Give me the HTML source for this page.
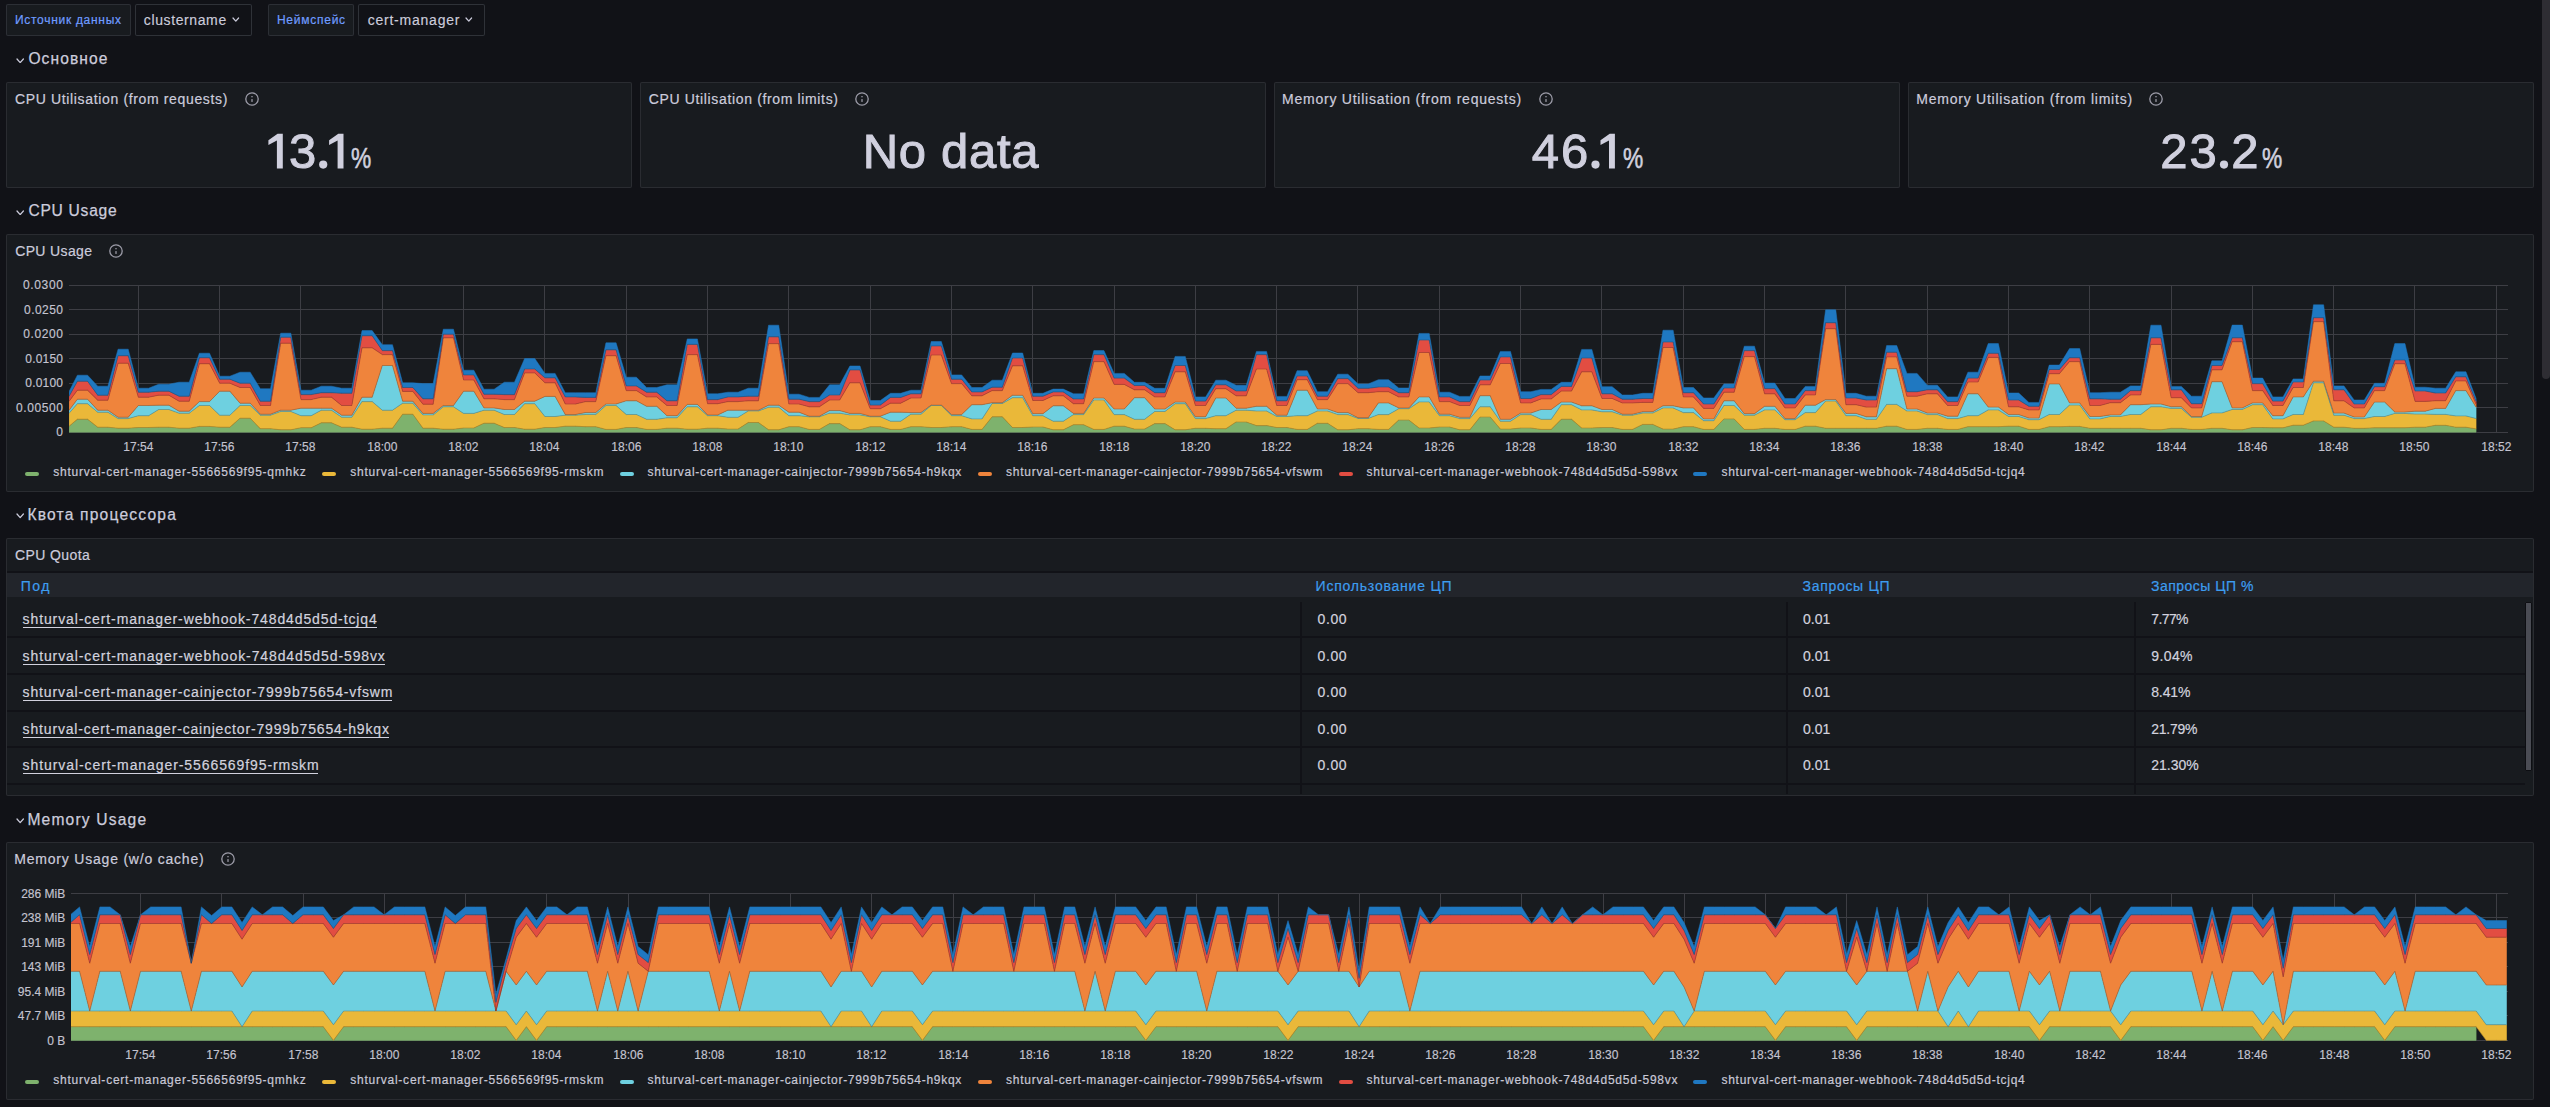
<!DOCTYPE html>
<html><head><meta charset="utf-8"><title>Grafana dashboard</title>
<style>
html,body{margin:0;padding:0;}
body{width:2550px;height:1107px;overflow:hidden;background:#111217;position:relative;font-family:"Liberation Sans",sans-serif;}
.a{position:absolute;}
.t{line-height:1;white-space:nowrap;}
</style></head><body>
<div class="a" style="left:6px;top:4px;width:125px;height:32px;background:#181b1f;box-shadow:inset 0 0 0 1px #2c2f35;border-radius:2px;"></div><div class="a" style="left:135px;top:4px;width:117px;height:32px;background:#111217;box-shadow:inset 0 0 0 1px #2f3238;border-radius:2px;"></div><div class="a" style="left:268px;top:4px;width:86px;height:32px;background:#181b1f;box-shadow:inset 0 0 0 1px #2c2f35;border-radius:2px;"></div><div class="a" style="left:358px;top:4px;width:127px;height:32px;background:#111217;box-shadow:inset 0 0 0 1px #2f3238;border-radius:2px;"></div><svg class="a" style="left:232.2px;top:17.4px" width="7.6" height="5.2"><path d="M1 1 L3.8 4.2 L6.6 1" fill="none" stroke="#ccccdc" stroke-width="1.2" stroke-linecap="round" stroke-linejoin="round"/></svg><svg class="a" style="left:465.0px;top:17.4px" width="7.6" height="5.2"><path d="M1 1 L3.8 4.2 L6.6 1" fill="none" stroke="#ccccdc" stroke-width="1.2" stroke-linecap="round" stroke-linejoin="round"/></svg><svg class="a" style="left:15.8px;top:57.900000000000006px" width="8.4" height="5.6"><path d="M1 1 L4.2 4.6 L7.4 1" fill="none" stroke="#ccccdc" stroke-width="1.25" stroke-linecap="round" stroke-linejoin="round"/></svg><svg class="a" style="left:15.8px;top:209.7px" width="8.4" height="5.6"><path d="M1 1 L4.2 4.6 L7.4 1" fill="none" stroke="#ccccdc" stroke-width="1.25" stroke-linecap="round" stroke-linejoin="round"/></svg><svg class="a" style="left:15.8px;top:513.4000000000001px" width="8.4" height="5.6"><path d="M1 1 L4.2 4.6 L7.4 1" fill="none" stroke="#ccccdc" stroke-width="1.25" stroke-linecap="round" stroke-linejoin="round"/></svg><svg class="a" style="left:15.8px;top:818.4000000000001px" width="8.4" height="5.6"><path d="M1 1 L4.2 4.6 L7.4 1" fill="none" stroke="#ccccdc" stroke-width="1.25" stroke-linecap="round" stroke-linejoin="round"/></svg><div class="a" style="left:6px;top:82px;width:626px;height:106px;background:#181b1f;box-shadow:inset 0 0 0 1px #2a2c31;border-radius:2px;"></div><svg class="a" style="left:243.8px;top:91px" width="16" height="16"><circle cx="8" cy="8" r="6.2" fill="none" stroke="#9c9ca8" stroke-width="1.3"/><rect x="7.35" y="8.1" width="1.3" height="2.8" fill="#9c9ca8"/><rect x="7.35" y="5.0" width="1.3" height="1.3" fill="#9c9ca8"/></svg><svg class="a" style="left:0;top:0;overflow:visible" width="1" height="1"><polygon points="268.40,140.20 277.60,133.70 282.80,133.70 282.80,168.40 276.90,168.40 276.90,140.60 268.40,144.90" fill="#d0d0de"/></svg><svg class="a" style="left:0;top:0;overflow:visible" width="1" height="1"><circle cx="323.20" cy="164.6" r="4.1" fill="#d0d0de"/></svg><svg class="a" style="left:0;top:0;overflow:visible" width="1" height="1"><polygon points="329.10,140.20 338.30,133.70 343.50,133.70 343.50,168.40 337.60,168.40 337.60,140.60 329.10,144.90" fill="#d0d0de"/></svg><div class="a" style="left:640px;top:82px;width:626px;height:106px;background:#181b1f;box-shadow:inset 0 0 0 1px #2a2c31;border-radius:2px;"></div><svg class="a" style="left:853.9px;top:91px" width="16" height="16"><circle cx="8" cy="8" r="6.2" fill="none" stroke="#9c9ca8" stroke-width="1.3"/><rect x="7.35" y="8.1" width="1.3" height="2.8" fill="#9c9ca8"/><rect x="7.35" y="5.0" width="1.3" height="1.3" fill="#9c9ca8"/></svg><div class="a" style="left:1274px;top:82px;width:626px;height:106px;background:#181b1f;box-shadow:inset 0 0 0 1px #2a2c31;border-radius:2px;"></div><svg class="a" style="left:1537.9px;top:91px" width="16" height="16"><circle cx="8" cy="8" r="6.2" fill="none" stroke="#9c9ca8" stroke-width="1.3"/><rect x="7.35" y="8.1" width="1.3" height="2.8" fill="#9c9ca8"/><rect x="7.35" y="5.0" width="1.3" height="1.3" fill="#9c9ca8"/></svg><svg class="a" style="left:0;top:0;overflow:visible" width="1" height="1"><circle cx="1595.50" cy="164.6" r="4.1" fill="#d0d0de"/></svg><svg class="a" style="left:0;top:0;overflow:visible" width="1" height="1"><polygon points="1600.50,140.20 1609.70,133.70 1614.90,133.70 1614.90,168.40 1609.00,168.40 1609.00,140.60 1600.50,144.90" fill="#d0d0de"/></svg><div class="a" style="left:1908px;top:82px;width:626px;height:106px;background:#181b1f;box-shadow:inset 0 0 0 1px #2a2c31;border-radius:2px;"></div><svg class="a" style="left:2147.9px;top:91px" width="16" height="16"><circle cx="8" cy="8" r="6.2" fill="none" stroke="#9c9ca8" stroke-width="1.3"/><rect x="7.35" y="8.1" width="1.3" height="2.8" fill="#9c9ca8"/><rect x="7.35" y="5.0" width="1.3" height="1.3" fill="#9c9ca8"/></svg><svg class="a" style="left:0;top:0;overflow:visible" width="1" height="1"><circle cx="2224.00" cy="164.6" r="4.1" fill="#d0d0de"/></svg><div class="a" style="left:6px;top:234px;width:2528px;height:258px;background:#181b1f;box-shadow:inset 0 0 0 1px #2a2c31;border-radius:2px;"></div><svg class="a" style="left:108px;top:243px" width="16" height="16"><circle cx="8" cy="8" r="6.2" fill="none" stroke="#9c9ca8" stroke-width="1.3"/><rect x="7.35" y="8.1" width="1.3" height="2.8" fill="#9c9ca8"/><rect x="7.35" y="5.0" width="1.3" height="1.3" fill="#9c9ca8"/></svg><svg class="a" style="left:0;top:0" width="2550" height="1107"><defs><clipPath id="cp285"><rect x="69" y="283.2" width="2438" height="150.0"/></clipPath></defs><line x1="69" y1="285.50" x2="2508" y2="285.50" stroke="#3d3e44" stroke-width="1"/><line x1="69" y1="309.50" x2="2508" y2="309.50" stroke="#3d3e44" stroke-width="1"/><line x1="69" y1="334.50" x2="2508" y2="334.50" stroke="#3d3e44" stroke-width="1"/><line x1="69" y1="358.50" x2="2508" y2="358.50" stroke="#3d3e44" stroke-width="1"/><line x1="69" y1="383.50" x2="2508" y2="383.50" stroke="#3d3e44" stroke-width="1"/><line x1="69" y1="407.50" x2="2508" y2="407.50" stroke="#3d3e44" stroke-width="1"/><line x1="69" y1="432.50" x2="2508" y2="432.50" stroke="#3d3e44" stroke-width="1"/><line x1="138.50" y1="285" x2="138.50" y2="433" stroke="#3d3e44" stroke-width="1"/><line x1="219.50" y1="285" x2="219.50" y2="433" stroke="#3d3e44" stroke-width="1"/><line x1="300.50" y1="285" x2="300.50" y2="433" stroke="#3d3e44" stroke-width="1"/><line x1="382.50" y1="285" x2="382.50" y2="433" stroke="#3d3e44" stroke-width="1"/><line x1="463.50" y1="285" x2="463.50" y2="433" stroke="#3d3e44" stroke-width="1"/><line x1="544.50" y1="285" x2="544.50" y2="433" stroke="#3d3e44" stroke-width="1"/><line x1="626.50" y1="285" x2="626.50" y2="433" stroke="#3d3e44" stroke-width="1"/><line x1="707.50" y1="285" x2="707.50" y2="433" stroke="#3d3e44" stroke-width="1"/><line x1="788.50" y1="285" x2="788.50" y2="433" stroke="#3d3e44" stroke-width="1"/><line x1="870.50" y1="285" x2="870.50" y2="433" stroke="#3d3e44" stroke-width="1"/><line x1="951.50" y1="285" x2="951.50" y2="433" stroke="#3d3e44" stroke-width="1"/><line x1="1032.50" y1="285" x2="1032.50" y2="433" stroke="#3d3e44" stroke-width="1"/><line x1="1114.50" y1="285" x2="1114.50" y2="433" stroke="#3d3e44" stroke-width="1"/><line x1="1195.50" y1="285" x2="1195.50" y2="433" stroke="#3d3e44" stroke-width="1"/><line x1="1276.50" y1="285" x2="1276.50" y2="433" stroke="#3d3e44" stroke-width="1"/><line x1="1357.50" y1="285" x2="1357.50" y2="433" stroke="#3d3e44" stroke-width="1"/><line x1="1439.50" y1="285" x2="1439.50" y2="433" stroke="#3d3e44" stroke-width="1"/><line x1="1520.50" y1="285" x2="1520.50" y2="433" stroke="#3d3e44" stroke-width="1"/><line x1="1601.50" y1="285" x2="1601.50" y2="433" stroke="#3d3e44" stroke-width="1"/><line x1="1683.50" y1="285" x2="1683.50" y2="433" stroke="#3d3e44" stroke-width="1"/><line x1="1764.50" y1="285" x2="1764.50" y2="433" stroke="#3d3e44" stroke-width="1"/><line x1="1845.50" y1="285" x2="1845.50" y2="433" stroke="#3d3e44" stroke-width="1"/><line x1="1927.50" y1="285" x2="1927.50" y2="433" stroke="#3d3e44" stroke-width="1"/><line x1="2008.50" y1="285" x2="2008.50" y2="433" stroke="#3d3e44" stroke-width="1"/><line x1="2089.50" y1="285" x2="2089.50" y2="433" stroke="#3d3e44" stroke-width="1"/><line x1="2171.50" y1="285" x2="2171.50" y2="433" stroke="#3d3e44" stroke-width="1"/><line x1="2252.50" y1="285" x2="2252.50" y2="433" stroke="#3d3e44" stroke-width="1"/><line x1="2333.50" y1="285" x2="2333.50" y2="433" stroke="#3d3e44" stroke-width="1"/><line x1="2414.50" y1="285" x2="2414.50" y2="433" stroke="#3d3e44" stroke-width="1"/><line x1="2496.50" y1="285" x2="2496.50" y2="433" stroke="#3d3e44" stroke-width="1"/><g clip-path="url(#cp285)"><polygon points="69.10,426.20 77.40,419.20 87.56,419.20 97.73,427.20 107.89,427.20 118.06,428.20 128.22,428.20 138.38,427.50 148.55,427.50 158.71,427.20 168.88,427.20 179.04,428.20 189.20,428.20 199.37,426.40 209.53,426.40 219.70,427.20 229.86,427.20 240.02,418.20 250.19,418.20 260.35,428.70 270.52,428.70 280.68,429.80 290.84,429.80 301.01,427.70 311.17,427.70 321.34,422.80 331.50,422.80 341.66,427.20 351.83,427.20 361.99,429.20 372.16,429.20 382.32,428.20 392.48,428.20 402.65,414.20 412.81,414.20 422.98,428.20 433.14,428.20 443.30,429.20 453.47,429.20 463.63,428.00 473.80,428.00 483.96,423.20 494.12,423.20 504.29,427.50 514.45,427.50 524.62,429.20 534.78,429.20 544.94,427.50 555.11,427.50 565.27,426.20 575.44,426.20 585.60,426.70 595.76,426.70 605.93,429.40 616.09,429.40 626.26,427.50 636.42,427.50 646.58,429.40 656.75,429.40 666.91,428.20 677.08,428.20 687.24,429.20 697.40,429.20 707.57,428.20 717.73,428.20 727.90,429.10 738.06,429.10 748.22,422.50 758.39,422.50 768.55,429.80 778.72,429.80 788.88,426.70 799.04,426.70 809.21,429.40 819.37,429.40 829.54,423.60 839.70,423.60 849.86,429.80 860.03,429.80 870.19,426.70 880.36,426.70 890.52,429.40 900.68,429.40 910.85,426.70 921.01,426.70 931.18,427.50 941.34,427.50 951.50,426.70 961.67,426.70 971.83,429.40 982.00,429.40 992.16,416.80 1002.32,416.80 1012.49,427.50 1022.65,427.50 1032.82,427.00 1042.98,427.00 1053.14,429.80 1063.31,429.80 1073.47,424.70 1083.64,424.70 1093.80,429.40 1103.96,429.40 1114.13,426.20 1124.29,426.20 1134.46,429.10 1144.62,429.10 1154.78,423.60 1164.95,423.60 1175.11,429.80 1185.28,429.80 1195.44,428.30 1205.60,428.30 1215.77,428.70 1225.93,428.70 1236.10,422.00 1246.26,422.00 1256.42,425.60 1266.59,425.60 1276.75,427.50 1286.92,427.50 1297.08,429.40 1307.24,429.40 1317.41,423.30 1327.57,423.30 1337.74,429.80 1347.90,429.80 1358.06,428.70 1368.23,428.70 1378.39,429.40 1388.56,429.40 1398.72,420.10 1408.88,420.10 1419.05,428.00 1429.21,428.00 1439.38,427.00 1449.54,427.00 1459.70,429.80 1469.87,429.80 1480.03,417.00 1490.20,417.00 1500.36,429.10 1510.52,429.10 1520.69,428.00 1530.85,428.00 1541.02,429.40 1551.18,429.40 1561.34,419.20 1571.51,419.20 1581.67,428.00 1591.84,428.00 1602.00,427.50 1612.16,427.50 1622.33,429.40 1632.49,429.40 1642.66,424.40 1652.82,424.40 1662.98,429.10 1673.15,429.10 1683.31,426.70 1693.48,426.70 1703.64,429.40 1713.80,429.40 1723.97,418.90 1734.13,418.90 1744.30,429.40 1754.46,429.40 1764.62,428.30 1774.79,428.30 1784.95,429.40 1795.12,429.40 1805.28,426.20 1815.44,426.20 1825.61,428.30 1835.77,428.30 1845.94,428.30 1856.10,428.30 1866.26,428.30 1876.43,428.30 1886.59,426.20 1896.76,426.20 1906.92,429.40 1917.08,429.40 1927.25,428.30 1937.41,428.30 1947.58,429.40 1957.74,429.40 1967.90,426.70 1978.07,426.70 1988.23,426.70 1998.40,426.70 2008.56,426.20 2018.72,426.20 2028.89,429.40 2039.05,429.40 2049.22,426.70 2059.38,426.70 2069.54,426.40 2079.71,426.40 2089.87,428.30 2100.04,428.30 2110.20,428.30 2120.36,428.30 2130.53,428.30 2140.69,428.30 2150.86,429.80 2161.02,429.80 2171.18,428.30 2181.35,428.30 2191.51,429.40 2201.68,429.40 2211.84,428.30 2222.00,428.30 2232.17,429.80 2242.33,429.80 2252.50,427.50 2262.66,427.50 2272.82,427.80 2282.99,427.80 2293.15,425.20 2303.32,425.20 2313.48,420.90 2323.64,420.90 2333.81,427.20 2343.97,427.20 2354.14,428.30 2364.30,428.30 2374.46,427.80 2384.63,427.80 2394.79,427.80 2404.96,427.80 2415.12,427.20 2425.28,427.20 2435.45,425.30 2445.61,425.30 2455.78,427.20 2465.94,427.20 2476.10,428.90 2476.10,432.2 69.10,432.2" fill="#7eb26d" stroke="#7eb26d" stroke-width="0.5" stroke-linejoin="round"/><polygon points="69.10,413.20 77.40,403.70 87.56,403.70 97.73,412.20 107.89,412.20 118.06,418.60 128.22,418.60 138.38,415.70 148.55,415.70 158.71,409.50 168.88,409.50 179.04,413.20 189.20,413.20 199.37,405.50 209.53,405.50 219.70,415.20 229.86,415.20 240.02,405.50 250.19,405.50 260.35,415.20 270.52,415.20 280.68,411.50 290.84,411.50 301.01,415.70 311.17,415.70 321.34,410.20 331.50,410.20 341.66,417.20 351.83,417.20 361.99,401.60 372.16,401.60 382.32,410.20 392.48,410.20 402.65,403.20 412.81,403.20 422.98,414.90 433.14,414.90 443.30,406.80 453.47,406.80 463.63,413.40 473.80,413.40 483.96,410.20 494.12,410.20 504.29,414.50 514.45,414.50 524.62,403.70 534.78,403.70 544.94,416.50 555.11,416.50 565.27,415.20 575.44,415.20 585.60,414.50 595.76,414.50 605.93,405.50 616.09,405.50 626.26,414.50 636.42,414.50 646.58,419.30 656.75,419.30 666.91,417.80 677.08,417.80 687.24,406.80 697.40,406.80 707.57,415.70 717.73,415.70 727.90,417.30 738.06,417.30 748.22,411.00 758.39,411.00 768.55,407.20 778.72,407.20 788.88,415.70 799.04,415.70 809.21,416.80 819.37,416.80 829.54,413.20 839.70,413.20 849.86,414.90 860.03,414.90 870.19,416.80 880.36,416.80 890.52,421.20 900.68,421.20 910.85,414.20 921.01,414.20 931.18,405.50 941.34,405.50 951.50,415.70 961.67,415.70 971.83,418.90 982.00,418.90 992.16,403.50 1002.32,403.50 1012.49,397.70 1022.65,397.70 1032.82,415.70 1042.98,415.70 1053.14,421.20 1063.31,421.20 1073.47,414.60 1083.64,414.60 1093.80,400.00 1103.96,400.00 1114.13,414.60 1124.29,414.60 1134.46,419.30 1144.62,419.30 1154.78,411.50 1164.95,411.50 1175.11,403.70 1185.28,403.70 1195.44,418.60 1205.60,418.60 1215.77,415.70 1225.93,415.70 1236.10,410.20 1246.26,410.20 1256.42,411.00 1266.59,411.00 1276.75,416.50 1286.92,416.50 1297.08,415.70 1307.24,415.70 1317.41,411.00 1327.57,411.00 1337.74,414.60 1347.90,414.60 1358.06,418.40 1368.23,418.40 1378.39,414.60 1388.56,414.60 1398.72,408.70 1408.88,408.70 1419.05,401.90 1429.21,401.90 1439.38,415.70 1449.54,415.70 1459.70,418.60 1469.87,418.60 1480.03,406.80 1490.20,406.80 1500.36,421.20 1510.52,421.20 1520.69,414.60 1530.85,414.60 1541.02,419.30 1551.18,419.30 1561.34,404.70 1571.51,404.70 1581.67,409.90 1591.84,409.90 1602.00,411.80 1612.16,411.80 1622.33,415.20 1632.49,415.20 1642.66,413.10 1652.82,413.10 1662.98,407.90 1673.15,407.90 1683.31,412.60 1693.48,412.60 1703.64,420.70 1713.80,420.70 1723.97,405.50 1734.13,405.50 1744.30,415.20 1754.46,415.20 1764.62,409.90 1774.79,409.90 1784.95,419.70 1795.12,419.70 1805.28,412.60 1815.44,412.60 1825.61,401.10 1835.77,401.10 1845.94,415.70 1856.10,415.70 1866.26,419.30 1876.43,419.30 1886.59,404.40 1896.76,404.40 1906.92,411.00 1917.08,411.00 1927.25,414.60 1937.41,414.60 1947.58,418.60 1957.74,418.60 1967.90,415.70 1978.07,415.70 1988.23,409.90 1998.40,409.90 2008.56,416.50 2018.72,416.50 2028.89,419.70 2039.05,419.70 2049.22,414.50 2059.38,414.50 2069.54,405.10 2079.71,405.10 2089.87,418.90 2100.04,418.90 2110.20,416.50 2120.36,416.50 2130.53,414.50 2140.69,414.50 2150.86,406.80 2161.02,406.80 2171.18,408.40 2181.35,408.40 2191.51,417.30 2201.68,417.30 2211.84,412.90 2222.00,412.90 2232.17,409.50 2242.33,409.50 2252.50,404.70 2262.66,404.70 2272.82,418.90 2282.99,418.90 2293.15,414.50 2303.32,414.50 2313.48,382.80 2323.64,382.80 2333.81,415.20 2343.97,415.20 2354.14,418.60 2364.30,418.60 2374.46,416.50 2384.63,416.50 2394.79,413.40 2404.96,413.40 2415.12,414.10 2425.28,414.10 2435.45,414.40 2445.61,414.40 2455.78,415.90 2465.94,415.90 2476.10,418.50 2476.10,428.90 2465.94,427.20 2455.78,427.20 2445.61,425.30 2435.45,425.30 2425.28,427.20 2415.12,427.20 2404.96,427.80 2394.79,427.80 2384.63,427.80 2374.46,427.80 2364.30,428.30 2354.14,428.30 2343.97,427.20 2333.81,427.20 2323.64,420.90 2313.48,420.90 2303.32,425.20 2293.15,425.20 2282.99,427.80 2272.82,427.80 2262.66,427.50 2252.50,427.50 2242.33,429.80 2232.17,429.80 2222.00,428.30 2211.84,428.30 2201.68,429.40 2191.51,429.40 2181.35,428.30 2171.18,428.30 2161.02,429.80 2150.86,429.80 2140.69,428.30 2130.53,428.30 2120.36,428.30 2110.20,428.30 2100.04,428.30 2089.87,428.30 2079.71,426.40 2069.54,426.40 2059.38,426.70 2049.22,426.70 2039.05,429.40 2028.89,429.40 2018.72,426.20 2008.56,426.20 1998.40,426.70 1988.23,426.70 1978.07,426.70 1967.90,426.70 1957.74,429.40 1947.58,429.40 1937.41,428.30 1927.25,428.30 1917.08,429.40 1906.92,429.40 1896.76,426.20 1886.59,426.20 1876.43,428.30 1866.26,428.30 1856.10,428.30 1845.94,428.30 1835.77,428.30 1825.61,428.30 1815.44,426.20 1805.28,426.20 1795.12,429.40 1784.95,429.40 1774.79,428.30 1764.62,428.30 1754.46,429.40 1744.30,429.40 1734.13,418.90 1723.97,418.90 1713.80,429.40 1703.64,429.40 1693.48,426.70 1683.31,426.70 1673.15,429.10 1662.98,429.10 1652.82,424.40 1642.66,424.40 1632.49,429.40 1622.33,429.40 1612.16,427.50 1602.00,427.50 1591.84,428.00 1581.67,428.00 1571.51,419.20 1561.34,419.20 1551.18,429.40 1541.02,429.40 1530.85,428.00 1520.69,428.00 1510.52,429.10 1500.36,429.10 1490.20,417.00 1480.03,417.00 1469.87,429.80 1459.70,429.80 1449.54,427.00 1439.38,427.00 1429.21,428.00 1419.05,428.00 1408.88,420.10 1398.72,420.10 1388.56,429.40 1378.39,429.40 1368.23,428.70 1358.06,428.70 1347.90,429.80 1337.74,429.80 1327.57,423.30 1317.41,423.30 1307.24,429.40 1297.08,429.40 1286.92,427.50 1276.75,427.50 1266.59,425.60 1256.42,425.60 1246.26,422.00 1236.10,422.00 1225.93,428.70 1215.77,428.70 1205.60,428.30 1195.44,428.30 1185.28,429.80 1175.11,429.80 1164.95,423.60 1154.78,423.60 1144.62,429.10 1134.46,429.10 1124.29,426.20 1114.13,426.20 1103.96,429.40 1093.80,429.40 1083.64,424.70 1073.47,424.70 1063.31,429.80 1053.14,429.80 1042.98,427.00 1032.82,427.00 1022.65,427.50 1012.49,427.50 1002.32,416.80 992.16,416.80 982.00,429.40 971.83,429.40 961.67,426.70 951.50,426.70 941.34,427.50 931.18,427.50 921.01,426.70 910.85,426.70 900.68,429.40 890.52,429.40 880.36,426.70 870.19,426.70 860.03,429.80 849.86,429.80 839.70,423.60 829.54,423.60 819.37,429.40 809.21,429.40 799.04,426.70 788.88,426.70 778.72,429.80 768.55,429.80 758.39,422.50 748.22,422.50 738.06,429.10 727.90,429.10 717.73,428.20 707.57,428.20 697.40,429.20 687.24,429.20 677.08,428.20 666.91,428.20 656.75,429.40 646.58,429.40 636.42,427.50 626.26,427.50 616.09,429.40 605.93,429.40 595.76,426.70 585.60,426.70 575.44,426.20 565.27,426.20 555.11,427.50 544.94,427.50 534.78,429.20 524.62,429.20 514.45,427.50 504.29,427.50 494.12,423.20 483.96,423.20 473.80,428.00 463.63,428.00 453.47,429.20 443.30,429.20 433.14,428.20 422.98,428.20 412.81,414.20 402.65,414.20 392.48,428.20 382.32,428.20 372.16,429.20 361.99,429.20 351.83,427.20 341.66,427.20 331.50,422.80 321.34,422.80 311.17,427.70 301.01,427.70 290.84,429.80 280.68,429.80 270.52,428.70 260.35,428.70 250.19,418.20 240.02,418.20 229.86,427.20 219.70,427.20 209.53,426.40 199.37,426.40 189.20,428.20 179.04,428.20 168.88,427.20 158.71,427.20 148.55,427.50 138.38,427.50 128.22,428.20 118.06,428.20 107.89,427.20 97.73,427.20 87.56,419.20 77.40,419.20 69.10,426.20" fill="#eab839" stroke="#eab839" stroke-width="0.5" stroke-linejoin="round"/><polygon points="69.10,410.20 77.40,399.20 87.56,399.20 97.73,410.20 107.89,410.20 118.06,417.20 128.22,417.20 138.38,405.50 148.55,405.50 158.71,405.20 168.88,405.20 179.04,411.20 189.20,411.20 199.37,401.60 209.53,401.60 219.70,391.20 229.86,391.20 240.02,403.20 250.19,403.20 260.35,414.20 270.52,414.20 280.68,410.20 290.84,410.20 301.01,408.20 311.17,408.20 321.34,408.20 331.50,408.20 341.66,415.20 351.83,415.20 361.99,397.20 372.16,397.20 382.32,365.50 392.48,365.50 402.65,401.20 412.81,401.20 422.98,413.40 433.14,413.40 443.30,405.50 453.47,405.50 463.63,391.20 473.80,391.20 483.96,407.90 494.12,407.90 504.29,409.50 514.45,409.50 524.62,401.20 534.78,401.20 544.94,396.40 555.11,396.40 565.27,414.50 575.44,414.50 585.60,412.60 595.76,412.60 605.93,404.00 616.09,404.00 626.26,400.80 636.42,400.80 646.58,406.30 656.75,406.30 666.91,415.70 677.08,415.70 687.24,404.40 697.40,404.40 707.57,414.90 717.73,414.90 727.90,410.20 738.06,410.20 748.22,410.20 758.39,410.20 768.55,405.20 778.72,405.20 788.88,412.20 799.04,412.20 809.21,416.20 819.37,416.20 829.54,410.60 839.70,410.60 849.86,413.40 860.03,413.40 870.19,416.20 880.36,416.20 890.52,412.20 900.68,412.20 910.85,412.60 921.01,412.60 931.18,405.10 941.34,405.10 951.50,414.60 961.67,414.60 971.83,404.70 982.00,404.70 992.16,402.70 1002.32,402.70 1012.49,395.30 1022.65,395.30 1032.82,413.70 1042.98,413.70 1053.14,405.80 1063.31,405.80 1073.47,413.40 1083.64,413.40 1093.80,398.00 1103.96,398.00 1114.13,409.00 1124.29,409.00 1134.46,397.70 1144.62,397.70 1154.78,409.00 1164.95,409.00 1175.11,402.10 1185.28,402.10 1195.44,416.80 1205.60,416.80 1215.77,398.00 1225.93,398.00 1236.10,408.20 1246.26,408.20 1256.42,406.30 1266.59,406.30 1276.75,415.20 1286.92,415.20 1297.08,390.20 1307.24,390.20 1317.41,409.00 1327.57,409.00 1337.74,412.60 1347.90,412.60 1358.06,417.80 1368.23,417.80 1378.39,402.90 1388.56,402.90 1398.72,407.90 1408.88,407.90 1419.05,396.90 1429.21,396.90 1439.38,414.20 1449.54,414.20 1459.70,417.30 1469.87,417.30 1480.03,395.70 1490.20,395.70 1500.36,419.30 1510.52,419.30 1520.69,413.10 1530.85,413.10 1541.02,409.50 1551.18,409.50 1561.34,402.10 1571.51,402.10 1581.67,405.80 1591.84,405.80 1602.00,409.50 1612.16,409.50 1622.33,414.20 1632.49,414.20 1642.66,411.80 1652.82,411.80 1662.98,405.80 1673.15,405.80 1683.31,407.90 1693.48,407.90 1703.64,418.90 1713.80,418.90 1723.97,400.80 1734.13,400.80 1744.30,413.70 1754.46,413.70 1764.62,406.30 1774.79,406.30 1784.95,418.60 1795.12,418.60 1805.28,405.20 1815.44,405.20 1825.61,399.60 1835.77,399.60 1845.94,413.40 1856.10,413.40 1866.26,416.80 1876.43,416.80 1886.59,368.70 1896.76,368.70 1906.92,409.00 1917.08,409.00 1927.25,413.10 1937.41,413.10 1947.58,416.20 1957.74,416.20 1967.90,393.80 1978.07,393.80 1988.23,407.10 1998.40,407.10 2008.56,414.60 2018.72,414.60 2028.89,418.10 2039.05,418.10 2049.22,383.90 2059.38,383.90 2069.54,402.90 2079.71,402.90 2089.87,416.50 2100.04,416.50 2110.20,414.90 2120.36,414.90 2130.53,404.70 2140.69,404.70 2150.86,404.00 2161.02,404.00 2171.18,406.80 2181.35,406.80 2191.51,416.50 2201.68,416.50 2211.84,381.70 2222.00,381.70 2232.17,407.90 2242.33,407.90 2252.50,402.90 2262.66,402.90 2272.82,415.70 2282.99,415.70 2293.15,396.90 2303.32,396.90 2313.48,381.20 2323.64,381.20 2333.81,413.10 2343.97,413.10 2354.14,417.00 2364.30,417.00 2374.46,402.10 2384.63,402.10 2394.79,412.10 2404.96,412.10 2415.12,411.20 2425.28,411.20 2435.45,408.40 2445.61,408.40 2455.78,390.60 2465.94,390.60 2476.10,407.20 2476.10,418.50 2465.94,415.90 2455.78,415.90 2445.61,414.40 2435.45,414.40 2425.28,414.10 2415.12,414.10 2404.96,413.40 2394.79,413.40 2384.63,416.50 2374.46,416.50 2364.30,418.60 2354.14,418.60 2343.97,415.20 2333.81,415.20 2323.64,382.80 2313.48,382.80 2303.32,414.50 2293.15,414.50 2282.99,418.90 2272.82,418.90 2262.66,404.70 2252.50,404.70 2242.33,409.50 2232.17,409.50 2222.00,412.90 2211.84,412.90 2201.68,417.30 2191.51,417.30 2181.35,408.40 2171.18,408.40 2161.02,406.80 2150.86,406.80 2140.69,414.50 2130.53,414.50 2120.36,416.50 2110.20,416.50 2100.04,418.90 2089.87,418.90 2079.71,405.10 2069.54,405.10 2059.38,414.50 2049.22,414.50 2039.05,419.70 2028.89,419.70 2018.72,416.50 2008.56,416.50 1998.40,409.90 1988.23,409.90 1978.07,415.70 1967.90,415.70 1957.74,418.60 1947.58,418.60 1937.41,414.60 1927.25,414.60 1917.08,411.00 1906.92,411.00 1896.76,404.40 1886.59,404.40 1876.43,419.30 1866.26,419.30 1856.10,415.70 1845.94,415.70 1835.77,401.10 1825.61,401.10 1815.44,412.60 1805.28,412.60 1795.12,419.70 1784.95,419.70 1774.79,409.90 1764.62,409.90 1754.46,415.20 1744.30,415.20 1734.13,405.50 1723.97,405.50 1713.80,420.70 1703.64,420.70 1693.48,412.60 1683.31,412.60 1673.15,407.90 1662.98,407.90 1652.82,413.10 1642.66,413.10 1632.49,415.20 1622.33,415.20 1612.16,411.80 1602.00,411.80 1591.84,409.90 1581.67,409.90 1571.51,404.70 1561.34,404.70 1551.18,419.30 1541.02,419.30 1530.85,414.60 1520.69,414.60 1510.52,421.20 1500.36,421.20 1490.20,406.80 1480.03,406.80 1469.87,418.60 1459.70,418.60 1449.54,415.70 1439.38,415.70 1429.21,401.90 1419.05,401.90 1408.88,408.70 1398.72,408.70 1388.56,414.60 1378.39,414.60 1368.23,418.40 1358.06,418.40 1347.90,414.60 1337.74,414.60 1327.57,411.00 1317.41,411.00 1307.24,415.70 1297.08,415.70 1286.92,416.50 1276.75,416.50 1266.59,411.00 1256.42,411.00 1246.26,410.20 1236.10,410.20 1225.93,415.70 1215.77,415.70 1205.60,418.60 1195.44,418.60 1185.28,403.70 1175.11,403.70 1164.95,411.50 1154.78,411.50 1144.62,419.30 1134.46,419.30 1124.29,414.60 1114.13,414.60 1103.96,400.00 1093.80,400.00 1083.64,414.60 1073.47,414.60 1063.31,421.20 1053.14,421.20 1042.98,415.70 1032.82,415.70 1022.65,397.70 1012.49,397.70 1002.32,403.50 992.16,403.50 982.00,418.90 971.83,418.90 961.67,415.70 951.50,415.70 941.34,405.50 931.18,405.50 921.01,414.20 910.85,414.20 900.68,421.20 890.52,421.20 880.36,416.80 870.19,416.80 860.03,414.90 849.86,414.90 839.70,413.20 829.54,413.20 819.37,416.80 809.21,416.80 799.04,415.70 788.88,415.70 778.72,407.20 768.55,407.20 758.39,411.00 748.22,411.00 738.06,417.30 727.90,417.30 717.73,415.70 707.57,415.70 697.40,406.80 687.24,406.80 677.08,417.80 666.91,417.80 656.75,419.30 646.58,419.30 636.42,414.50 626.26,414.50 616.09,405.50 605.93,405.50 595.76,414.50 585.60,414.50 575.44,415.20 565.27,415.20 555.11,416.50 544.94,416.50 534.78,403.70 524.62,403.70 514.45,414.50 504.29,414.50 494.12,410.20 483.96,410.20 473.80,413.40 463.63,413.40 453.47,406.80 443.30,406.80 433.14,414.90 422.98,414.90 412.81,403.20 402.65,403.20 392.48,410.20 382.32,410.20 372.16,401.60 361.99,401.60 351.83,417.20 341.66,417.20 331.50,410.20 321.34,410.20 311.17,415.70 301.01,415.70 290.84,411.50 280.68,411.50 270.52,415.20 260.35,415.20 250.19,405.50 240.02,405.50 229.86,415.20 219.70,415.20 209.53,405.50 199.37,405.50 189.20,413.20 179.04,413.20 168.88,409.50 158.71,409.50 148.55,415.70 138.38,415.70 128.22,418.60 118.06,418.60 107.89,412.20 97.73,412.20 87.56,403.70 77.40,403.70 69.10,413.20" fill="#6ed0e0" stroke="#6ed0e0" stroke-width="0.5" stroke-linejoin="round"/><polygon points="69.10,401.20 77.40,390.20 87.56,390.20 97.73,400.20 107.89,400.20 118.06,363.20 128.22,363.20 138.38,397.20 148.55,397.20 158.71,395.20 168.88,395.20 179.04,401.20 189.20,401.20 199.37,363.70 209.53,363.70 219.70,383.20 229.86,383.20 240.02,387.50 250.19,387.50 260.35,405.50 270.52,405.50 280.68,343.20 290.84,343.20 301.01,399.60 311.17,399.60 321.34,397.20 331.50,397.20 341.66,405.50 351.83,405.50 361.99,347.80 372.16,347.80 382.32,354.60 392.48,354.60 402.65,391.40 412.81,391.40 422.98,404.20 433.14,404.20 443.30,337.80 453.47,337.80 463.63,380.00 473.80,380.00 483.96,398.80 494.12,398.80 504.29,399.60 514.45,399.60 524.62,372.90 534.78,372.90 544.94,382.80 555.11,382.80 565.27,404.00 575.44,404.00 585.60,401.60 595.76,401.60 605.93,355.70 616.09,355.70 626.26,390.60 636.42,390.60 646.58,396.90 656.75,396.90 666.91,405.50 677.08,405.50 687.24,354.60 697.40,354.60 707.57,403.70 717.73,403.70 727.90,401.60 738.06,401.60 748.22,400.80 758.39,400.80 768.55,343.60 778.72,343.60 788.88,404.00 799.04,404.00 809.21,406.80 819.37,406.80 829.54,400.00 839.70,400.00 849.86,382.80 860.03,382.80 870.19,408.70 880.36,408.70 890.52,403.20 900.68,403.20 910.85,398.00 921.01,398.00 931.18,355.00 941.34,355.00 951.50,383.60 961.67,383.60 971.83,395.80 982.00,395.80 992.16,390.60 1002.32,390.60 1012.49,365.80 1022.65,365.80 1032.82,400.50 1042.98,400.50 1053.14,395.80 1063.31,395.80 1073.47,403.70 1083.64,403.70 1093.80,361.60 1103.96,361.60 1114.13,384.40 1124.29,384.40 1134.46,389.80 1144.62,389.80 1154.78,396.90 1164.95,396.90 1175.11,371.80 1185.28,371.80 1195.44,405.50 1205.60,405.50 1215.77,388.70 1225.93,388.70 1236.10,395.80 1246.26,395.80 1256.42,369.00 1266.59,369.00 1276.75,405.50 1286.92,405.50 1297.08,379.70 1307.24,379.70 1317.41,399.60 1327.57,399.60 1337.74,383.60 1347.90,383.60 1358.06,392.70 1368.23,392.70 1378.39,391.70 1388.56,391.70 1398.72,396.90 1408.88,396.90 1419.05,352.50 1429.21,352.50 1439.38,401.60 1449.54,401.60 1459.70,405.50 1469.87,405.50 1480.03,384.80 1490.20,384.80 1500.36,363.50 1510.52,363.50 1520.69,402.90 1530.85,402.90 1541.02,398.90 1551.18,398.90 1561.34,391.10 1571.51,391.10 1581.67,371.80 1591.84,371.80 1602.00,398.50 1612.16,398.50 1622.33,402.90 1632.49,402.90 1642.66,402.40 1652.82,402.40 1662.98,347.50 1673.15,347.50 1683.31,396.90 1693.48,396.90 1703.64,408.40 1713.80,408.40 1723.97,392.20 1734.13,392.20 1744.30,356.60 1754.46,356.60 1764.62,393.80 1774.79,393.80 1784.95,407.90 1795.12,407.90 1805.28,394.90 1815.44,394.90 1825.61,328.70 1835.77,328.70 1845.94,404.70 1856.10,404.70 1866.26,407.10 1876.43,407.10 1886.59,356.90 1896.76,356.90 1906.92,396.20 1917.08,396.20 1927.25,393.80 1937.41,393.80 1947.58,405.50 1957.74,405.50 1967.90,382.00 1978.07,382.00 1988.23,357.40 1998.40,357.40 2008.56,406.80 2018.72,406.80 2028.89,409.90 2039.05,409.90 2049.22,373.70 2059.38,373.70 2069.54,361.60 2079.71,361.60 2089.87,405.50 2100.04,405.50 2110.20,402.70 2120.36,402.70 2130.53,394.90 2140.69,394.90 2150.86,344.40 2161.02,344.40 2171.18,397.70 2181.35,397.70 2191.51,407.90 2201.68,407.90 2211.84,369.80 2222.00,369.80 2232.17,341.70 2242.33,341.70 2252.50,390.60 2262.66,390.60 2272.82,405.50 2282.99,405.50 2293.15,387.50 2303.32,387.50 2313.48,321.60 2323.64,321.60 2333.81,400.80 2343.97,400.80 2354.14,407.90 2364.30,407.90 2374.46,390.60 2384.63,390.60 2394.79,363.70 2404.96,363.70 2415.12,401.40 2425.28,401.40 2435.45,400.70 2445.61,400.70 2455.78,380.90 2465.94,380.90 2476.10,404.30 2476.10,407.20 2465.94,390.60 2455.78,390.60 2445.61,408.40 2435.45,408.40 2425.28,411.20 2415.12,411.20 2404.96,412.10 2394.79,412.10 2384.63,402.10 2374.46,402.10 2364.30,417.00 2354.14,417.00 2343.97,413.10 2333.81,413.10 2323.64,381.20 2313.48,381.20 2303.32,396.90 2293.15,396.90 2282.99,415.70 2272.82,415.70 2262.66,402.90 2252.50,402.90 2242.33,407.90 2232.17,407.90 2222.00,381.70 2211.84,381.70 2201.68,416.50 2191.51,416.50 2181.35,406.80 2171.18,406.80 2161.02,404.00 2150.86,404.00 2140.69,404.70 2130.53,404.70 2120.36,414.90 2110.20,414.90 2100.04,416.50 2089.87,416.50 2079.71,402.90 2069.54,402.90 2059.38,383.90 2049.22,383.90 2039.05,418.10 2028.89,418.10 2018.72,414.60 2008.56,414.60 1998.40,407.10 1988.23,407.10 1978.07,393.80 1967.90,393.80 1957.74,416.20 1947.58,416.20 1937.41,413.10 1927.25,413.10 1917.08,409.00 1906.92,409.00 1896.76,368.70 1886.59,368.70 1876.43,416.80 1866.26,416.80 1856.10,413.40 1845.94,413.40 1835.77,399.60 1825.61,399.60 1815.44,405.20 1805.28,405.20 1795.12,418.60 1784.95,418.60 1774.79,406.30 1764.62,406.30 1754.46,413.70 1744.30,413.70 1734.13,400.80 1723.97,400.80 1713.80,418.90 1703.64,418.90 1693.48,407.90 1683.31,407.90 1673.15,405.80 1662.98,405.80 1652.82,411.80 1642.66,411.80 1632.49,414.20 1622.33,414.20 1612.16,409.50 1602.00,409.50 1591.84,405.80 1581.67,405.80 1571.51,402.10 1561.34,402.10 1551.18,409.50 1541.02,409.50 1530.85,413.10 1520.69,413.10 1510.52,419.30 1500.36,419.30 1490.20,395.70 1480.03,395.70 1469.87,417.30 1459.70,417.30 1449.54,414.20 1439.38,414.20 1429.21,396.90 1419.05,396.90 1408.88,407.90 1398.72,407.90 1388.56,402.90 1378.39,402.90 1368.23,417.80 1358.06,417.80 1347.90,412.60 1337.74,412.60 1327.57,409.00 1317.41,409.00 1307.24,390.20 1297.08,390.20 1286.92,415.20 1276.75,415.20 1266.59,406.30 1256.42,406.30 1246.26,408.20 1236.10,408.20 1225.93,398.00 1215.77,398.00 1205.60,416.80 1195.44,416.80 1185.28,402.10 1175.11,402.10 1164.95,409.00 1154.78,409.00 1144.62,397.70 1134.46,397.70 1124.29,409.00 1114.13,409.00 1103.96,398.00 1093.80,398.00 1083.64,413.40 1073.47,413.40 1063.31,405.80 1053.14,405.80 1042.98,413.70 1032.82,413.70 1022.65,395.30 1012.49,395.30 1002.32,402.70 992.16,402.70 982.00,404.70 971.83,404.70 961.67,414.60 951.50,414.60 941.34,405.10 931.18,405.10 921.01,412.60 910.85,412.60 900.68,412.20 890.52,412.20 880.36,416.20 870.19,416.20 860.03,413.40 849.86,413.40 839.70,410.60 829.54,410.60 819.37,416.20 809.21,416.20 799.04,412.20 788.88,412.20 778.72,405.20 768.55,405.20 758.39,410.20 748.22,410.20 738.06,410.20 727.90,410.20 717.73,414.90 707.57,414.90 697.40,404.40 687.24,404.40 677.08,415.70 666.91,415.70 656.75,406.30 646.58,406.30 636.42,400.80 626.26,400.80 616.09,404.00 605.93,404.00 595.76,412.60 585.60,412.60 575.44,414.50 565.27,414.50 555.11,396.40 544.94,396.40 534.78,401.20 524.62,401.20 514.45,409.50 504.29,409.50 494.12,407.90 483.96,407.90 473.80,391.20 463.63,391.20 453.47,405.50 443.30,405.50 433.14,413.40 422.98,413.40 412.81,401.20 402.65,401.20 392.48,365.50 382.32,365.50 372.16,397.20 361.99,397.20 351.83,415.20 341.66,415.20 331.50,408.20 321.34,408.20 311.17,408.20 301.01,408.20 290.84,410.20 280.68,410.20 270.52,414.20 260.35,414.20 250.19,403.20 240.02,403.20 229.86,391.20 219.70,391.20 209.53,401.60 199.37,401.60 189.20,411.20 179.04,411.20 168.88,405.20 158.71,405.20 148.55,405.50 138.38,405.50 128.22,417.20 118.06,417.20 107.89,410.20 97.73,410.20 87.56,399.20 77.40,399.20 69.10,410.20" fill="#ef843c" stroke="#ef843c" stroke-width="0.5" stroke-linejoin="round"/><polygon points="69.10,396.20 77.40,381.20 87.56,381.20 97.73,395.20 107.89,395.20 118.06,355.70 128.22,355.70 138.38,392.20 148.55,392.20 158.71,391.20 168.88,391.20 179.04,396.20 189.20,396.20 199.37,357.70 209.53,357.70 219.70,379.20 229.86,379.20 240.02,383.20 250.19,383.20 260.35,401.20 270.52,401.20 280.68,337.20 290.84,337.20 301.01,394.60 311.17,394.60 321.34,392.70 331.50,392.70 341.66,393.20 351.83,393.20 361.99,335.70 372.16,335.70 382.32,350.60 392.48,350.60 402.65,387.50 412.81,387.50 422.98,398.80 433.14,398.80 443.30,334.20 453.47,334.20 463.63,374.90 473.80,374.90 483.96,394.20 494.12,394.20 504.29,394.60 514.45,394.60 524.62,369.00 534.78,369.00 544.94,377.80 555.11,377.80 565.27,396.90 575.44,396.90 585.60,397.40 595.76,397.40 605.93,349.80 616.09,349.80 626.26,385.90 636.42,385.90 646.58,392.20 656.75,392.20 666.91,400.80 677.08,400.80 687.24,344.40 697.40,344.40 707.57,399.60 717.73,399.60 727.90,396.90 738.06,396.90 748.22,396.20 758.39,396.20 768.55,336.80 778.72,336.80 788.88,399.20 799.04,399.20 809.21,401.60 819.37,401.60 829.54,395.00 839.70,395.00 849.86,369.90 860.03,369.90 870.19,405.10 880.36,405.10 890.52,397.40 900.68,397.40 910.85,393.80 921.01,393.80 931.18,345.90 941.34,345.90 951.50,379.20 961.67,379.20 971.83,391.90 982.00,391.90 992.16,387.20 1002.32,387.20 1012.49,358.00 1022.65,358.00 1032.82,396.20 1042.98,396.20 1053.14,391.90 1063.31,391.90 1073.47,398.90 1083.64,398.90 1093.80,354.60 1103.96,354.60 1114.13,378.10 1124.29,378.10 1134.46,385.50 1144.62,385.50 1154.78,392.70 1164.95,392.70 1175.11,365.50 1185.28,365.50 1195.44,401.10 1205.60,401.10 1215.77,384.80 1225.93,384.80 1236.10,390.90 1246.26,390.90 1256.42,354.60 1266.59,354.60 1276.75,400.80 1286.92,400.80 1297.08,376.00 1307.24,376.00 1317.41,396.20 1327.57,396.20 1337.74,378.60 1347.90,378.60 1358.06,388.30 1368.23,388.30 1378.39,387.00 1388.56,387.00 1398.72,392.70 1408.88,392.70 1419.05,340.00 1429.21,340.00 1439.38,396.90 1449.54,396.90 1459.70,401.60 1469.87,401.60 1480.03,380.00 1490.20,380.00 1500.36,356.90 1510.52,356.90 1520.69,398.50 1530.85,398.50 1541.02,394.60 1551.18,394.60 1561.34,386.40 1571.51,386.40 1581.67,358.00 1591.84,358.00 1602.00,393.80 1612.16,393.80 1622.33,399.20 1632.49,399.20 1642.66,398.50 1652.82,398.50 1662.98,342.00 1673.15,342.00 1683.31,392.70 1693.48,392.70 1703.64,404.00 1713.80,404.00 1723.97,388.00 1734.13,388.00 1744.30,350.60 1754.46,350.60 1764.62,388.60 1774.79,388.60 1784.95,404.00 1795.12,404.00 1805.28,390.60 1815.44,390.60 1825.61,322.70 1835.77,322.70 1845.94,398.00 1856.10,398.00 1866.26,400.00 1876.43,400.00 1886.59,352.20 1896.76,352.20 1906.92,391.70 1917.08,391.70 1927.25,389.80 1937.41,389.80 1947.58,401.60 1957.74,401.60 1967.90,378.10 1978.07,378.10 1988.23,353.30 1998.40,353.30 2008.56,400.00 2018.72,400.00 2028.89,406.30 2039.05,406.30 2049.22,369.50 2059.38,369.50 2069.54,357.70 2079.71,357.70 2089.87,398.80 2100.04,398.80 2110.20,399.20 2120.36,399.20 2130.53,390.60 2140.69,390.60 2150.86,337.80 2161.02,337.80 2171.18,389.80 2181.35,389.80 2191.51,403.70 2201.68,403.70 2211.84,365.50 2222.00,365.50 2232.17,337.80 2242.33,337.80 2252.50,383.60 2262.66,383.60 2272.82,401.10 2282.99,401.10 2293.15,382.00 2303.32,382.00 2313.48,317.70 2323.64,317.70 2333.81,389.80 2343.97,389.80 2354.14,404.00 2364.30,404.00 2374.46,386.70 2384.63,386.70 2394.79,360.00 2404.96,360.00 2415.12,391.00 2425.28,391.00 2435.45,393.00 2445.61,393.00 2455.78,376.80 2465.94,376.80 2476.10,401.40 2476.10,404.30 2465.94,380.90 2455.78,380.90 2445.61,400.70 2435.45,400.70 2425.28,401.40 2415.12,401.40 2404.96,363.70 2394.79,363.70 2384.63,390.60 2374.46,390.60 2364.30,407.90 2354.14,407.90 2343.97,400.80 2333.81,400.80 2323.64,321.60 2313.48,321.60 2303.32,387.50 2293.15,387.50 2282.99,405.50 2272.82,405.50 2262.66,390.60 2252.50,390.60 2242.33,341.70 2232.17,341.70 2222.00,369.80 2211.84,369.80 2201.68,407.90 2191.51,407.90 2181.35,397.70 2171.18,397.70 2161.02,344.40 2150.86,344.40 2140.69,394.90 2130.53,394.90 2120.36,402.70 2110.20,402.70 2100.04,405.50 2089.87,405.50 2079.71,361.60 2069.54,361.60 2059.38,373.70 2049.22,373.70 2039.05,409.90 2028.89,409.90 2018.72,406.80 2008.56,406.80 1998.40,357.40 1988.23,357.40 1978.07,382.00 1967.90,382.00 1957.74,405.50 1947.58,405.50 1937.41,393.80 1927.25,393.80 1917.08,396.20 1906.92,396.20 1896.76,356.90 1886.59,356.90 1876.43,407.10 1866.26,407.10 1856.10,404.70 1845.94,404.70 1835.77,328.70 1825.61,328.70 1815.44,394.90 1805.28,394.90 1795.12,407.90 1784.95,407.90 1774.79,393.80 1764.62,393.80 1754.46,356.60 1744.30,356.60 1734.13,392.20 1723.97,392.20 1713.80,408.40 1703.64,408.40 1693.48,396.90 1683.31,396.90 1673.15,347.50 1662.98,347.50 1652.82,402.40 1642.66,402.40 1632.49,402.90 1622.33,402.90 1612.16,398.50 1602.00,398.50 1591.84,371.80 1581.67,371.80 1571.51,391.10 1561.34,391.10 1551.18,398.90 1541.02,398.90 1530.85,402.90 1520.69,402.90 1510.52,363.50 1500.36,363.50 1490.20,384.80 1480.03,384.80 1469.87,405.50 1459.70,405.50 1449.54,401.60 1439.38,401.60 1429.21,352.50 1419.05,352.50 1408.88,396.90 1398.72,396.90 1388.56,391.70 1378.39,391.70 1368.23,392.70 1358.06,392.70 1347.90,383.60 1337.74,383.60 1327.57,399.60 1317.41,399.60 1307.24,379.70 1297.08,379.70 1286.92,405.50 1276.75,405.50 1266.59,369.00 1256.42,369.00 1246.26,395.80 1236.10,395.80 1225.93,388.70 1215.77,388.70 1205.60,405.50 1195.44,405.50 1185.28,371.80 1175.11,371.80 1164.95,396.90 1154.78,396.90 1144.62,389.80 1134.46,389.80 1124.29,384.40 1114.13,384.40 1103.96,361.60 1093.80,361.60 1083.64,403.70 1073.47,403.70 1063.31,395.80 1053.14,395.80 1042.98,400.50 1032.82,400.50 1022.65,365.80 1012.49,365.80 1002.32,390.60 992.16,390.60 982.00,395.80 971.83,395.80 961.67,383.60 951.50,383.60 941.34,355.00 931.18,355.00 921.01,398.00 910.85,398.00 900.68,403.20 890.52,403.20 880.36,408.70 870.19,408.70 860.03,382.80 849.86,382.80 839.70,400.00 829.54,400.00 819.37,406.80 809.21,406.80 799.04,404.00 788.88,404.00 778.72,343.60 768.55,343.60 758.39,400.80 748.22,400.80 738.06,401.60 727.90,401.60 717.73,403.70 707.57,403.70 697.40,354.60 687.24,354.60 677.08,405.50 666.91,405.50 656.75,396.90 646.58,396.90 636.42,390.60 626.26,390.60 616.09,355.70 605.93,355.70 595.76,401.60 585.60,401.60 575.44,404.00 565.27,404.00 555.11,382.80 544.94,382.80 534.78,372.90 524.62,372.90 514.45,399.60 504.29,399.60 494.12,398.80 483.96,398.80 473.80,380.00 463.63,380.00 453.47,337.80 443.30,337.80 433.14,404.20 422.98,404.20 412.81,391.40 402.65,391.40 392.48,354.60 382.32,354.60 372.16,347.80 361.99,347.80 351.83,405.50 341.66,405.50 331.50,397.20 321.34,397.20 311.17,399.60 301.01,399.60 290.84,343.20 280.68,343.20 270.52,405.50 260.35,405.50 250.19,387.50 240.02,387.50 229.86,383.20 219.70,383.20 209.53,363.70 199.37,363.70 189.20,401.20 179.04,401.20 168.88,395.20 158.71,395.20 148.55,397.20 138.38,397.20 128.22,363.20 118.06,363.20 107.89,400.20 97.73,400.20 87.56,390.20 77.40,390.20 69.10,401.20" fill="#e24d42" stroke="#e24d42" stroke-width="0.5" stroke-linejoin="round"/><polygon points="69.10,391.40 77.40,375.20 87.56,375.20 97.73,386.20 107.89,386.20 118.06,349.20 128.22,349.20 138.38,388.20 148.55,388.20 158.71,384.20 168.88,384.20 179.04,382.20 189.20,382.20 199.37,353.20 209.53,353.20 219.70,376.20 229.86,376.20 240.02,372.20 250.19,372.20 260.35,388.70 270.52,388.70 280.68,333.20 290.84,333.20 301.01,390.20 311.17,390.20 321.34,386.20 331.50,386.20 341.66,388.20 351.83,388.20 361.99,330.60 372.16,330.60 382.32,344.70 392.48,344.70 402.65,382.80 412.81,382.80 422.98,383.60 433.14,383.60 443.30,329.20 453.47,329.20 463.63,370.20 473.80,370.20 483.96,389.20 494.12,389.20 504.29,382.20 514.45,382.20 524.62,358.50 534.78,358.50 544.94,373.40 555.11,373.40 565.27,392.70 575.44,392.70 585.60,392.70 595.76,392.70 605.93,342.80 616.09,342.80 626.26,377.20 636.42,377.20 646.58,387.50 656.75,387.50 666.91,384.80 677.08,384.80 687.24,338.90 697.40,338.90 707.57,393.80 717.73,393.80 727.90,392.20 738.06,392.20 748.22,388.20 758.39,388.20 768.55,325.20 778.72,325.20 788.88,394.20 799.04,394.20 809.21,397.40 819.37,397.40 829.54,384.80 839.70,384.80 849.86,366.00 860.03,366.00 870.19,400.50 880.36,400.50 890.52,393.30 900.68,393.30 910.85,390.20 921.01,390.20 931.18,341.50 941.34,341.50 951.50,374.90 961.67,374.90 971.83,387.50 982.00,387.50 992.16,380.20 1002.32,380.20 1012.49,353.00 1022.65,353.00 1032.82,393.30 1042.98,393.30 1053.14,389.10 1063.31,389.10 1073.47,393.80 1083.64,393.80 1093.80,350.60 1103.96,350.60 1114.13,373.40 1124.29,373.40 1134.46,382.30 1144.62,382.30 1154.78,388.30 1164.95,388.30 1175.11,356.40 1185.28,356.40 1195.44,396.90 1205.60,396.90 1215.77,380.20 1225.93,380.20 1236.10,385.20 1246.26,385.20 1256.42,351.40 1266.59,351.40 1276.75,396.40 1286.92,396.40 1297.08,370.70 1307.24,370.70 1317.41,391.70 1327.57,391.70 1337.74,374.20 1347.90,374.20 1358.06,383.90 1368.23,383.90 1378.39,379.70 1388.56,379.70 1398.72,388.00 1408.88,388.00 1419.05,333.40 1429.21,333.40 1439.38,392.20 1449.54,392.20 1459.70,396.40 1469.87,396.40 1480.03,376.00 1490.20,376.00 1500.36,351.40 1510.52,351.40 1520.69,391.70 1530.85,391.70 1541.02,389.40 1551.18,389.40 1561.34,382.30 1571.51,382.30 1581.67,349.40 1591.84,349.40 1602.00,386.70 1612.16,386.70 1622.33,395.00 1632.49,395.00 1642.66,393.30 1652.82,393.30 1662.98,330.20 1673.15,330.20 1683.31,387.50 1693.48,387.50 1703.64,398.00 1713.80,398.00 1723.97,383.90 1734.13,383.90 1744.30,346.20 1754.46,346.20 1764.62,383.10 1774.79,383.10 1784.95,398.50 1795.12,398.50 1805.28,386.40 1815.44,386.40 1825.61,309.80 1835.77,309.80 1845.94,393.30 1856.10,393.30 1866.26,396.20 1876.43,396.20 1886.59,345.60 1896.76,345.60 1906.92,373.40 1917.08,373.40 1927.25,385.20 1937.41,385.20 1947.58,396.90 1957.74,396.90 1967.90,372.20 1978.07,372.20 1988.23,343.60 1998.40,343.60 2008.56,393.00 2018.72,393.00 2028.89,402.40 2039.05,402.40 2049.22,365.10 2059.38,365.10 2069.54,348.60 2079.71,348.60 2089.87,392.70 2100.04,392.70 2110.20,392.20 2120.36,392.20 2130.53,385.90 2140.69,385.90 2150.86,325.20 2161.02,325.20 2171.18,386.40 2181.35,386.40 2191.51,396.20 2201.68,396.20 2211.84,360.80 2222.00,360.80 2232.17,325.10 2242.33,325.10 2252.50,378.10 2262.66,378.10 2272.82,396.90 2282.99,396.90 2293.15,378.90 2303.32,378.90 2313.48,304.80 2323.64,304.80 2333.81,385.90 2343.97,385.90 2354.14,400.00 2364.30,400.00 2374.46,383.30 2384.63,383.30 2394.79,343.60 2404.96,343.60 2415.12,387.20 2425.28,387.20 2435.45,388.20 2445.61,388.20 2455.78,371.80 2465.94,371.80 2476.10,398.50 2476.10,401.40 2465.94,376.80 2455.78,376.80 2445.61,393.00 2435.45,393.00 2425.28,391.00 2415.12,391.00 2404.96,360.00 2394.79,360.00 2384.63,386.70 2374.46,386.70 2364.30,404.00 2354.14,404.00 2343.97,389.80 2333.81,389.80 2323.64,317.70 2313.48,317.70 2303.32,382.00 2293.15,382.00 2282.99,401.10 2272.82,401.10 2262.66,383.60 2252.50,383.60 2242.33,337.80 2232.17,337.80 2222.00,365.50 2211.84,365.50 2201.68,403.70 2191.51,403.70 2181.35,389.80 2171.18,389.80 2161.02,337.80 2150.86,337.80 2140.69,390.60 2130.53,390.60 2120.36,399.20 2110.20,399.20 2100.04,398.80 2089.87,398.80 2079.71,357.70 2069.54,357.70 2059.38,369.50 2049.22,369.50 2039.05,406.30 2028.89,406.30 2018.72,400.00 2008.56,400.00 1998.40,353.30 1988.23,353.30 1978.07,378.10 1967.90,378.10 1957.74,401.60 1947.58,401.60 1937.41,389.80 1927.25,389.80 1917.08,391.70 1906.92,391.70 1896.76,352.20 1886.59,352.20 1876.43,400.00 1866.26,400.00 1856.10,398.00 1845.94,398.00 1835.77,322.70 1825.61,322.70 1815.44,390.60 1805.28,390.60 1795.12,404.00 1784.95,404.00 1774.79,388.60 1764.62,388.60 1754.46,350.60 1744.30,350.60 1734.13,388.00 1723.97,388.00 1713.80,404.00 1703.64,404.00 1693.48,392.70 1683.31,392.70 1673.15,342.00 1662.98,342.00 1652.82,398.50 1642.66,398.50 1632.49,399.20 1622.33,399.20 1612.16,393.80 1602.00,393.80 1591.84,358.00 1581.67,358.00 1571.51,386.40 1561.34,386.40 1551.18,394.60 1541.02,394.60 1530.85,398.50 1520.69,398.50 1510.52,356.90 1500.36,356.90 1490.20,380.00 1480.03,380.00 1469.87,401.60 1459.70,401.60 1449.54,396.90 1439.38,396.90 1429.21,340.00 1419.05,340.00 1408.88,392.70 1398.72,392.70 1388.56,387.00 1378.39,387.00 1368.23,388.30 1358.06,388.30 1347.90,378.60 1337.74,378.60 1327.57,396.20 1317.41,396.20 1307.24,376.00 1297.08,376.00 1286.92,400.80 1276.75,400.80 1266.59,354.60 1256.42,354.60 1246.26,390.90 1236.10,390.90 1225.93,384.80 1215.77,384.80 1205.60,401.10 1195.44,401.10 1185.28,365.50 1175.11,365.50 1164.95,392.70 1154.78,392.70 1144.62,385.50 1134.46,385.50 1124.29,378.10 1114.13,378.10 1103.96,354.60 1093.80,354.60 1083.64,398.90 1073.47,398.90 1063.31,391.90 1053.14,391.90 1042.98,396.20 1032.82,396.20 1022.65,358.00 1012.49,358.00 1002.32,387.20 992.16,387.20 982.00,391.90 971.83,391.90 961.67,379.20 951.50,379.20 941.34,345.90 931.18,345.90 921.01,393.80 910.85,393.80 900.68,397.40 890.52,397.40 880.36,405.10 870.19,405.10 860.03,369.90 849.86,369.90 839.70,395.00 829.54,395.00 819.37,401.60 809.21,401.60 799.04,399.20 788.88,399.20 778.72,336.80 768.55,336.80 758.39,396.20 748.22,396.20 738.06,396.90 727.90,396.90 717.73,399.60 707.57,399.60 697.40,344.40 687.24,344.40 677.08,400.80 666.91,400.80 656.75,392.20 646.58,392.20 636.42,385.90 626.26,385.90 616.09,349.80 605.93,349.80 595.76,397.40 585.60,397.40 575.44,396.90 565.27,396.90 555.11,377.80 544.94,377.80 534.78,369.00 524.62,369.00 514.45,394.60 504.29,394.60 494.12,394.20 483.96,394.20 473.80,374.90 463.63,374.90 453.47,334.20 443.30,334.20 433.14,398.80 422.98,398.80 412.81,387.50 402.65,387.50 392.48,350.60 382.32,350.60 372.16,335.70 361.99,335.70 351.83,393.20 341.66,393.20 331.50,392.70 321.34,392.70 311.17,394.60 301.01,394.60 290.84,337.20 280.68,337.20 270.52,401.20 260.35,401.20 250.19,383.20 240.02,383.20 229.86,379.20 219.70,379.20 209.53,357.70 199.37,357.70 189.20,396.20 179.04,396.20 168.88,391.20 158.71,391.20 148.55,392.20 138.38,392.20 128.22,355.70 118.06,355.70 107.89,395.20 97.73,395.20 87.56,381.20 77.40,381.20 69.10,396.20" fill="#1f78c1" stroke="#1f78c1" stroke-width="0.5" stroke-linejoin="round"/><polyline points="69.10,426.20 77.40,419.20 87.56,419.20 97.73,427.20 107.89,427.20 118.06,428.20 128.22,428.20 138.38,427.50 148.55,427.50 158.71,427.20 168.88,427.20 179.04,428.20 189.20,428.20 199.37,426.40 209.53,426.40 219.70,427.20 229.86,427.20 240.02,418.20 250.19,418.20 260.35,428.70 270.52,428.70 280.68,429.80 290.84,429.80 301.01,427.70 311.17,427.70 321.34,422.80 331.50,422.80 341.66,427.20 351.83,427.20 361.99,429.20 372.16,429.20 382.32,428.20 392.48,428.20 402.65,414.20 412.81,414.20 422.98,428.20 433.14,428.20 443.30,429.20 453.47,429.20 463.63,428.00 473.80,428.00 483.96,423.20 494.12,423.20 504.29,427.50 514.45,427.50 524.62,429.20 534.78,429.20 544.94,427.50 555.11,427.50 565.27,426.20 575.44,426.20 585.60,426.70 595.76,426.70 605.93,429.40 616.09,429.40 626.26,427.50 636.42,427.50 646.58,429.40 656.75,429.40 666.91,428.20 677.08,428.20 687.24,429.20 697.40,429.20 707.57,428.20 717.73,428.20 727.90,429.10 738.06,429.10 748.22,422.50 758.39,422.50 768.55,429.80 778.72,429.80 788.88,426.70 799.04,426.70 809.21,429.40 819.37,429.40 829.54,423.60 839.70,423.60 849.86,429.80 860.03,429.80 870.19,426.70 880.36,426.70 890.52,429.40 900.68,429.40 910.85,426.70 921.01,426.70 931.18,427.50 941.34,427.50 951.50,426.70 961.67,426.70 971.83,429.40 982.00,429.40 992.16,416.80 1002.32,416.80 1012.49,427.50 1022.65,427.50 1032.82,427.00 1042.98,427.00 1053.14,429.80 1063.31,429.80 1073.47,424.70 1083.64,424.70 1093.80,429.40 1103.96,429.40 1114.13,426.20 1124.29,426.20 1134.46,429.10 1144.62,429.10 1154.78,423.60 1164.95,423.60 1175.11,429.80 1185.28,429.80 1195.44,428.30 1205.60,428.30 1215.77,428.70 1225.93,428.70 1236.10,422.00 1246.26,422.00 1256.42,425.60 1266.59,425.60 1276.75,427.50 1286.92,427.50 1297.08,429.40 1307.24,429.40 1317.41,423.30 1327.57,423.30 1337.74,429.80 1347.90,429.80 1358.06,428.70 1368.23,428.70 1378.39,429.40 1388.56,429.40 1398.72,420.10 1408.88,420.10 1419.05,428.00 1429.21,428.00 1439.38,427.00 1449.54,427.00 1459.70,429.80 1469.87,429.80 1480.03,417.00 1490.20,417.00 1500.36,429.10 1510.52,429.10 1520.69,428.00 1530.85,428.00 1541.02,429.40 1551.18,429.40 1561.34,419.20 1571.51,419.20 1581.67,428.00 1591.84,428.00 1602.00,427.50 1612.16,427.50 1622.33,429.40 1632.49,429.40 1642.66,424.40 1652.82,424.40 1662.98,429.10 1673.15,429.10 1683.31,426.70 1693.48,426.70 1703.64,429.40 1713.80,429.40 1723.97,418.90 1734.13,418.90 1744.30,429.40 1754.46,429.40 1764.62,428.30 1774.79,428.30 1784.95,429.40 1795.12,429.40 1805.28,426.20 1815.44,426.20 1825.61,428.30 1835.77,428.30 1845.94,428.30 1856.10,428.30 1866.26,428.30 1876.43,428.30 1886.59,426.20 1896.76,426.20 1906.92,429.40 1917.08,429.40 1927.25,428.30 1937.41,428.30 1947.58,429.40 1957.74,429.40 1967.90,426.70 1978.07,426.70 1988.23,426.70 1998.40,426.70 2008.56,426.20 2018.72,426.20 2028.89,429.40 2039.05,429.40 2049.22,426.70 2059.38,426.70 2069.54,426.40 2079.71,426.40 2089.87,428.30 2100.04,428.30 2110.20,428.30 2120.36,428.30 2130.53,428.30 2140.69,428.30 2150.86,429.80 2161.02,429.80 2171.18,428.30 2181.35,428.30 2191.51,429.40 2201.68,429.40 2211.84,428.30 2222.00,428.30 2232.17,429.80 2242.33,429.80 2252.50,427.50 2262.66,427.50 2272.82,427.80 2282.99,427.80 2293.15,425.20 2303.32,425.20 2313.48,420.90 2323.64,420.90 2333.81,427.20 2343.97,427.20 2354.14,428.30 2364.30,428.30 2374.46,427.80 2384.63,427.80 2394.79,427.80 2404.96,427.80 2415.12,427.20 2425.28,427.20 2435.45,425.30 2445.61,425.30 2455.78,427.20 2465.94,427.20 2476.10,428.90" fill="none" stroke="rgba(40,30,20,0.3)" stroke-width="0.7" stroke-linejoin="round"/><polyline points="69.10,413.20 77.40,403.70 87.56,403.70 97.73,412.20 107.89,412.20 118.06,418.60 128.22,418.60 138.38,415.70 148.55,415.70 158.71,409.50 168.88,409.50 179.04,413.20 189.20,413.20 199.37,405.50 209.53,405.50 219.70,415.20 229.86,415.20 240.02,405.50 250.19,405.50 260.35,415.20 270.52,415.20 280.68,411.50 290.84,411.50 301.01,415.70 311.17,415.70 321.34,410.20 331.50,410.20 341.66,417.20 351.83,417.20 361.99,401.60 372.16,401.60 382.32,410.20 392.48,410.20 402.65,403.20 412.81,403.20 422.98,414.90 433.14,414.90 443.30,406.80 453.47,406.80 463.63,413.40 473.80,413.40 483.96,410.20 494.12,410.20 504.29,414.50 514.45,414.50 524.62,403.70 534.78,403.70 544.94,416.50 555.11,416.50 565.27,415.20 575.44,415.20 585.60,414.50 595.76,414.50 605.93,405.50 616.09,405.50 626.26,414.50 636.42,414.50 646.58,419.30 656.75,419.30 666.91,417.80 677.08,417.80 687.24,406.80 697.40,406.80 707.57,415.70 717.73,415.70 727.90,417.30 738.06,417.30 748.22,411.00 758.39,411.00 768.55,407.20 778.72,407.20 788.88,415.70 799.04,415.70 809.21,416.80 819.37,416.80 829.54,413.20 839.70,413.20 849.86,414.90 860.03,414.90 870.19,416.80 880.36,416.80 890.52,421.20 900.68,421.20 910.85,414.20 921.01,414.20 931.18,405.50 941.34,405.50 951.50,415.70 961.67,415.70 971.83,418.90 982.00,418.90 992.16,403.50 1002.32,403.50 1012.49,397.70 1022.65,397.70 1032.82,415.70 1042.98,415.70 1053.14,421.20 1063.31,421.20 1073.47,414.60 1083.64,414.60 1093.80,400.00 1103.96,400.00 1114.13,414.60 1124.29,414.60 1134.46,419.30 1144.62,419.30 1154.78,411.50 1164.95,411.50 1175.11,403.70 1185.28,403.70 1195.44,418.60 1205.60,418.60 1215.77,415.70 1225.93,415.70 1236.10,410.20 1246.26,410.20 1256.42,411.00 1266.59,411.00 1276.75,416.50 1286.92,416.50 1297.08,415.70 1307.24,415.70 1317.41,411.00 1327.57,411.00 1337.74,414.60 1347.90,414.60 1358.06,418.40 1368.23,418.40 1378.39,414.60 1388.56,414.60 1398.72,408.70 1408.88,408.70 1419.05,401.90 1429.21,401.90 1439.38,415.70 1449.54,415.70 1459.70,418.60 1469.87,418.60 1480.03,406.80 1490.20,406.80 1500.36,421.20 1510.52,421.20 1520.69,414.60 1530.85,414.60 1541.02,419.30 1551.18,419.30 1561.34,404.70 1571.51,404.70 1581.67,409.90 1591.84,409.90 1602.00,411.80 1612.16,411.80 1622.33,415.20 1632.49,415.20 1642.66,413.10 1652.82,413.10 1662.98,407.90 1673.15,407.90 1683.31,412.60 1693.48,412.60 1703.64,420.70 1713.80,420.70 1723.97,405.50 1734.13,405.50 1744.30,415.20 1754.46,415.20 1764.62,409.90 1774.79,409.90 1784.95,419.70 1795.12,419.70 1805.28,412.60 1815.44,412.60 1825.61,401.10 1835.77,401.10 1845.94,415.70 1856.10,415.70 1866.26,419.30 1876.43,419.30 1886.59,404.40 1896.76,404.40 1906.92,411.00 1917.08,411.00 1927.25,414.60 1937.41,414.60 1947.58,418.60 1957.74,418.60 1967.90,415.70 1978.07,415.70 1988.23,409.90 1998.40,409.90 2008.56,416.50 2018.72,416.50 2028.89,419.70 2039.05,419.70 2049.22,414.50 2059.38,414.50 2069.54,405.10 2079.71,405.10 2089.87,418.90 2100.04,418.90 2110.20,416.50 2120.36,416.50 2130.53,414.50 2140.69,414.50 2150.86,406.80 2161.02,406.80 2171.18,408.40 2181.35,408.40 2191.51,417.30 2201.68,417.30 2211.84,412.90 2222.00,412.90 2232.17,409.50 2242.33,409.50 2252.50,404.70 2262.66,404.70 2272.82,418.90 2282.99,418.90 2293.15,414.50 2303.32,414.50 2313.48,382.80 2323.64,382.80 2333.81,415.20 2343.97,415.20 2354.14,418.60 2364.30,418.60 2374.46,416.50 2384.63,416.50 2394.79,413.40 2404.96,413.40 2415.12,414.10 2425.28,414.10 2435.45,414.40 2445.61,414.40 2455.78,415.90 2465.94,415.90 2476.10,418.50" fill="none" stroke="rgba(40,30,20,0.3)" stroke-width="0.7" stroke-linejoin="round"/><polyline points="69.10,410.20 77.40,399.20 87.56,399.20 97.73,410.20 107.89,410.20 118.06,417.20 128.22,417.20 138.38,405.50 148.55,405.50 158.71,405.20 168.88,405.20 179.04,411.20 189.20,411.20 199.37,401.60 209.53,401.60 219.70,391.20 229.86,391.20 240.02,403.20 250.19,403.20 260.35,414.20 270.52,414.20 280.68,410.20 290.84,410.20 301.01,408.20 311.17,408.20 321.34,408.20 331.50,408.20 341.66,415.20 351.83,415.20 361.99,397.20 372.16,397.20 382.32,365.50 392.48,365.50 402.65,401.20 412.81,401.20 422.98,413.40 433.14,413.40 443.30,405.50 453.47,405.50 463.63,391.20 473.80,391.20 483.96,407.90 494.12,407.90 504.29,409.50 514.45,409.50 524.62,401.20 534.78,401.20 544.94,396.40 555.11,396.40 565.27,414.50 575.44,414.50 585.60,412.60 595.76,412.60 605.93,404.00 616.09,404.00 626.26,400.80 636.42,400.80 646.58,406.30 656.75,406.30 666.91,415.70 677.08,415.70 687.24,404.40 697.40,404.40 707.57,414.90 717.73,414.90 727.90,410.20 738.06,410.20 748.22,410.20 758.39,410.20 768.55,405.20 778.72,405.20 788.88,412.20 799.04,412.20 809.21,416.20 819.37,416.20 829.54,410.60 839.70,410.60 849.86,413.40 860.03,413.40 870.19,416.20 880.36,416.20 890.52,412.20 900.68,412.20 910.85,412.60 921.01,412.60 931.18,405.10 941.34,405.10 951.50,414.60 961.67,414.60 971.83,404.70 982.00,404.70 992.16,402.70 1002.32,402.70 1012.49,395.30 1022.65,395.30 1032.82,413.70 1042.98,413.70 1053.14,405.80 1063.31,405.80 1073.47,413.40 1083.64,413.40 1093.80,398.00 1103.96,398.00 1114.13,409.00 1124.29,409.00 1134.46,397.70 1144.62,397.70 1154.78,409.00 1164.95,409.00 1175.11,402.10 1185.28,402.10 1195.44,416.80 1205.60,416.80 1215.77,398.00 1225.93,398.00 1236.10,408.20 1246.26,408.20 1256.42,406.30 1266.59,406.30 1276.75,415.20 1286.92,415.20 1297.08,390.20 1307.24,390.20 1317.41,409.00 1327.57,409.00 1337.74,412.60 1347.90,412.60 1358.06,417.80 1368.23,417.80 1378.39,402.90 1388.56,402.90 1398.72,407.90 1408.88,407.90 1419.05,396.90 1429.21,396.90 1439.38,414.20 1449.54,414.20 1459.70,417.30 1469.87,417.30 1480.03,395.70 1490.20,395.70 1500.36,419.30 1510.52,419.30 1520.69,413.10 1530.85,413.10 1541.02,409.50 1551.18,409.50 1561.34,402.10 1571.51,402.10 1581.67,405.80 1591.84,405.80 1602.00,409.50 1612.16,409.50 1622.33,414.20 1632.49,414.20 1642.66,411.80 1652.82,411.80 1662.98,405.80 1673.15,405.80 1683.31,407.90 1693.48,407.90 1703.64,418.90 1713.80,418.90 1723.97,400.80 1734.13,400.80 1744.30,413.70 1754.46,413.70 1764.62,406.30 1774.79,406.30 1784.95,418.60 1795.12,418.60 1805.28,405.20 1815.44,405.20 1825.61,399.60 1835.77,399.60 1845.94,413.40 1856.10,413.40 1866.26,416.80 1876.43,416.80 1886.59,368.70 1896.76,368.70 1906.92,409.00 1917.08,409.00 1927.25,413.10 1937.41,413.10 1947.58,416.20 1957.74,416.20 1967.90,393.80 1978.07,393.80 1988.23,407.10 1998.40,407.10 2008.56,414.60 2018.72,414.60 2028.89,418.10 2039.05,418.10 2049.22,383.90 2059.38,383.90 2069.54,402.90 2079.71,402.90 2089.87,416.50 2100.04,416.50 2110.20,414.90 2120.36,414.90 2130.53,404.70 2140.69,404.70 2150.86,404.00 2161.02,404.00 2171.18,406.80 2181.35,406.80 2191.51,416.50 2201.68,416.50 2211.84,381.70 2222.00,381.70 2232.17,407.90 2242.33,407.90 2252.50,402.90 2262.66,402.90 2272.82,415.70 2282.99,415.70 2293.15,396.90 2303.32,396.90 2313.48,381.20 2323.64,381.20 2333.81,413.10 2343.97,413.10 2354.14,417.00 2364.30,417.00 2374.46,402.10 2384.63,402.10 2394.79,412.10 2404.96,412.10 2415.12,411.20 2425.28,411.20 2435.45,408.40 2445.61,408.40 2455.78,390.60 2465.94,390.60 2476.10,407.20" fill="none" stroke="rgba(40,30,20,0.3)" stroke-width="0.7" stroke-linejoin="round"/><polyline points="69.10,401.20 77.40,390.20 87.56,390.20 97.73,400.20 107.89,400.20 118.06,363.20 128.22,363.20 138.38,397.20 148.55,397.20 158.71,395.20 168.88,395.20 179.04,401.20 189.20,401.20 199.37,363.70 209.53,363.70 219.70,383.20 229.86,383.20 240.02,387.50 250.19,387.50 260.35,405.50 270.52,405.50 280.68,343.20 290.84,343.20 301.01,399.60 311.17,399.60 321.34,397.20 331.50,397.20 341.66,405.50 351.83,405.50 361.99,347.80 372.16,347.80 382.32,354.60 392.48,354.60 402.65,391.40 412.81,391.40 422.98,404.20 433.14,404.20 443.30,337.80 453.47,337.80 463.63,380.00 473.80,380.00 483.96,398.80 494.12,398.80 504.29,399.60 514.45,399.60 524.62,372.90 534.78,372.90 544.94,382.80 555.11,382.80 565.27,404.00 575.44,404.00 585.60,401.60 595.76,401.60 605.93,355.70 616.09,355.70 626.26,390.60 636.42,390.60 646.58,396.90 656.75,396.90 666.91,405.50 677.08,405.50 687.24,354.60 697.40,354.60 707.57,403.70 717.73,403.70 727.90,401.60 738.06,401.60 748.22,400.80 758.39,400.80 768.55,343.60 778.72,343.60 788.88,404.00 799.04,404.00 809.21,406.80 819.37,406.80 829.54,400.00 839.70,400.00 849.86,382.80 860.03,382.80 870.19,408.70 880.36,408.70 890.52,403.20 900.68,403.20 910.85,398.00 921.01,398.00 931.18,355.00 941.34,355.00 951.50,383.60 961.67,383.60 971.83,395.80 982.00,395.80 992.16,390.60 1002.32,390.60 1012.49,365.80 1022.65,365.80 1032.82,400.50 1042.98,400.50 1053.14,395.80 1063.31,395.80 1073.47,403.70 1083.64,403.70 1093.80,361.60 1103.96,361.60 1114.13,384.40 1124.29,384.40 1134.46,389.80 1144.62,389.80 1154.78,396.90 1164.95,396.90 1175.11,371.80 1185.28,371.80 1195.44,405.50 1205.60,405.50 1215.77,388.70 1225.93,388.70 1236.10,395.80 1246.26,395.80 1256.42,369.00 1266.59,369.00 1276.75,405.50 1286.92,405.50 1297.08,379.70 1307.24,379.70 1317.41,399.60 1327.57,399.60 1337.74,383.60 1347.90,383.60 1358.06,392.70 1368.23,392.70 1378.39,391.70 1388.56,391.70 1398.72,396.90 1408.88,396.90 1419.05,352.50 1429.21,352.50 1439.38,401.60 1449.54,401.60 1459.70,405.50 1469.87,405.50 1480.03,384.80 1490.20,384.80 1500.36,363.50 1510.52,363.50 1520.69,402.90 1530.85,402.90 1541.02,398.90 1551.18,398.90 1561.34,391.10 1571.51,391.10 1581.67,371.80 1591.84,371.80 1602.00,398.50 1612.16,398.50 1622.33,402.90 1632.49,402.90 1642.66,402.40 1652.82,402.40 1662.98,347.50 1673.15,347.50 1683.31,396.90 1693.48,396.90 1703.64,408.40 1713.80,408.40 1723.97,392.20 1734.13,392.20 1744.30,356.60 1754.46,356.60 1764.62,393.80 1774.79,393.80 1784.95,407.90 1795.12,407.90 1805.28,394.90 1815.44,394.90 1825.61,328.70 1835.77,328.70 1845.94,404.70 1856.10,404.70 1866.26,407.10 1876.43,407.10 1886.59,356.90 1896.76,356.90 1906.92,396.20 1917.08,396.20 1927.25,393.80 1937.41,393.80 1947.58,405.50 1957.74,405.50 1967.90,382.00 1978.07,382.00 1988.23,357.40 1998.40,357.40 2008.56,406.80 2018.72,406.80 2028.89,409.90 2039.05,409.90 2049.22,373.70 2059.38,373.70 2069.54,361.60 2079.71,361.60 2089.87,405.50 2100.04,405.50 2110.20,402.70 2120.36,402.70 2130.53,394.90 2140.69,394.90 2150.86,344.40 2161.02,344.40 2171.18,397.70 2181.35,397.70 2191.51,407.90 2201.68,407.90 2211.84,369.80 2222.00,369.80 2232.17,341.70 2242.33,341.70 2252.50,390.60 2262.66,390.60 2272.82,405.50 2282.99,405.50 2293.15,387.50 2303.32,387.50 2313.48,321.60 2323.64,321.60 2333.81,400.80 2343.97,400.80 2354.14,407.90 2364.30,407.90 2374.46,390.60 2384.63,390.60 2394.79,363.70 2404.96,363.70 2415.12,401.40 2425.28,401.40 2435.45,400.70 2445.61,400.70 2455.78,380.90 2465.94,380.90 2476.10,404.30" fill="none" stroke="rgba(40,30,20,0.3)" stroke-width="0.7" stroke-linejoin="round"/><polyline points="69.10,396.20 77.40,381.20 87.56,381.20 97.73,395.20 107.89,395.20 118.06,355.70 128.22,355.70 138.38,392.20 148.55,392.20 158.71,391.20 168.88,391.20 179.04,396.20 189.20,396.20 199.37,357.70 209.53,357.70 219.70,379.20 229.86,379.20 240.02,383.20 250.19,383.20 260.35,401.20 270.52,401.20 280.68,337.20 290.84,337.20 301.01,394.60 311.17,394.60 321.34,392.70 331.50,392.70 341.66,393.20 351.83,393.20 361.99,335.70 372.16,335.70 382.32,350.60 392.48,350.60 402.65,387.50 412.81,387.50 422.98,398.80 433.14,398.80 443.30,334.20 453.47,334.20 463.63,374.90 473.80,374.90 483.96,394.20 494.12,394.20 504.29,394.60 514.45,394.60 524.62,369.00 534.78,369.00 544.94,377.80 555.11,377.80 565.27,396.90 575.44,396.90 585.60,397.40 595.76,397.40 605.93,349.80 616.09,349.80 626.26,385.90 636.42,385.90 646.58,392.20 656.75,392.20 666.91,400.80 677.08,400.80 687.24,344.40 697.40,344.40 707.57,399.60 717.73,399.60 727.90,396.90 738.06,396.90 748.22,396.20 758.39,396.20 768.55,336.80 778.72,336.80 788.88,399.20 799.04,399.20 809.21,401.60 819.37,401.60 829.54,395.00 839.70,395.00 849.86,369.90 860.03,369.90 870.19,405.10 880.36,405.10 890.52,397.40 900.68,397.40 910.85,393.80 921.01,393.80 931.18,345.90 941.34,345.90 951.50,379.20 961.67,379.20 971.83,391.90 982.00,391.90 992.16,387.20 1002.32,387.20 1012.49,358.00 1022.65,358.00 1032.82,396.20 1042.98,396.20 1053.14,391.90 1063.31,391.90 1073.47,398.90 1083.64,398.90 1093.80,354.60 1103.96,354.60 1114.13,378.10 1124.29,378.10 1134.46,385.50 1144.62,385.50 1154.78,392.70 1164.95,392.70 1175.11,365.50 1185.28,365.50 1195.44,401.10 1205.60,401.10 1215.77,384.80 1225.93,384.80 1236.10,390.90 1246.26,390.90 1256.42,354.60 1266.59,354.60 1276.75,400.80 1286.92,400.80 1297.08,376.00 1307.24,376.00 1317.41,396.20 1327.57,396.20 1337.74,378.60 1347.90,378.60 1358.06,388.30 1368.23,388.30 1378.39,387.00 1388.56,387.00 1398.72,392.70 1408.88,392.70 1419.05,340.00 1429.21,340.00 1439.38,396.90 1449.54,396.90 1459.70,401.60 1469.87,401.60 1480.03,380.00 1490.20,380.00 1500.36,356.90 1510.52,356.90 1520.69,398.50 1530.85,398.50 1541.02,394.60 1551.18,394.60 1561.34,386.40 1571.51,386.40 1581.67,358.00 1591.84,358.00 1602.00,393.80 1612.16,393.80 1622.33,399.20 1632.49,399.20 1642.66,398.50 1652.82,398.50 1662.98,342.00 1673.15,342.00 1683.31,392.70 1693.48,392.70 1703.64,404.00 1713.80,404.00 1723.97,388.00 1734.13,388.00 1744.30,350.60 1754.46,350.60 1764.62,388.60 1774.79,388.60 1784.95,404.00 1795.12,404.00 1805.28,390.60 1815.44,390.60 1825.61,322.70 1835.77,322.70 1845.94,398.00 1856.10,398.00 1866.26,400.00 1876.43,400.00 1886.59,352.20 1896.76,352.20 1906.92,391.70 1917.08,391.70 1927.25,389.80 1937.41,389.80 1947.58,401.60 1957.74,401.60 1967.90,378.10 1978.07,378.10 1988.23,353.30 1998.40,353.30 2008.56,400.00 2018.72,400.00 2028.89,406.30 2039.05,406.30 2049.22,369.50 2059.38,369.50 2069.54,357.70 2079.71,357.70 2089.87,398.80 2100.04,398.80 2110.20,399.20 2120.36,399.20 2130.53,390.60 2140.69,390.60 2150.86,337.80 2161.02,337.80 2171.18,389.80 2181.35,389.80 2191.51,403.70 2201.68,403.70 2211.84,365.50 2222.00,365.50 2232.17,337.80 2242.33,337.80 2252.50,383.60 2262.66,383.60 2272.82,401.10 2282.99,401.10 2293.15,382.00 2303.32,382.00 2313.48,317.70 2323.64,317.70 2333.81,389.80 2343.97,389.80 2354.14,404.00 2364.30,404.00 2374.46,386.70 2384.63,386.70 2394.79,360.00 2404.96,360.00 2415.12,391.00 2425.28,391.00 2435.45,393.00 2445.61,393.00 2455.78,376.80 2465.94,376.80 2476.10,401.40" fill="none" stroke="rgba(40,30,20,0.3)" stroke-width="0.7" stroke-linejoin="round"/></g></svg><div class="a" style="left:24.9px;top:471.8px;width:14px;height:4px;border-radius:2px;background:#7eb26d"></div><div class="a" style="left:322px;top:471.8px;width:14px;height:4px;border-radius:2px;background:#eab839"></div><div class="a" style="left:620px;top:471.8px;width:14px;height:4px;border-radius:2px;background:#6ed0e0"></div><div class="a" style="left:977.9px;top:471.8px;width:14px;height:4px;border-radius:2px;background:#ef843c"></div><div class="a" style="left:1339px;top:471.8px;width:14px;height:4px;border-radius:2px;background:#e24d42"></div><div class="a" style="left:1692.5px;top:471.8px;width:14px;height:4px;border-radius:2px;background:#1f78c1"></div><div class="a" style="left:6px;top:538px;width:2528px;height:258px;background:#181b1f;box-shadow:inset 0 0 0 1px #2a2c31;border-radius:2px;"></div><div class="a" style="left:7px;top:571px;width:2526px;height:2px;background:#111217"></div><div class="a" style="left:7px;top:573px;width:2526px;height:24px;background:#22252b"></div><div class="a" style="left:7px;top:636px;width:2518px;height:2px;background:#111217"></div><div class="a" style="left:7px;top:673px;width:2518px;height:2px;background:#111217"></div><div class="a" style="left:7px;top:710px;width:2518px;height:2px;background:#111217"></div><div class="a" style="left:7px;top:746px;width:2518px;height:2px;background:#111217"></div><div class="a" style="left:7px;top:783px;width:2518px;height:2px;background:#111217"></div><div class="a" style="left:1300px;top:602px;width:2px;height:192px;background:#111217"></div><div class="a" style="left:1786px;top:602px;width:2px;height:192px;background:#111217"></div><div class="a" style="left:2134px;top:602px;width:2px;height:192px;background:#111217"></div><div class="a" style="left:22.6px;top:627.1px;width:354.4px;height:1px;background:#d2d2de"></div><div class="a" style="left:22.6px;top:663.7px;width:362.3px;height:1px;background:#d2d2de"></div><div class="a" style="left:22.6px;top:700.2px;width:369.2px;height:1px;background:#d2d2de"></div><div class="a" style="left:22.6px;top:736.7px;width:366.3px;height:1px;background:#d2d2de"></div><div class="a" style="left:22.6px;top:772.9000000000001px;width:295.4px;height:1px;background:#d2d2de"></div><div class="a" style="left:2525px;top:602px;width:7px;height:169px;background:#4a4c54;box-shadow:inset 0 0 0 1px #0d0e12;border-radius:1px"></div><div class="a" style="left:6px;top:842px;width:2528px;height:258px;background:#181b1f;box-shadow:inset 0 0 0 1px #2a2c31;border-radius:2px;"></div><svg class="a" style="left:220px;top:851px" width="16" height="16"><circle cx="8" cy="8" r="6.2" fill="none" stroke="#9c9ca8" stroke-width="1.3"/><rect x="7.35" y="8.1" width="1.3" height="2.8" fill="#9c9ca8"/><rect x="7.35" y="5.0" width="1.3" height="1.3" fill="#9c9ca8"/></svg><svg class="a" style="left:0;top:0" width="2550" height="1107"><defs><clipPath id="cp893"><rect x="71" y="891.4" width="2436" height="150.0000000000001"/></clipPath></defs><line x1="71" y1="893.50" x2="2508" y2="893.50" stroke="#3d3e44" stroke-width="1"/><line x1="71" y1="917.50" x2="2508" y2="917.50" stroke="#3d3e44" stroke-width="1"/><line x1="71" y1="942.50" x2="2508" y2="942.50" stroke="#3d3e44" stroke-width="1"/><line x1="71" y1="966.50" x2="2508" y2="966.50" stroke="#3d3e44" stroke-width="1"/><line x1="71" y1="991.50" x2="2508" y2="991.50" stroke="#3d3e44" stroke-width="1"/><line x1="71" y1="1015.50" x2="2508" y2="1015.50" stroke="#3d3e44" stroke-width="1"/><line x1="71" y1="1040.50" x2="2508" y2="1040.50" stroke="#3d3e44" stroke-width="1"/><line x1="140.50" y1="893" x2="140.50" y2="1041" stroke="#3d3e44" stroke-width="1"/><line x1="221.50" y1="893" x2="221.50" y2="1041" stroke="#3d3e44" stroke-width="1"/><line x1="303.50" y1="893" x2="303.50" y2="1041" stroke="#3d3e44" stroke-width="1"/><line x1="384.50" y1="893" x2="384.50" y2="1041" stroke="#3d3e44" stroke-width="1"/><line x1="465.50" y1="893" x2="465.50" y2="1041" stroke="#3d3e44" stroke-width="1"/><line x1="546.50" y1="893" x2="546.50" y2="1041" stroke="#3d3e44" stroke-width="1"/><line x1="628.50" y1="893" x2="628.50" y2="1041" stroke="#3d3e44" stroke-width="1"/><line x1="709.50" y1="893" x2="709.50" y2="1041" stroke="#3d3e44" stroke-width="1"/><line x1="790.50" y1="893" x2="790.50" y2="1041" stroke="#3d3e44" stroke-width="1"/><line x1="871.50" y1="893" x2="871.50" y2="1041" stroke="#3d3e44" stroke-width="1"/><line x1="953.50" y1="893" x2="953.50" y2="1041" stroke="#3d3e44" stroke-width="1"/><line x1="1034.50" y1="893" x2="1034.50" y2="1041" stroke="#3d3e44" stroke-width="1"/><line x1="1115.50" y1="893" x2="1115.50" y2="1041" stroke="#3d3e44" stroke-width="1"/><line x1="1196.50" y1="893" x2="1196.50" y2="1041" stroke="#3d3e44" stroke-width="1"/><line x1="1278.50" y1="893" x2="1278.50" y2="1041" stroke="#3d3e44" stroke-width="1"/><line x1="1359.50" y1="893" x2="1359.50" y2="1041" stroke="#3d3e44" stroke-width="1"/><line x1="1440.50" y1="893" x2="1440.50" y2="1041" stroke="#3d3e44" stroke-width="1"/><line x1="1521.50" y1="893" x2="1521.50" y2="1041" stroke="#3d3e44" stroke-width="1"/><line x1="1603.50" y1="893" x2="1603.50" y2="1041" stroke="#3d3e44" stroke-width="1"/><line x1="1684.50" y1="893" x2="1684.50" y2="1041" stroke="#3d3e44" stroke-width="1"/><line x1="1765.50" y1="893" x2="1765.50" y2="1041" stroke="#3d3e44" stroke-width="1"/><line x1="1846.50" y1="893" x2="1846.50" y2="1041" stroke="#3d3e44" stroke-width="1"/><line x1="1927.50" y1="893" x2="1927.50" y2="1041" stroke="#3d3e44" stroke-width="1"/><line x1="2009.50" y1="893" x2="2009.50" y2="1041" stroke="#3d3e44" stroke-width="1"/><line x1="2090.50" y1="893" x2="2090.50" y2="1041" stroke="#3d3e44" stroke-width="1"/><line x1="2171.50" y1="893" x2="2171.50" y2="1041" stroke="#3d3e44" stroke-width="1"/><line x1="2252.50" y1="893" x2="2252.50" y2="1041" stroke="#3d3e44" stroke-width="1"/><line x1="2334.50" y1="893" x2="2334.50" y2="1041" stroke="#3d3e44" stroke-width="1"/><line x1="2415.50" y1="893" x2="2415.50" y2="1041" stroke="#3d3e44" stroke-width="1"/><line x1="2496.50" y1="893" x2="2496.50" y2="1041" stroke="#3d3e44" stroke-width="1"/><g clip-path="url(#cp893)"><polygon points="69.42,1026.70 79.57,1026.70 89.72,1026.70 99.88,1026.70 110.03,1026.70 120.19,1026.70 130.34,1026.70 140.50,1026.70 150.66,1026.70 160.81,1026.70 170.97,1026.70 181.12,1026.70 191.28,1026.70 201.43,1026.70 211.58,1026.70 221.74,1026.70 231.89,1026.70 242.05,1026.70 252.20,1026.70 262.36,1026.70 272.51,1026.70 282.67,1026.70 292.82,1026.70 302.98,1026.70 313.13,1026.70 323.29,1026.70 333.44,1040.40 343.60,1026.70 353.75,1026.70 363.91,1026.70 374.06,1026.70 384.22,1026.70 394.38,1026.70 404.53,1026.70 414.69,1026.70 424.84,1026.70 435.00,1026.70 445.15,1026.70 455.31,1026.70 465.46,1026.70 475.61,1026.70 485.77,1026.70 495.92,1026.70 506.08,1026.70 516.23,1040.40 526.39,1026.70 536.54,1040.40 546.70,1026.70 556.86,1026.70 567.01,1026.70 577.16,1026.70 587.32,1026.70 597.47,1026.70 607.63,1026.70 617.78,1026.70 627.94,1026.70 638.10,1026.70 648.25,1026.70 658.40,1026.70 668.56,1026.70 678.71,1026.70 688.87,1026.70 699.02,1026.70 709.18,1026.70 719.33,1026.70 729.49,1026.70 739.64,1026.70 749.80,1026.70 759.95,1026.70 770.11,1026.70 780.26,1026.70 790.42,1026.70 800.57,1026.70 810.73,1026.70 820.88,1026.70 831.04,1026.70 841.19,1026.70 851.35,1026.70 861.50,1026.70 871.66,1026.70 881.81,1026.70 891.97,1026.70 902.12,1026.70 912.28,1026.70 922.43,1040.40 932.59,1026.70 942.75,1026.70 952.90,1026.70 963.05,1026.70 973.21,1026.70 983.36,1026.70 993.52,1026.70 1003.67,1026.70 1013.83,1026.70 1023.98,1026.70 1034.14,1026.70 1044.30,1026.70 1054.45,1026.70 1064.61,1026.70 1074.76,1026.70 1084.91,1026.70 1095.07,1026.70 1105.22,1026.70 1115.38,1026.70 1125.53,1026.70 1135.69,1026.70 1145.84,1040.40 1156.00,1026.70 1166.15,1026.70 1176.31,1026.70 1186.46,1026.70 1196.62,1026.70 1206.77,1026.70 1216.93,1026.70 1227.09,1026.70 1237.24,1026.70 1247.39,1026.70 1257.55,1026.70 1267.70,1026.70 1277.86,1026.70 1288.01,1040.40 1298.17,1026.70 1308.32,1026.70 1318.48,1026.70 1328.63,1026.70 1338.79,1026.70 1348.94,1026.70 1359.10,1026.70 1369.25,1026.70 1379.41,1026.70 1389.56,1026.70 1399.72,1026.70 1409.88,1026.70 1420.03,1026.70 1430.18,1026.70 1440.34,1026.70 1450.49,1026.70 1460.65,1026.70 1470.80,1026.70 1480.96,1026.70 1491.12,1026.70 1501.27,1026.70 1511.42,1026.70 1521.58,1026.70 1531.73,1026.70 1541.89,1026.70 1552.04,1026.70 1562.20,1026.70 1572.36,1026.70 1582.51,1026.70 1592.66,1026.70 1602.82,1026.70 1612.97,1026.70 1623.13,1026.70 1633.28,1026.70 1643.44,1026.70 1653.59,1040.40 1663.75,1026.70 1673.90,1026.70 1684.06,1026.70 1694.21,1026.70 1704.37,1026.70 1714.52,1026.70 1724.68,1026.70 1734.83,1026.70 1744.99,1026.70 1755.14,1026.70 1765.30,1026.70 1775.45,1040.40 1785.61,1026.70 1795.76,1026.70 1805.92,1026.70 1816.07,1026.70 1826.23,1026.70 1836.38,1026.70 1846.54,1026.70 1856.69,1040.40 1866.85,1026.70 1877.00,1026.70 1887.16,1026.70 1897.31,1026.70 1907.47,1026.70 1917.62,1026.70 1927.78,1026.70 1937.93,1026.70 1948.09,1026.70 1958.24,1026.70 1968.40,1026.70 1978.55,1026.70 1988.71,1026.70 1998.86,1026.70 2009.02,1026.70 2019.17,1026.70 2029.33,1026.70 2039.48,1040.40 2049.64,1026.70 2059.80,1026.70 2069.95,1026.70 2080.10,1026.70 2090.26,1026.70 2100.41,1026.70 2110.57,1026.70 2120.72,1040.40 2130.88,1026.70 2141.03,1026.70 2151.19,1026.70 2161.34,1026.70 2171.50,1026.70 2181.65,1026.70 2191.81,1026.70 2201.96,1026.70 2212.12,1026.70 2222.28,1026.70 2232.43,1026.70 2242.59,1026.70 2252.74,1026.70 2262.89,1040.40 2273.05,1026.70 2283.20,1040.40 2293.36,1026.70 2303.51,1026.70 2313.67,1026.70 2323.82,1026.70 2333.98,1026.70 2344.13,1026.70 2354.29,1026.70 2364.44,1026.70 2374.60,1026.70 2384.75,1040.40 2394.91,1026.70 2405.07,1026.70 2415.22,1026.70 2425.38,1026.70 2435.53,1026.70 2445.68,1026.70 2455.84,1026.70 2465.99,1026.70 2476.15,1026.70 2476.15,1040.4 69.42,1040.4" fill="#7eb26d" stroke="#7eb26d" stroke-width="0.5" stroke-linejoin="round"/><polygon points="69.42,1011.00 79.57,1011.00 89.72,1011.00 99.88,1011.00 110.03,1011.00 120.19,1011.00 130.34,1011.00 140.50,1011.00 150.66,1011.00 160.81,1011.00 170.97,1011.00 181.12,1011.00 191.28,1011.00 201.43,1011.00 211.58,1011.00 221.74,1011.00 231.89,1011.00 242.05,1026.70 252.20,1011.00 262.36,1011.00 272.51,1011.00 282.67,1011.00 292.82,1011.00 302.98,1011.00 313.13,1011.00 323.29,1011.00 333.44,1024.70 343.60,1011.00 353.75,1011.00 363.91,1011.00 374.06,1011.00 384.22,1011.00 394.38,1011.00 404.53,1011.00 414.69,1011.00 424.84,1011.00 435.00,1011.00 445.15,1011.00 455.31,1011.00 465.46,1011.00 475.61,1011.00 485.77,1011.00 495.92,1011.00 506.08,1011.00 516.23,1024.70 526.39,1011.00 536.54,1024.70 546.70,1011.00 556.86,1011.00 567.01,1011.00 577.16,1011.00 587.32,1011.00 597.47,1011.00 607.63,1011.00 617.78,1011.00 627.94,1011.00 638.10,1011.00 648.25,1011.00 658.40,1011.00 668.56,1011.00 678.71,1011.00 688.87,1011.00 699.02,1011.00 709.18,1011.00 719.33,1011.00 729.49,1011.00 739.64,1011.00 749.80,1011.00 759.95,1011.00 770.11,1011.00 780.26,1011.00 790.42,1011.00 800.57,1011.00 810.73,1011.00 820.88,1011.00 831.04,1026.70 841.19,1011.00 851.35,1011.00 861.50,1011.00 871.66,1026.70 881.81,1011.00 891.97,1011.00 902.12,1011.00 912.28,1011.00 922.43,1024.70 932.59,1011.00 942.75,1011.00 952.90,1011.00 963.05,1011.00 973.21,1011.00 983.36,1011.00 993.52,1011.00 1003.67,1011.00 1013.83,1011.00 1023.98,1011.00 1034.14,1011.00 1044.30,1011.00 1054.45,1011.00 1064.61,1011.00 1074.76,1011.00 1084.91,1011.00 1095.07,1011.00 1105.22,1011.00 1115.38,1011.00 1125.53,1011.00 1135.69,1011.00 1145.84,1024.70 1156.00,1011.00 1166.15,1011.00 1176.31,1011.00 1186.46,1011.00 1196.62,1011.00 1206.77,1011.00 1216.93,1011.00 1227.09,1011.00 1237.24,1011.00 1247.39,1011.00 1257.55,1011.00 1267.70,1011.00 1277.86,1011.00 1288.01,1024.70 1298.17,1011.00 1308.32,1011.00 1318.48,1011.00 1328.63,1011.00 1338.79,1011.00 1348.94,1011.00 1359.10,1026.70 1369.25,1011.00 1379.41,1011.00 1389.56,1011.00 1399.72,1011.00 1409.88,1011.00 1420.03,1011.00 1430.18,1011.00 1440.34,1011.00 1450.49,1011.00 1460.65,1011.00 1470.80,1011.00 1480.96,1011.00 1491.12,1011.00 1501.27,1011.00 1511.42,1011.00 1521.58,1011.00 1531.73,1011.00 1541.89,1011.00 1552.04,1011.00 1562.20,1011.00 1572.36,1011.00 1582.51,1011.00 1592.66,1011.00 1602.82,1011.00 1612.97,1011.00 1623.13,1011.00 1633.28,1011.00 1643.44,1011.00 1653.59,1024.70 1663.75,1011.00 1673.90,1011.00 1684.06,1026.70 1694.21,1011.00 1704.37,1011.00 1714.52,1011.00 1724.68,1011.00 1734.83,1011.00 1744.99,1011.00 1755.14,1011.00 1765.30,1011.00 1775.45,1024.70 1785.61,1011.00 1795.76,1011.00 1805.92,1011.00 1816.07,1011.00 1826.23,1011.00 1836.38,1011.00 1846.54,1011.00 1856.69,1024.70 1866.85,1011.00 1877.00,1011.00 1887.16,1011.00 1897.31,1011.00 1907.47,1011.00 1917.62,1011.00 1927.78,1011.00 1937.93,1011.00 1948.09,1026.70 1958.24,1011.00 1968.40,1026.70 1978.55,1011.00 1988.71,1011.00 1998.86,1011.00 2009.02,1011.00 2019.17,1011.00 2029.33,1011.00 2039.48,1024.70 2049.64,1011.00 2059.80,1011.00 2069.95,1011.00 2080.10,1011.00 2090.26,1011.00 2100.41,1011.00 2110.57,1011.00 2120.72,1024.70 2130.88,1011.00 2141.03,1011.00 2151.19,1011.00 2161.34,1011.00 2171.50,1011.00 2181.65,1011.00 2191.81,1011.00 2201.96,1011.00 2212.12,1011.00 2222.28,1011.00 2232.43,1011.00 2242.59,1011.00 2252.74,1011.00 2262.89,1024.70 2273.05,1011.00 2283.20,1024.70 2293.36,1011.00 2303.51,1011.00 2313.67,1011.00 2323.82,1011.00 2333.98,1011.00 2344.13,1011.00 2354.29,1011.00 2364.44,1011.00 2374.60,1011.00 2384.75,1024.70 2394.91,1011.00 2405.07,1011.00 2415.22,1011.00 2425.38,1011.00 2435.53,1011.00 2445.68,1011.00 2455.84,1011.00 2465.99,1011.00 2476.15,1011.00 2486.30,1024.70 2496.46,1024.70 2506.61,1024.70 2506.61,1040.40 2496.46,1040.40 2486.30,1040.40 2476.15,1026.70 2465.99,1026.70 2455.84,1026.70 2445.68,1026.70 2435.53,1026.70 2425.38,1026.70 2415.22,1026.70 2405.07,1026.70 2394.91,1026.70 2384.75,1040.40 2374.60,1026.70 2364.44,1026.70 2354.29,1026.70 2344.13,1026.70 2333.98,1026.70 2323.82,1026.70 2313.67,1026.70 2303.51,1026.70 2293.36,1026.70 2283.20,1040.40 2273.05,1026.70 2262.89,1040.40 2252.74,1026.70 2242.59,1026.70 2232.43,1026.70 2222.28,1026.70 2212.12,1026.70 2201.96,1026.70 2191.81,1026.70 2181.65,1026.70 2171.50,1026.70 2161.34,1026.70 2151.19,1026.70 2141.03,1026.70 2130.88,1026.70 2120.72,1040.40 2110.57,1026.70 2100.41,1026.70 2090.26,1026.70 2080.10,1026.70 2069.95,1026.70 2059.80,1026.70 2049.64,1026.70 2039.48,1040.40 2029.33,1026.70 2019.17,1026.70 2009.02,1026.70 1998.86,1026.70 1988.71,1026.70 1978.55,1026.70 1968.40,1026.70 1958.24,1026.70 1948.09,1026.70 1937.93,1026.70 1927.78,1026.70 1917.62,1026.70 1907.47,1026.70 1897.31,1026.70 1887.16,1026.70 1877.00,1026.70 1866.85,1026.70 1856.69,1040.40 1846.54,1026.70 1836.38,1026.70 1826.23,1026.70 1816.07,1026.70 1805.92,1026.70 1795.76,1026.70 1785.61,1026.70 1775.45,1040.40 1765.30,1026.70 1755.14,1026.70 1744.99,1026.70 1734.83,1026.70 1724.68,1026.70 1714.52,1026.70 1704.37,1026.70 1694.21,1026.70 1684.06,1026.70 1673.90,1026.70 1663.75,1026.70 1653.59,1040.40 1643.44,1026.70 1633.28,1026.70 1623.13,1026.70 1612.97,1026.70 1602.82,1026.70 1592.66,1026.70 1582.51,1026.70 1572.36,1026.70 1562.20,1026.70 1552.04,1026.70 1541.89,1026.70 1531.73,1026.70 1521.58,1026.70 1511.42,1026.70 1501.27,1026.70 1491.12,1026.70 1480.96,1026.70 1470.80,1026.70 1460.65,1026.70 1450.49,1026.70 1440.34,1026.70 1430.18,1026.70 1420.03,1026.70 1409.88,1026.70 1399.72,1026.70 1389.56,1026.70 1379.41,1026.70 1369.25,1026.70 1359.10,1026.70 1348.94,1026.70 1338.79,1026.70 1328.63,1026.70 1318.48,1026.70 1308.32,1026.70 1298.17,1026.70 1288.01,1040.40 1277.86,1026.70 1267.70,1026.70 1257.55,1026.70 1247.39,1026.70 1237.24,1026.70 1227.09,1026.70 1216.93,1026.70 1206.77,1026.70 1196.62,1026.70 1186.46,1026.70 1176.31,1026.70 1166.15,1026.70 1156.00,1026.70 1145.84,1040.40 1135.69,1026.70 1125.53,1026.70 1115.38,1026.70 1105.22,1026.70 1095.07,1026.70 1084.91,1026.70 1074.76,1026.70 1064.61,1026.70 1054.45,1026.70 1044.30,1026.70 1034.14,1026.70 1023.98,1026.70 1013.83,1026.70 1003.67,1026.70 993.52,1026.70 983.36,1026.70 973.21,1026.70 963.05,1026.70 952.90,1026.70 942.75,1026.70 932.59,1026.70 922.43,1040.40 912.28,1026.70 902.12,1026.70 891.97,1026.70 881.81,1026.70 871.66,1026.70 861.50,1026.70 851.35,1026.70 841.19,1026.70 831.04,1026.70 820.88,1026.70 810.73,1026.70 800.57,1026.70 790.42,1026.70 780.26,1026.70 770.11,1026.70 759.95,1026.70 749.80,1026.70 739.64,1026.70 729.49,1026.70 719.33,1026.70 709.18,1026.70 699.02,1026.70 688.87,1026.70 678.71,1026.70 668.56,1026.70 658.40,1026.70 648.25,1026.70 638.10,1026.70 627.94,1026.70 617.78,1026.70 607.63,1026.70 597.47,1026.70 587.32,1026.70 577.16,1026.70 567.01,1026.70 556.86,1026.70 546.70,1026.70 536.54,1040.40 526.39,1026.70 516.23,1040.40 506.08,1026.70 495.92,1026.70 485.77,1026.70 475.61,1026.70 465.46,1026.70 455.31,1026.70 445.15,1026.70 435.00,1026.70 424.84,1026.70 414.69,1026.70 404.53,1026.70 394.38,1026.70 384.22,1026.70 374.06,1026.70 363.91,1026.70 353.75,1026.70 343.60,1026.70 333.44,1040.40 323.29,1026.70 313.13,1026.70 302.98,1026.70 292.82,1026.70 282.67,1026.70 272.51,1026.70 262.36,1026.70 252.20,1026.70 242.05,1026.70 231.89,1026.70 221.74,1026.70 211.58,1026.70 201.43,1026.70 191.28,1026.70 181.12,1026.70 170.97,1026.70 160.81,1026.70 150.66,1026.70 140.50,1026.70 130.34,1026.70 120.19,1026.70 110.03,1026.70 99.88,1026.70 89.72,1026.70 79.57,1026.70 69.42,1026.70" fill="#eab839" stroke="#eab839" stroke-width="0.5" stroke-linejoin="round"/><polygon points="69.42,971.30 79.57,971.30 89.72,1011.00 99.88,971.30 110.03,971.30 120.19,971.30 130.34,1011.00 140.50,971.30 150.66,971.30 160.81,971.30 170.97,971.30 181.12,971.30 191.28,1011.00 201.43,971.30 211.58,971.30 221.74,971.30 231.89,971.30 242.05,987.00 252.20,971.30 262.36,971.30 272.51,971.30 282.67,971.30 292.82,971.30 302.98,971.30 313.13,971.30 323.29,971.30 333.44,985.00 343.60,971.30 353.75,971.30 363.91,971.30 374.06,971.30 384.22,971.30 394.38,971.30 404.53,971.30 414.69,971.30 424.84,971.30 435.00,1011.00 445.15,971.30 455.31,971.30 465.46,971.30 475.61,971.30 485.77,971.30 495.92,1011.00 506.08,971.30 516.23,985.00 526.39,971.30 536.54,985.00 546.70,971.30 556.86,971.30 567.01,971.30 577.16,971.30 587.32,971.30 597.47,1011.00 607.63,971.30 617.78,1011.00 627.94,971.30 638.10,1011.00 648.25,971.30 658.40,971.30 668.56,971.30 678.71,971.30 688.87,971.30 699.02,971.30 709.18,971.30 719.33,1011.00 729.49,971.30 739.64,1011.00 749.80,971.30 759.95,971.30 770.11,971.30 780.26,971.30 790.42,971.30 800.57,971.30 810.73,971.30 820.88,971.30 831.04,987.00 841.19,971.30 851.35,971.30 861.50,971.30 871.66,987.00 881.81,971.30 891.97,971.30 902.12,971.30 912.28,971.30 922.43,985.00 932.59,971.30 942.75,971.30 952.90,971.30 963.05,971.30 973.21,971.30 983.36,971.30 993.52,971.30 1003.67,971.30 1013.83,971.30 1023.98,971.30 1034.14,971.30 1044.30,971.30 1054.45,971.30 1064.61,971.30 1074.76,971.30 1084.91,1011.00 1095.07,971.30 1105.22,1011.00 1115.38,971.30 1125.53,971.30 1135.69,971.30 1145.84,985.00 1156.00,971.30 1166.15,971.30 1176.31,971.30 1186.46,971.30 1196.62,971.30 1206.77,1011.00 1216.93,971.30 1227.09,971.30 1237.24,971.30 1247.39,971.30 1257.55,971.30 1267.70,971.30 1277.86,971.30 1288.01,985.00 1298.17,971.30 1308.32,971.30 1318.48,971.30 1328.63,971.30 1338.79,971.30 1348.94,971.30 1359.10,987.00 1369.25,971.30 1379.41,971.30 1389.56,971.30 1399.72,971.30 1409.88,1011.00 1420.03,971.30 1430.18,971.30 1440.34,971.30 1450.49,971.30 1460.65,971.30 1470.80,971.30 1480.96,971.30 1491.12,971.30 1501.27,971.30 1511.42,971.30 1521.58,971.30 1531.73,971.30 1541.89,971.30 1552.04,971.30 1562.20,971.30 1572.36,971.30 1582.51,971.30 1592.66,971.30 1602.82,971.30 1612.97,971.30 1623.13,971.30 1633.28,971.30 1643.44,971.30 1653.59,985.00 1663.75,971.30 1673.90,971.30 1684.06,987.00 1694.21,1011.00 1704.37,971.30 1714.52,971.30 1724.68,971.30 1734.83,971.30 1744.99,971.30 1755.14,971.30 1765.30,971.30 1775.45,985.00 1785.61,971.30 1795.76,971.30 1805.92,971.30 1816.07,971.30 1826.23,971.30 1836.38,971.30 1846.54,971.30 1856.69,985.00 1866.85,971.30 1877.00,971.30 1887.16,971.30 1897.31,971.30 1907.47,971.30 1917.62,1011.00 1927.78,971.30 1937.93,1011.00 1948.09,987.00 1958.24,971.30 1968.40,987.00 1978.55,971.30 1988.71,971.30 1998.86,971.30 2009.02,971.30 2019.17,1011.00 2029.33,971.30 2039.48,985.00 2049.64,971.30 2059.80,1011.00 2069.95,971.30 2080.10,971.30 2090.26,971.30 2100.41,971.30 2110.57,1011.00 2120.72,985.00 2130.88,971.30 2141.03,971.30 2151.19,971.30 2161.34,971.30 2171.50,971.30 2181.65,971.30 2191.81,971.30 2201.96,1011.00 2212.12,971.30 2222.28,1011.00 2232.43,971.30 2242.59,971.30 2252.74,971.30 2262.89,985.00 2273.05,971.30 2283.20,1024.70 2293.36,971.30 2303.51,971.30 2313.67,971.30 2323.82,971.30 2333.98,971.30 2344.13,971.30 2354.29,971.30 2364.44,971.30 2374.60,971.30 2384.75,985.00 2394.91,971.30 2405.07,1011.00 2415.22,971.30 2425.38,971.30 2435.53,971.30 2445.68,971.30 2455.84,971.30 2465.99,971.30 2476.15,971.30 2486.30,985.00 2496.46,985.00 2506.61,985.00 2506.61,1024.70 2496.46,1024.70 2486.30,1024.70 2476.15,1011.00 2465.99,1011.00 2455.84,1011.00 2445.68,1011.00 2435.53,1011.00 2425.38,1011.00 2415.22,1011.00 2405.07,1011.00 2394.91,1011.00 2384.75,1024.70 2374.60,1011.00 2364.44,1011.00 2354.29,1011.00 2344.13,1011.00 2333.98,1011.00 2323.82,1011.00 2313.67,1011.00 2303.51,1011.00 2293.36,1011.00 2283.20,1024.70 2273.05,1011.00 2262.89,1024.70 2252.74,1011.00 2242.59,1011.00 2232.43,1011.00 2222.28,1011.00 2212.12,1011.00 2201.96,1011.00 2191.81,1011.00 2181.65,1011.00 2171.50,1011.00 2161.34,1011.00 2151.19,1011.00 2141.03,1011.00 2130.88,1011.00 2120.72,1024.70 2110.57,1011.00 2100.41,1011.00 2090.26,1011.00 2080.10,1011.00 2069.95,1011.00 2059.80,1011.00 2049.64,1011.00 2039.48,1024.70 2029.33,1011.00 2019.17,1011.00 2009.02,1011.00 1998.86,1011.00 1988.71,1011.00 1978.55,1011.00 1968.40,1026.70 1958.24,1011.00 1948.09,1026.70 1937.93,1011.00 1927.78,1011.00 1917.62,1011.00 1907.47,1011.00 1897.31,1011.00 1887.16,1011.00 1877.00,1011.00 1866.85,1011.00 1856.69,1024.70 1846.54,1011.00 1836.38,1011.00 1826.23,1011.00 1816.07,1011.00 1805.92,1011.00 1795.76,1011.00 1785.61,1011.00 1775.45,1024.70 1765.30,1011.00 1755.14,1011.00 1744.99,1011.00 1734.83,1011.00 1724.68,1011.00 1714.52,1011.00 1704.37,1011.00 1694.21,1011.00 1684.06,1026.70 1673.90,1011.00 1663.75,1011.00 1653.59,1024.70 1643.44,1011.00 1633.28,1011.00 1623.13,1011.00 1612.97,1011.00 1602.82,1011.00 1592.66,1011.00 1582.51,1011.00 1572.36,1011.00 1562.20,1011.00 1552.04,1011.00 1541.89,1011.00 1531.73,1011.00 1521.58,1011.00 1511.42,1011.00 1501.27,1011.00 1491.12,1011.00 1480.96,1011.00 1470.80,1011.00 1460.65,1011.00 1450.49,1011.00 1440.34,1011.00 1430.18,1011.00 1420.03,1011.00 1409.88,1011.00 1399.72,1011.00 1389.56,1011.00 1379.41,1011.00 1369.25,1011.00 1359.10,1026.70 1348.94,1011.00 1338.79,1011.00 1328.63,1011.00 1318.48,1011.00 1308.32,1011.00 1298.17,1011.00 1288.01,1024.70 1277.86,1011.00 1267.70,1011.00 1257.55,1011.00 1247.39,1011.00 1237.24,1011.00 1227.09,1011.00 1216.93,1011.00 1206.77,1011.00 1196.62,1011.00 1186.46,1011.00 1176.31,1011.00 1166.15,1011.00 1156.00,1011.00 1145.84,1024.70 1135.69,1011.00 1125.53,1011.00 1115.38,1011.00 1105.22,1011.00 1095.07,1011.00 1084.91,1011.00 1074.76,1011.00 1064.61,1011.00 1054.45,1011.00 1044.30,1011.00 1034.14,1011.00 1023.98,1011.00 1013.83,1011.00 1003.67,1011.00 993.52,1011.00 983.36,1011.00 973.21,1011.00 963.05,1011.00 952.90,1011.00 942.75,1011.00 932.59,1011.00 922.43,1024.70 912.28,1011.00 902.12,1011.00 891.97,1011.00 881.81,1011.00 871.66,1026.70 861.50,1011.00 851.35,1011.00 841.19,1011.00 831.04,1026.70 820.88,1011.00 810.73,1011.00 800.57,1011.00 790.42,1011.00 780.26,1011.00 770.11,1011.00 759.95,1011.00 749.80,1011.00 739.64,1011.00 729.49,1011.00 719.33,1011.00 709.18,1011.00 699.02,1011.00 688.87,1011.00 678.71,1011.00 668.56,1011.00 658.40,1011.00 648.25,1011.00 638.10,1011.00 627.94,1011.00 617.78,1011.00 607.63,1011.00 597.47,1011.00 587.32,1011.00 577.16,1011.00 567.01,1011.00 556.86,1011.00 546.70,1011.00 536.54,1024.70 526.39,1011.00 516.23,1024.70 506.08,1011.00 495.92,1011.00 485.77,1011.00 475.61,1011.00 465.46,1011.00 455.31,1011.00 445.15,1011.00 435.00,1011.00 424.84,1011.00 414.69,1011.00 404.53,1011.00 394.38,1011.00 384.22,1011.00 374.06,1011.00 363.91,1011.00 353.75,1011.00 343.60,1011.00 333.44,1024.70 323.29,1011.00 313.13,1011.00 302.98,1011.00 292.82,1011.00 282.67,1011.00 272.51,1011.00 262.36,1011.00 252.20,1011.00 242.05,1026.70 231.89,1011.00 221.74,1011.00 211.58,1011.00 201.43,1011.00 191.28,1011.00 181.12,1011.00 170.97,1011.00 160.81,1011.00 150.66,1011.00 140.50,1011.00 130.34,1011.00 120.19,1011.00 110.03,1011.00 99.88,1011.00 89.72,1011.00 79.57,1011.00 69.42,1011.00" fill="#6ed0e0" stroke="#6ed0e0" stroke-width="0.5" stroke-linejoin="round"/><polygon points="69.42,923.50 79.57,923.50 89.72,963.20 99.88,923.50 110.03,923.50 120.19,923.50 130.34,963.20 140.50,923.50 150.66,923.50 160.81,923.50 170.97,923.50 181.12,923.50 191.28,963.20 201.43,923.50 211.58,923.50 221.74,923.50 231.89,923.50 242.05,939.20 252.20,923.50 262.36,923.50 272.51,923.50 282.67,923.50 292.82,923.50 302.98,923.50 313.13,923.50 323.29,923.50 333.44,937.20 343.60,923.50 353.75,923.50 363.91,923.50 374.06,923.50 384.22,923.50 394.38,923.50 404.53,923.50 414.69,923.50 424.84,923.50 435.00,963.20 445.15,923.50 455.31,923.50 465.46,923.50 475.61,923.50 485.77,923.50 495.92,1011.00 506.08,971.30 516.23,937.20 526.39,923.50 536.54,937.20 546.70,923.50 556.86,923.50 567.01,923.50 577.16,923.50 587.32,923.50 597.47,963.20 607.63,923.50 617.78,963.20 627.94,923.50 638.10,963.20 648.25,971.30 658.40,923.50 668.56,923.50 678.71,923.50 688.87,923.50 699.02,923.50 709.18,923.50 719.33,963.20 729.49,923.50 739.64,963.20 749.80,923.50 759.95,923.50 770.11,923.50 780.26,923.50 790.42,923.50 800.57,923.50 810.73,923.50 820.88,923.50 831.04,939.20 841.19,923.50 851.35,971.30 861.50,923.50 871.66,939.20 881.81,923.50 891.97,923.50 902.12,923.50 912.28,923.50 922.43,937.20 932.59,923.50 942.75,923.50 952.90,971.30 963.05,923.50 973.21,923.50 983.36,923.50 993.52,923.50 1003.67,923.50 1013.83,971.30 1023.98,923.50 1034.14,923.50 1044.30,923.50 1054.45,971.30 1064.61,923.50 1074.76,923.50 1084.91,963.20 1095.07,923.50 1105.22,963.20 1115.38,923.50 1125.53,923.50 1135.69,923.50 1145.84,937.20 1156.00,923.50 1166.15,923.50 1176.31,971.30 1186.46,923.50 1196.62,923.50 1206.77,963.20 1216.93,923.50 1227.09,923.50 1237.24,971.30 1247.39,923.50 1257.55,923.50 1267.70,923.50 1277.86,971.30 1288.01,937.20 1298.17,971.30 1308.32,923.50 1318.48,923.50 1328.63,923.50 1338.79,971.30 1348.94,923.50 1359.10,987.00 1369.25,923.50 1379.41,923.50 1389.56,923.50 1399.72,923.50 1409.88,963.20 1420.03,923.50 1430.18,923.50 1440.34,923.50 1450.49,923.50 1460.65,923.50 1470.80,923.50 1480.96,923.50 1491.12,923.50 1501.27,923.50 1511.42,923.50 1521.58,923.50 1531.73,923.50 1541.89,923.50 1552.04,923.50 1562.20,923.50 1572.36,923.50 1582.51,923.50 1592.66,923.50 1602.82,923.50 1612.97,923.50 1623.13,923.50 1633.28,923.50 1643.44,923.50 1653.59,937.20 1663.75,923.50 1673.90,923.50 1684.06,939.20 1694.21,963.20 1704.37,923.50 1714.52,923.50 1724.68,923.50 1734.83,923.50 1744.99,923.50 1755.14,923.50 1765.30,923.50 1775.45,937.20 1785.61,923.50 1795.76,923.50 1805.92,923.50 1816.07,923.50 1826.23,923.50 1836.38,923.50 1846.54,971.30 1856.69,937.20 1866.85,971.30 1877.00,923.50 1887.16,971.30 1897.31,923.50 1907.47,971.30 1917.62,963.20 1927.78,923.50 1937.93,963.20 1948.09,939.20 1958.24,923.50 1968.40,939.20 1978.55,923.50 1988.71,923.50 1998.86,923.50 2009.02,923.50 2019.17,963.20 2029.33,923.50 2039.48,937.20 2049.64,923.50 2059.80,963.20 2069.95,923.50 2080.10,923.50 2090.26,923.50 2100.41,923.50 2110.57,963.20 2120.72,937.20 2130.88,923.50 2141.03,923.50 2151.19,923.50 2161.34,923.50 2171.50,923.50 2181.65,923.50 2191.81,923.50 2201.96,963.20 2212.12,923.50 2222.28,963.20 2232.43,923.50 2242.59,923.50 2252.74,923.50 2262.89,937.20 2273.05,923.50 2283.20,976.90 2293.36,923.50 2303.51,923.50 2313.67,923.50 2323.82,923.50 2333.98,923.50 2344.13,923.50 2354.29,923.50 2364.44,923.50 2374.60,923.50 2384.75,937.20 2394.91,923.50 2405.07,963.20 2415.22,923.50 2425.38,923.50 2435.53,923.50 2445.68,923.50 2455.84,923.50 2465.99,923.50 2476.15,923.50 2486.30,937.20 2496.46,937.20 2506.61,937.20 2506.61,985.00 2496.46,985.00 2486.30,985.00 2476.15,971.30 2465.99,971.30 2455.84,971.30 2445.68,971.30 2435.53,971.30 2425.38,971.30 2415.22,971.30 2405.07,1011.00 2394.91,971.30 2384.75,985.00 2374.60,971.30 2364.44,971.30 2354.29,971.30 2344.13,971.30 2333.98,971.30 2323.82,971.30 2313.67,971.30 2303.51,971.30 2293.36,971.30 2283.20,1024.70 2273.05,971.30 2262.89,985.00 2252.74,971.30 2242.59,971.30 2232.43,971.30 2222.28,1011.00 2212.12,971.30 2201.96,1011.00 2191.81,971.30 2181.65,971.30 2171.50,971.30 2161.34,971.30 2151.19,971.30 2141.03,971.30 2130.88,971.30 2120.72,985.00 2110.57,1011.00 2100.41,971.30 2090.26,971.30 2080.10,971.30 2069.95,971.30 2059.80,1011.00 2049.64,971.30 2039.48,985.00 2029.33,971.30 2019.17,1011.00 2009.02,971.30 1998.86,971.30 1988.71,971.30 1978.55,971.30 1968.40,987.00 1958.24,971.30 1948.09,987.00 1937.93,1011.00 1927.78,971.30 1917.62,1011.00 1907.47,971.30 1897.31,971.30 1887.16,971.30 1877.00,971.30 1866.85,971.30 1856.69,985.00 1846.54,971.30 1836.38,971.30 1826.23,971.30 1816.07,971.30 1805.92,971.30 1795.76,971.30 1785.61,971.30 1775.45,985.00 1765.30,971.30 1755.14,971.30 1744.99,971.30 1734.83,971.30 1724.68,971.30 1714.52,971.30 1704.37,971.30 1694.21,1011.00 1684.06,987.00 1673.90,971.30 1663.75,971.30 1653.59,985.00 1643.44,971.30 1633.28,971.30 1623.13,971.30 1612.97,971.30 1602.82,971.30 1592.66,971.30 1582.51,971.30 1572.36,971.30 1562.20,971.30 1552.04,971.30 1541.89,971.30 1531.73,971.30 1521.58,971.30 1511.42,971.30 1501.27,971.30 1491.12,971.30 1480.96,971.30 1470.80,971.30 1460.65,971.30 1450.49,971.30 1440.34,971.30 1430.18,971.30 1420.03,971.30 1409.88,1011.00 1399.72,971.30 1389.56,971.30 1379.41,971.30 1369.25,971.30 1359.10,987.00 1348.94,971.30 1338.79,971.30 1328.63,971.30 1318.48,971.30 1308.32,971.30 1298.17,971.30 1288.01,985.00 1277.86,971.30 1267.70,971.30 1257.55,971.30 1247.39,971.30 1237.24,971.30 1227.09,971.30 1216.93,971.30 1206.77,1011.00 1196.62,971.30 1186.46,971.30 1176.31,971.30 1166.15,971.30 1156.00,971.30 1145.84,985.00 1135.69,971.30 1125.53,971.30 1115.38,971.30 1105.22,1011.00 1095.07,971.30 1084.91,1011.00 1074.76,971.30 1064.61,971.30 1054.45,971.30 1044.30,971.30 1034.14,971.30 1023.98,971.30 1013.83,971.30 1003.67,971.30 993.52,971.30 983.36,971.30 973.21,971.30 963.05,971.30 952.90,971.30 942.75,971.30 932.59,971.30 922.43,985.00 912.28,971.30 902.12,971.30 891.97,971.30 881.81,971.30 871.66,987.00 861.50,971.30 851.35,971.30 841.19,971.30 831.04,987.00 820.88,971.30 810.73,971.30 800.57,971.30 790.42,971.30 780.26,971.30 770.11,971.30 759.95,971.30 749.80,971.30 739.64,1011.00 729.49,971.30 719.33,1011.00 709.18,971.30 699.02,971.30 688.87,971.30 678.71,971.30 668.56,971.30 658.40,971.30 648.25,971.30 638.10,1011.00 627.94,971.30 617.78,1011.00 607.63,971.30 597.47,1011.00 587.32,971.30 577.16,971.30 567.01,971.30 556.86,971.30 546.70,971.30 536.54,985.00 526.39,971.30 516.23,985.00 506.08,971.30 495.92,1011.00 485.77,971.30 475.61,971.30 465.46,971.30 455.31,971.30 445.15,971.30 435.00,1011.00 424.84,971.30 414.69,971.30 404.53,971.30 394.38,971.30 384.22,971.30 374.06,971.30 363.91,971.30 353.75,971.30 343.60,971.30 333.44,985.00 323.29,971.30 313.13,971.30 302.98,971.30 292.82,971.30 282.67,971.30 272.51,971.30 262.36,971.30 252.20,971.30 242.05,987.00 231.89,971.30 221.74,971.30 211.58,971.30 201.43,971.30 191.28,1011.00 181.12,971.30 170.97,971.30 160.81,971.30 150.66,971.30 140.50,971.30 130.34,1011.00 120.19,971.30 110.03,971.30 99.88,971.30 89.72,1011.00 79.57,971.30 69.42,971.30" fill="#ef843c" stroke="#ef843c" stroke-width="0.5" stroke-linejoin="round"/><polygon points="69.42,923.50 79.57,914.80 89.72,954.50 99.88,914.80 110.03,914.80 120.19,914.80 130.34,954.50 140.50,914.80 150.66,914.80 160.81,914.80 170.97,914.80 181.12,914.80 191.28,963.20 201.43,914.80 211.58,923.50 221.74,914.80 231.89,914.80 242.05,930.50 252.20,914.80 262.36,914.80 272.51,914.80 282.67,914.80 292.82,923.50 302.98,914.80 313.13,914.80 323.29,914.80 333.44,928.50 343.60,914.80 353.75,914.80 363.91,914.80 374.06,914.80 384.22,914.80 394.38,914.80 404.53,914.80 414.69,914.80 424.84,914.80 435.00,954.50 445.15,914.80 455.31,923.50 465.46,914.80 475.61,914.80 485.77,914.80 495.92,1002.30 506.08,962.60 516.23,928.50 526.39,914.80 536.54,928.50 546.70,914.80 556.86,914.80 567.01,914.80 577.16,914.80 587.32,914.80 597.47,954.50 607.63,914.80 617.78,954.50 627.94,914.80 638.10,954.50 648.25,962.60 658.40,914.80 668.56,914.80 678.71,914.80 688.87,914.80 699.02,914.80 709.18,914.80 719.33,954.50 729.49,914.80 739.64,954.50 749.80,914.80 759.95,914.80 770.11,914.80 780.26,914.80 790.42,914.80 800.57,914.80 810.73,914.80 820.88,914.80 831.04,930.50 841.19,914.80 851.35,962.60 861.50,914.80 871.66,930.50 881.81,914.80 891.97,914.80 902.12,914.80 912.28,914.80 922.43,928.50 932.59,914.80 942.75,914.80 952.90,962.60 963.05,914.80 973.21,914.80 983.36,914.80 993.52,914.80 1003.67,914.80 1013.83,962.60 1023.98,914.80 1034.14,914.80 1044.30,914.80 1054.45,962.60 1064.61,914.80 1074.76,914.80 1084.91,954.50 1095.07,914.80 1105.22,954.50 1115.38,914.80 1125.53,914.80 1135.69,914.80 1145.84,928.50 1156.00,914.80 1166.15,914.80 1176.31,962.60 1186.46,914.80 1196.62,914.80 1206.77,954.50 1216.93,914.80 1227.09,914.80 1237.24,962.60 1247.39,914.80 1257.55,914.80 1267.70,914.80 1277.86,962.60 1288.01,928.50 1298.17,962.60 1308.32,914.80 1318.48,914.80 1328.63,914.80 1338.79,962.60 1348.94,914.80 1359.10,978.30 1369.25,914.80 1379.41,914.80 1389.56,914.80 1399.72,914.80 1409.88,954.50 1420.03,914.80 1430.18,923.50 1440.34,914.80 1450.49,914.80 1460.65,914.80 1470.80,914.80 1480.96,914.80 1491.12,914.80 1501.27,914.80 1511.42,914.80 1521.58,914.80 1531.73,923.50 1541.89,914.80 1552.04,923.50 1562.20,914.80 1572.36,923.50 1582.51,914.80 1592.66,914.80 1602.82,914.80 1612.97,914.80 1623.13,914.80 1633.28,914.80 1643.44,914.80 1653.59,928.50 1663.75,914.80 1673.90,914.80 1684.06,930.50 1694.21,954.50 1704.37,914.80 1714.52,914.80 1724.68,914.80 1734.83,914.80 1744.99,914.80 1755.14,914.80 1765.30,914.80 1775.45,928.50 1785.61,914.80 1795.76,914.80 1805.92,914.80 1816.07,914.80 1826.23,914.80 1836.38,914.80 1846.54,962.60 1856.69,928.50 1866.85,962.60 1877.00,914.80 1887.16,962.60 1897.31,914.80 1907.47,962.60 1917.62,954.50 1927.78,914.80 1937.93,954.50 1948.09,930.50 1958.24,914.80 1968.40,930.50 1978.55,914.80 1988.71,914.80 1998.86,914.80 2009.02,914.80 2019.17,954.50 2029.33,914.80 2039.48,928.50 2049.64,914.80 2059.80,954.50 2069.95,914.80 2080.10,914.80 2090.26,914.80 2100.41,914.80 2110.57,954.50 2120.72,928.50 2130.88,914.80 2141.03,914.80 2151.19,914.80 2161.34,914.80 2171.50,914.80 2181.65,914.80 2191.81,914.80 2201.96,954.50 2212.12,914.80 2222.28,954.50 2232.43,914.80 2242.59,914.80 2252.74,914.80 2262.89,928.50 2273.05,914.80 2283.20,968.20 2293.36,914.80 2303.51,914.80 2313.67,914.80 2323.82,914.80 2333.98,914.80 2344.13,914.80 2354.29,914.80 2364.44,914.80 2374.60,914.80 2384.75,928.50 2394.91,914.80 2405.07,954.50 2415.22,914.80 2425.38,914.80 2435.53,914.80 2445.68,914.80 2455.84,914.80 2465.99,914.80 2476.15,914.80 2486.30,928.50 2496.46,928.50 2506.61,928.50 2506.61,937.20 2496.46,937.20 2486.30,937.20 2476.15,923.50 2465.99,923.50 2455.84,923.50 2445.68,923.50 2435.53,923.50 2425.38,923.50 2415.22,923.50 2405.07,963.20 2394.91,923.50 2384.75,937.20 2374.60,923.50 2364.44,923.50 2354.29,923.50 2344.13,923.50 2333.98,923.50 2323.82,923.50 2313.67,923.50 2303.51,923.50 2293.36,923.50 2283.20,976.90 2273.05,923.50 2262.89,937.20 2252.74,923.50 2242.59,923.50 2232.43,923.50 2222.28,963.20 2212.12,923.50 2201.96,963.20 2191.81,923.50 2181.65,923.50 2171.50,923.50 2161.34,923.50 2151.19,923.50 2141.03,923.50 2130.88,923.50 2120.72,937.20 2110.57,963.20 2100.41,923.50 2090.26,923.50 2080.10,923.50 2069.95,923.50 2059.80,963.20 2049.64,923.50 2039.48,937.20 2029.33,923.50 2019.17,963.20 2009.02,923.50 1998.86,923.50 1988.71,923.50 1978.55,923.50 1968.40,939.20 1958.24,923.50 1948.09,939.20 1937.93,963.20 1927.78,923.50 1917.62,963.20 1907.47,971.30 1897.31,923.50 1887.16,971.30 1877.00,923.50 1866.85,971.30 1856.69,937.20 1846.54,971.30 1836.38,923.50 1826.23,923.50 1816.07,923.50 1805.92,923.50 1795.76,923.50 1785.61,923.50 1775.45,937.20 1765.30,923.50 1755.14,923.50 1744.99,923.50 1734.83,923.50 1724.68,923.50 1714.52,923.50 1704.37,923.50 1694.21,963.20 1684.06,939.20 1673.90,923.50 1663.75,923.50 1653.59,937.20 1643.44,923.50 1633.28,923.50 1623.13,923.50 1612.97,923.50 1602.82,923.50 1592.66,923.50 1582.51,923.50 1572.36,923.50 1562.20,923.50 1552.04,923.50 1541.89,923.50 1531.73,923.50 1521.58,923.50 1511.42,923.50 1501.27,923.50 1491.12,923.50 1480.96,923.50 1470.80,923.50 1460.65,923.50 1450.49,923.50 1440.34,923.50 1430.18,923.50 1420.03,923.50 1409.88,963.20 1399.72,923.50 1389.56,923.50 1379.41,923.50 1369.25,923.50 1359.10,987.00 1348.94,923.50 1338.79,971.30 1328.63,923.50 1318.48,923.50 1308.32,923.50 1298.17,971.30 1288.01,937.20 1277.86,971.30 1267.70,923.50 1257.55,923.50 1247.39,923.50 1237.24,971.30 1227.09,923.50 1216.93,923.50 1206.77,963.20 1196.62,923.50 1186.46,923.50 1176.31,971.30 1166.15,923.50 1156.00,923.50 1145.84,937.20 1135.69,923.50 1125.53,923.50 1115.38,923.50 1105.22,963.20 1095.07,923.50 1084.91,963.20 1074.76,923.50 1064.61,923.50 1054.45,971.30 1044.30,923.50 1034.14,923.50 1023.98,923.50 1013.83,971.30 1003.67,923.50 993.52,923.50 983.36,923.50 973.21,923.50 963.05,923.50 952.90,971.30 942.75,923.50 932.59,923.50 922.43,937.20 912.28,923.50 902.12,923.50 891.97,923.50 881.81,923.50 871.66,939.20 861.50,923.50 851.35,971.30 841.19,923.50 831.04,939.20 820.88,923.50 810.73,923.50 800.57,923.50 790.42,923.50 780.26,923.50 770.11,923.50 759.95,923.50 749.80,923.50 739.64,963.20 729.49,923.50 719.33,963.20 709.18,923.50 699.02,923.50 688.87,923.50 678.71,923.50 668.56,923.50 658.40,923.50 648.25,971.30 638.10,963.20 627.94,923.50 617.78,963.20 607.63,923.50 597.47,963.20 587.32,923.50 577.16,923.50 567.01,923.50 556.86,923.50 546.70,923.50 536.54,937.20 526.39,923.50 516.23,937.20 506.08,971.30 495.92,1011.00 485.77,923.50 475.61,923.50 465.46,923.50 455.31,923.50 445.15,923.50 435.00,963.20 424.84,923.50 414.69,923.50 404.53,923.50 394.38,923.50 384.22,923.50 374.06,923.50 363.91,923.50 353.75,923.50 343.60,923.50 333.44,937.20 323.29,923.50 313.13,923.50 302.98,923.50 292.82,923.50 282.67,923.50 272.51,923.50 262.36,923.50 252.20,923.50 242.05,939.20 231.89,923.50 221.74,923.50 211.58,923.50 201.43,923.50 191.28,963.20 181.12,923.50 170.97,923.50 160.81,923.50 150.66,923.50 140.50,923.50 130.34,963.20 120.19,923.50 110.03,923.50 99.88,923.50 89.72,963.20 79.57,923.50 69.42,923.50" fill="#e24d42" stroke="#e24d42" stroke-width="0.5" stroke-linejoin="round"/><polygon points="69.42,915.60 79.57,906.90 89.72,946.60 99.88,906.90 110.03,906.90 120.19,914.80 130.34,946.60 140.50,914.80 150.66,906.90 160.81,906.90 170.97,906.90 181.12,906.90 191.28,963.20 201.43,906.90 211.58,915.60 221.74,906.90 231.89,906.90 242.05,922.60 252.20,906.90 262.36,914.80 272.51,906.90 282.67,906.90 292.82,915.60 302.98,906.90 313.13,906.90 323.29,906.90 333.44,920.60 343.60,914.80 353.75,906.90 363.91,906.90 374.06,906.90 384.22,914.80 394.38,906.90 404.53,906.90 414.69,906.90 424.84,906.90 435.00,946.60 445.15,906.90 455.31,915.60 465.46,906.90 475.61,906.90 485.77,906.90 495.92,994.40 506.08,958.60 516.23,920.60 526.39,906.90 536.54,920.60 546.70,906.90 556.86,906.90 567.01,914.80 577.16,906.90 587.32,906.90 597.47,946.60 607.63,906.90 617.78,946.60 627.94,906.90 638.10,946.60 648.25,954.70 658.40,906.90 668.56,906.90 678.71,906.90 688.87,906.90 699.02,906.90 709.18,906.90 719.33,946.60 729.49,906.90 739.64,946.60 749.80,906.90 759.95,906.90 770.11,906.90 780.26,906.90 790.42,906.90 800.57,906.90 810.73,906.90 820.88,906.90 831.04,922.60 841.19,906.90 851.35,954.70 861.50,906.90 871.66,922.60 881.81,906.90 891.97,914.80 902.12,906.90 912.28,906.90 922.43,920.60 932.59,906.90 942.75,906.90 952.90,954.70 963.05,906.90 973.21,914.80 983.36,906.90 993.52,906.90 1003.67,906.90 1013.83,954.70 1023.98,906.90 1034.14,906.90 1044.30,906.90 1054.45,954.70 1064.61,906.90 1074.76,906.90 1084.91,946.60 1095.07,906.90 1105.22,946.60 1115.38,906.90 1125.53,906.90 1135.69,906.90 1145.84,920.60 1156.00,906.90 1166.15,906.90 1176.31,954.70 1186.46,906.90 1196.62,906.90 1206.77,946.60 1216.93,906.90 1227.09,906.90 1237.24,954.70 1247.39,906.90 1257.55,906.90 1267.70,906.90 1277.86,954.70 1288.01,920.60 1298.17,954.70 1308.32,906.90 1318.48,914.80 1328.63,914.80 1338.79,954.70 1348.94,906.90 1359.10,970.40 1369.25,906.90 1379.41,906.90 1389.56,906.90 1399.72,906.90 1409.88,946.60 1420.03,906.90 1430.18,923.50 1440.34,906.90 1450.49,906.90 1460.65,906.90 1470.80,906.90 1480.96,906.90 1491.12,906.90 1501.27,906.90 1511.42,906.90 1521.58,906.90 1531.73,923.50 1541.89,906.90 1552.04,923.50 1562.20,906.90 1572.36,923.50 1582.51,914.80 1592.66,906.90 1602.82,914.80 1612.97,906.90 1623.13,906.90 1633.28,906.90 1643.44,906.90 1653.59,920.60 1663.75,906.90 1673.90,906.90 1684.06,922.60 1694.21,946.60 1704.37,906.90 1714.52,906.90 1724.68,906.90 1734.83,906.90 1744.99,906.90 1755.14,906.90 1765.30,914.80 1775.45,928.50 1785.61,906.90 1795.76,906.90 1805.92,906.90 1816.07,906.90 1826.23,914.80 1836.38,906.90 1846.54,954.70 1856.69,920.60 1866.85,954.70 1877.00,906.90 1887.16,954.70 1897.31,906.90 1907.47,954.70 1917.62,946.60 1927.78,906.90 1937.93,946.60 1948.09,922.60 1958.24,906.90 1968.40,922.60 1978.55,906.90 1988.71,906.90 1998.86,914.80 2009.02,906.90 2019.17,946.60 2029.33,906.90 2039.48,920.60 2049.64,914.80 2059.80,946.60 2069.95,914.80 2080.10,906.90 2090.26,914.80 2100.41,906.90 2110.57,946.60 2120.72,920.60 2130.88,906.90 2141.03,906.90 2151.19,906.90 2161.34,906.90 2171.50,906.90 2181.65,906.90 2191.81,906.90 2201.96,946.60 2212.12,906.90 2222.28,946.60 2232.43,906.90 2242.59,906.90 2252.74,906.90 2262.89,920.60 2273.05,906.90 2283.20,960.30 2293.36,906.90 2303.51,906.90 2313.67,906.90 2323.82,906.90 2333.98,906.90 2344.13,906.90 2354.29,914.80 2364.44,906.90 2374.60,906.90 2384.75,920.60 2394.91,906.90 2405.07,946.60 2415.22,906.90 2425.38,906.90 2435.53,906.90 2445.68,906.90 2455.84,914.80 2465.99,906.90 2476.15,914.80 2486.30,920.60 2496.46,920.60 2506.61,920.60 2506.61,928.50 2496.46,928.50 2486.30,928.50 2476.15,914.80 2465.99,914.80 2455.84,914.80 2445.68,914.80 2435.53,914.80 2425.38,914.80 2415.22,914.80 2405.07,954.50 2394.91,914.80 2384.75,928.50 2374.60,914.80 2364.44,914.80 2354.29,914.80 2344.13,914.80 2333.98,914.80 2323.82,914.80 2313.67,914.80 2303.51,914.80 2293.36,914.80 2283.20,968.20 2273.05,914.80 2262.89,928.50 2252.74,914.80 2242.59,914.80 2232.43,914.80 2222.28,954.50 2212.12,914.80 2201.96,954.50 2191.81,914.80 2181.65,914.80 2171.50,914.80 2161.34,914.80 2151.19,914.80 2141.03,914.80 2130.88,914.80 2120.72,928.50 2110.57,954.50 2100.41,914.80 2090.26,914.80 2080.10,914.80 2069.95,914.80 2059.80,954.50 2049.64,914.80 2039.48,928.50 2029.33,914.80 2019.17,954.50 2009.02,914.80 1998.86,914.80 1988.71,914.80 1978.55,914.80 1968.40,930.50 1958.24,914.80 1948.09,930.50 1937.93,954.50 1927.78,914.80 1917.62,954.50 1907.47,962.60 1897.31,914.80 1887.16,962.60 1877.00,914.80 1866.85,962.60 1856.69,928.50 1846.54,962.60 1836.38,914.80 1826.23,914.80 1816.07,914.80 1805.92,914.80 1795.76,914.80 1785.61,914.80 1775.45,928.50 1765.30,914.80 1755.14,914.80 1744.99,914.80 1734.83,914.80 1724.68,914.80 1714.52,914.80 1704.37,914.80 1694.21,954.50 1684.06,930.50 1673.90,914.80 1663.75,914.80 1653.59,928.50 1643.44,914.80 1633.28,914.80 1623.13,914.80 1612.97,914.80 1602.82,914.80 1592.66,914.80 1582.51,914.80 1572.36,923.50 1562.20,914.80 1552.04,923.50 1541.89,914.80 1531.73,923.50 1521.58,914.80 1511.42,914.80 1501.27,914.80 1491.12,914.80 1480.96,914.80 1470.80,914.80 1460.65,914.80 1450.49,914.80 1440.34,914.80 1430.18,923.50 1420.03,914.80 1409.88,954.50 1399.72,914.80 1389.56,914.80 1379.41,914.80 1369.25,914.80 1359.10,978.30 1348.94,914.80 1338.79,962.60 1328.63,914.80 1318.48,914.80 1308.32,914.80 1298.17,962.60 1288.01,928.50 1277.86,962.60 1267.70,914.80 1257.55,914.80 1247.39,914.80 1237.24,962.60 1227.09,914.80 1216.93,914.80 1206.77,954.50 1196.62,914.80 1186.46,914.80 1176.31,962.60 1166.15,914.80 1156.00,914.80 1145.84,928.50 1135.69,914.80 1125.53,914.80 1115.38,914.80 1105.22,954.50 1095.07,914.80 1084.91,954.50 1074.76,914.80 1064.61,914.80 1054.45,962.60 1044.30,914.80 1034.14,914.80 1023.98,914.80 1013.83,962.60 1003.67,914.80 993.52,914.80 983.36,914.80 973.21,914.80 963.05,914.80 952.90,962.60 942.75,914.80 932.59,914.80 922.43,928.50 912.28,914.80 902.12,914.80 891.97,914.80 881.81,914.80 871.66,930.50 861.50,914.80 851.35,962.60 841.19,914.80 831.04,930.50 820.88,914.80 810.73,914.80 800.57,914.80 790.42,914.80 780.26,914.80 770.11,914.80 759.95,914.80 749.80,914.80 739.64,954.50 729.49,914.80 719.33,954.50 709.18,914.80 699.02,914.80 688.87,914.80 678.71,914.80 668.56,914.80 658.40,914.80 648.25,962.60 638.10,954.50 627.94,914.80 617.78,954.50 607.63,914.80 597.47,954.50 587.32,914.80 577.16,914.80 567.01,914.80 556.86,914.80 546.70,914.80 536.54,928.50 526.39,914.80 516.23,928.50 506.08,962.60 495.92,1002.30 485.77,914.80 475.61,914.80 465.46,914.80 455.31,923.50 445.15,914.80 435.00,954.50 424.84,914.80 414.69,914.80 404.53,914.80 394.38,914.80 384.22,914.80 374.06,914.80 363.91,914.80 353.75,914.80 343.60,914.80 333.44,928.50 323.29,914.80 313.13,914.80 302.98,914.80 292.82,923.50 282.67,914.80 272.51,914.80 262.36,914.80 252.20,914.80 242.05,930.50 231.89,914.80 221.74,914.80 211.58,923.50 201.43,914.80 191.28,963.20 181.12,914.80 170.97,914.80 160.81,914.80 150.66,914.80 140.50,914.80 130.34,954.50 120.19,914.80 110.03,914.80 99.88,914.80 89.72,954.50 79.57,914.80 69.42,923.50" fill="#1f78c1" stroke="#1f78c1" stroke-width="0.5" stroke-linejoin="round"/><polyline points="69.42,1026.70 79.57,1026.70 89.72,1026.70 99.88,1026.70 110.03,1026.70 120.19,1026.70 130.34,1026.70 140.50,1026.70 150.66,1026.70 160.81,1026.70 170.97,1026.70 181.12,1026.70 191.28,1026.70 201.43,1026.70 211.58,1026.70 221.74,1026.70 231.89,1026.70 242.05,1026.70 252.20,1026.70 262.36,1026.70 272.51,1026.70 282.67,1026.70 292.82,1026.70 302.98,1026.70 313.13,1026.70 323.29,1026.70 333.44,1040.40 343.60,1026.70 353.75,1026.70 363.91,1026.70 374.06,1026.70 384.22,1026.70 394.38,1026.70 404.53,1026.70 414.69,1026.70 424.84,1026.70 435.00,1026.70 445.15,1026.70 455.31,1026.70 465.46,1026.70 475.61,1026.70 485.77,1026.70 495.92,1026.70 506.08,1026.70 516.23,1040.40 526.39,1026.70 536.54,1040.40 546.70,1026.70 556.86,1026.70 567.01,1026.70 577.16,1026.70 587.32,1026.70 597.47,1026.70 607.63,1026.70 617.78,1026.70 627.94,1026.70 638.10,1026.70 648.25,1026.70 658.40,1026.70 668.56,1026.70 678.71,1026.70 688.87,1026.70 699.02,1026.70 709.18,1026.70 719.33,1026.70 729.49,1026.70 739.64,1026.70 749.80,1026.70 759.95,1026.70 770.11,1026.70 780.26,1026.70 790.42,1026.70 800.57,1026.70 810.73,1026.70 820.88,1026.70 831.04,1026.70 841.19,1026.70 851.35,1026.70 861.50,1026.70 871.66,1026.70 881.81,1026.70 891.97,1026.70 902.12,1026.70 912.28,1026.70 922.43,1040.40 932.59,1026.70 942.75,1026.70 952.90,1026.70 963.05,1026.70 973.21,1026.70 983.36,1026.70 993.52,1026.70 1003.67,1026.70 1013.83,1026.70 1023.98,1026.70 1034.14,1026.70 1044.30,1026.70 1054.45,1026.70 1064.61,1026.70 1074.76,1026.70 1084.91,1026.70 1095.07,1026.70 1105.22,1026.70 1115.38,1026.70 1125.53,1026.70 1135.69,1026.70 1145.84,1040.40 1156.00,1026.70 1166.15,1026.70 1176.31,1026.70 1186.46,1026.70 1196.62,1026.70 1206.77,1026.70 1216.93,1026.70 1227.09,1026.70 1237.24,1026.70 1247.39,1026.70 1257.55,1026.70 1267.70,1026.70 1277.86,1026.70 1288.01,1040.40 1298.17,1026.70 1308.32,1026.70 1318.48,1026.70 1328.63,1026.70 1338.79,1026.70 1348.94,1026.70 1359.10,1026.70 1369.25,1026.70 1379.41,1026.70 1389.56,1026.70 1399.72,1026.70 1409.88,1026.70 1420.03,1026.70 1430.18,1026.70 1440.34,1026.70 1450.49,1026.70 1460.65,1026.70 1470.80,1026.70 1480.96,1026.70 1491.12,1026.70 1501.27,1026.70 1511.42,1026.70 1521.58,1026.70 1531.73,1026.70 1541.89,1026.70 1552.04,1026.70 1562.20,1026.70 1572.36,1026.70 1582.51,1026.70 1592.66,1026.70 1602.82,1026.70 1612.97,1026.70 1623.13,1026.70 1633.28,1026.70 1643.44,1026.70 1653.59,1040.40 1663.75,1026.70 1673.90,1026.70 1684.06,1026.70 1694.21,1026.70 1704.37,1026.70 1714.52,1026.70 1724.68,1026.70 1734.83,1026.70 1744.99,1026.70 1755.14,1026.70 1765.30,1026.70 1775.45,1040.40 1785.61,1026.70 1795.76,1026.70 1805.92,1026.70 1816.07,1026.70 1826.23,1026.70 1836.38,1026.70 1846.54,1026.70 1856.69,1040.40 1866.85,1026.70 1877.00,1026.70 1887.16,1026.70 1897.31,1026.70 1907.47,1026.70 1917.62,1026.70 1927.78,1026.70 1937.93,1026.70 1948.09,1026.70 1958.24,1026.70 1968.40,1026.70 1978.55,1026.70 1988.71,1026.70 1998.86,1026.70 2009.02,1026.70 2019.17,1026.70 2029.33,1026.70 2039.48,1040.40 2049.64,1026.70 2059.80,1026.70 2069.95,1026.70 2080.10,1026.70 2090.26,1026.70 2100.41,1026.70 2110.57,1026.70 2120.72,1040.40 2130.88,1026.70 2141.03,1026.70 2151.19,1026.70 2161.34,1026.70 2171.50,1026.70 2181.65,1026.70 2191.81,1026.70 2201.96,1026.70 2212.12,1026.70 2222.28,1026.70 2232.43,1026.70 2242.59,1026.70 2252.74,1026.70 2262.89,1040.40 2273.05,1026.70 2283.20,1040.40 2293.36,1026.70 2303.51,1026.70 2313.67,1026.70 2323.82,1026.70 2333.98,1026.70 2344.13,1026.70 2354.29,1026.70 2364.44,1026.70 2374.60,1026.70 2384.75,1040.40 2394.91,1026.70 2405.07,1026.70 2415.22,1026.70 2425.38,1026.70 2435.53,1026.70 2445.68,1026.70 2455.84,1026.70 2465.99,1026.70 2476.15,1026.70 2486.30,1040.40 2496.46,1040.40 2506.61,1040.40" fill="none" stroke="rgba(40,30,20,0.3)" stroke-width="0.7" stroke-linejoin="round"/><polyline points="69.42,1011.00 79.57,1011.00 89.72,1011.00 99.88,1011.00 110.03,1011.00 120.19,1011.00 130.34,1011.00 140.50,1011.00 150.66,1011.00 160.81,1011.00 170.97,1011.00 181.12,1011.00 191.28,1011.00 201.43,1011.00 211.58,1011.00 221.74,1011.00 231.89,1011.00 242.05,1026.70 252.20,1011.00 262.36,1011.00 272.51,1011.00 282.67,1011.00 292.82,1011.00 302.98,1011.00 313.13,1011.00 323.29,1011.00 333.44,1024.70 343.60,1011.00 353.75,1011.00 363.91,1011.00 374.06,1011.00 384.22,1011.00 394.38,1011.00 404.53,1011.00 414.69,1011.00 424.84,1011.00 435.00,1011.00 445.15,1011.00 455.31,1011.00 465.46,1011.00 475.61,1011.00 485.77,1011.00 495.92,1011.00 506.08,1011.00 516.23,1024.70 526.39,1011.00 536.54,1024.70 546.70,1011.00 556.86,1011.00 567.01,1011.00 577.16,1011.00 587.32,1011.00 597.47,1011.00 607.63,1011.00 617.78,1011.00 627.94,1011.00 638.10,1011.00 648.25,1011.00 658.40,1011.00 668.56,1011.00 678.71,1011.00 688.87,1011.00 699.02,1011.00 709.18,1011.00 719.33,1011.00 729.49,1011.00 739.64,1011.00 749.80,1011.00 759.95,1011.00 770.11,1011.00 780.26,1011.00 790.42,1011.00 800.57,1011.00 810.73,1011.00 820.88,1011.00 831.04,1026.70 841.19,1011.00 851.35,1011.00 861.50,1011.00 871.66,1026.70 881.81,1011.00 891.97,1011.00 902.12,1011.00 912.28,1011.00 922.43,1024.70 932.59,1011.00 942.75,1011.00 952.90,1011.00 963.05,1011.00 973.21,1011.00 983.36,1011.00 993.52,1011.00 1003.67,1011.00 1013.83,1011.00 1023.98,1011.00 1034.14,1011.00 1044.30,1011.00 1054.45,1011.00 1064.61,1011.00 1074.76,1011.00 1084.91,1011.00 1095.07,1011.00 1105.22,1011.00 1115.38,1011.00 1125.53,1011.00 1135.69,1011.00 1145.84,1024.70 1156.00,1011.00 1166.15,1011.00 1176.31,1011.00 1186.46,1011.00 1196.62,1011.00 1206.77,1011.00 1216.93,1011.00 1227.09,1011.00 1237.24,1011.00 1247.39,1011.00 1257.55,1011.00 1267.70,1011.00 1277.86,1011.00 1288.01,1024.70 1298.17,1011.00 1308.32,1011.00 1318.48,1011.00 1328.63,1011.00 1338.79,1011.00 1348.94,1011.00 1359.10,1026.70 1369.25,1011.00 1379.41,1011.00 1389.56,1011.00 1399.72,1011.00 1409.88,1011.00 1420.03,1011.00 1430.18,1011.00 1440.34,1011.00 1450.49,1011.00 1460.65,1011.00 1470.80,1011.00 1480.96,1011.00 1491.12,1011.00 1501.27,1011.00 1511.42,1011.00 1521.58,1011.00 1531.73,1011.00 1541.89,1011.00 1552.04,1011.00 1562.20,1011.00 1572.36,1011.00 1582.51,1011.00 1592.66,1011.00 1602.82,1011.00 1612.97,1011.00 1623.13,1011.00 1633.28,1011.00 1643.44,1011.00 1653.59,1024.70 1663.75,1011.00 1673.90,1011.00 1684.06,1026.70 1694.21,1011.00 1704.37,1011.00 1714.52,1011.00 1724.68,1011.00 1734.83,1011.00 1744.99,1011.00 1755.14,1011.00 1765.30,1011.00 1775.45,1024.70 1785.61,1011.00 1795.76,1011.00 1805.92,1011.00 1816.07,1011.00 1826.23,1011.00 1836.38,1011.00 1846.54,1011.00 1856.69,1024.70 1866.85,1011.00 1877.00,1011.00 1887.16,1011.00 1897.31,1011.00 1907.47,1011.00 1917.62,1011.00 1927.78,1011.00 1937.93,1011.00 1948.09,1026.70 1958.24,1011.00 1968.40,1026.70 1978.55,1011.00 1988.71,1011.00 1998.86,1011.00 2009.02,1011.00 2019.17,1011.00 2029.33,1011.00 2039.48,1024.70 2049.64,1011.00 2059.80,1011.00 2069.95,1011.00 2080.10,1011.00 2090.26,1011.00 2100.41,1011.00 2110.57,1011.00 2120.72,1024.70 2130.88,1011.00 2141.03,1011.00 2151.19,1011.00 2161.34,1011.00 2171.50,1011.00 2181.65,1011.00 2191.81,1011.00 2201.96,1011.00 2212.12,1011.00 2222.28,1011.00 2232.43,1011.00 2242.59,1011.00 2252.74,1011.00 2262.89,1024.70 2273.05,1011.00 2283.20,1024.70 2293.36,1011.00 2303.51,1011.00 2313.67,1011.00 2323.82,1011.00 2333.98,1011.00 2344.13,1011.00 2354.29,1011.00 2364.44,1011.00 2374.60,1011.00 2384.75,1024.70 2394.91,1011.00 2405.07,1011.00 2415.22,1011.00 2425.38,1011.00 2435.53,1011.00 2445.68,1011.00 2455.84,1011.00 2465.99,1011.00 2476.15,1011.00 2486.30,1024.70 2496.46,1024.70 2506.61,1024.70" fill="none" stroke="rgba(40,30,20,0.3)" stroke-width="0.7" stroke-linejoin="round"/><polyline points="69.42,971.30 79.57,971.30 89.72,1011.00 99.88,971.30 110.03,971.30 120.19,971.30 130.34,1011.00 140.50,971.30 150.66,971.30 160.81,971.30 170.97,971.30 181.12,971.30 191.28,1011.00 201.43,971.30 211.58,971.30 221.74,971.30 231.89,971.30 242.05,987.00 252.20,971.30 262.36,971.30 272.51,971.30 282.67,971.30 292.82,971.30 302.98,971.30 313.13,971.30 323.29,971.30 333.44,985.00 343.60,971.30 353.75,971.30 363.91,971.30 374.06,971.30 384.22,971.30 394.38,971.30 404.53,971.30 414.69,971.30 424.84,971.30 435.00,1011.00 445.15,971.30 455.31,971.30 465.46,971.30 475.61,971.30 485.77,971.30 495.92,1011.00 506.08,971.30 516.23,985.00 526.39,971.30 536.54,985.00 546.70,971.30 556.86,971.30 567.01,971.30 577.16,971.30 587.32,971.30 597.47,1011.00 607.63,971.30 617.78,1011.00 627.94,971.30 638.10,1011.00 648.25,971.30 658.40,971.30 668.56,971.30 678.71,971.30 688.87,971.30 699.02,971.30 709.18,971.30 719.33,1011.00 729.49,971.30 739.64,1011.00 749.80,971.30 759.95,971.30 770.11,971.30 780.26,971.30 790.42,971.30 800.57,971.30 810.73,971.30 820.88,971.30 831.04,987.00 841.19,971.30 851.35,971.30 861.50,971.30 871.66,987.00 881.81,971.30 891.97,971.30 902.12,971.30 912.28,971.30 922.43,985.00 932.59,971.30 942.75,971.30 952.90,971.30 963.05,971.30 973.21,971.30 983.36,971.30 993.52,971.30 1003.67,971.30 1013.83,971.30 1023.98,971.30 1034.14,971.30 1044.30,971.30 1054.45,971.30 1064.61,971.30 1074.76,971.30 1084.91,1011.00 1095.07,971.30 1105.22,1011.00 1115.38,971.30 1125.53,971.30 1135.69,971.30 1145.84,985.00 1156.00,971.30 1166.15,971.30 1176.31,971.30 1186.46,971.30 1196.62,971.30 1206.77,1011.00 1216.93,971.30 1227.09,971.30 1237.24,971.30 1247.39,971.30 1257.55,971.30 1267.70,971.30 1277.86,971.30 1288.01,985.00 1298.17,971.30 1308.32,971.30 1318.48,971.30 1328.63,971.30 1338.79,971.30 1348.94,971.30 1359.10,987.00 1369.25,971.30 1379.41,971.30 1389.56,971.30 1399.72,971.30 1409.88,1011.00 1420.03,971.30 1430.18,971.30 1440.34,971.30 1450.49,971.30 1460.65,971.30 1470.80,971.30 1480.96,971.30 1491.12,971.30 1501.27,971.30 1511.42,971.30 1521.58,971.30 1531.73,971.30 1541.89,971.30 1552.04,971.30 1562.20,971.30 1572.36,971.30 1582.51,971.30 1592.66,971.30 1602.82,971.30 1612.97,971.30 1623.13,971.30 1633.28,971.30 1643.44,971.30 1653.59,985.00 1663.75,971.30 1673.90,971.30 1684.06,987.00 1694.21,1011.00 1704.37,971.30 1714.52,971.30 1724.68,971.30 1734.83,971.30 1744.99,971.30 1755.14,971.30 1765.30,971.30 1775.45,985.00 1785.61,971.30 1795.76,971.30 1805.92,971.30 1816.07,971.30 1826.23,971.30 1836.38,971.30 1846.54,971.30 1856.69,985.00 1866.85,971.30 1877.00,971.30 1887.16,971.30 1897.31,971.30 1907.47,971.30 1917.62,1011.00 1927.78,971.30 1937.93,1011.00 1948.09,987.00 1958.24,971.30 1968.40,987.00 1978.55,971.30 1988.71,971.30 1998.86,971.30 2009.02,971.30 2019.17,1011.00 2029.33,971.30 2039.48,985.00 2049.64,971.30 2059.80,1011.00 2069.95,971.30 2080.10,971.30 2090.26,971.30 2100.41,971.30 2110.57,1011.00 2120.72,985.00 2130.88,971.30 2141.03,971.30 2151.19,971.30 2161.34,971.30 2171.50,971.30 2181.65,971.30 2191.81,971.30 2201.96,1011.00 2212.12,971.30 2222.28,1011.00 2232.43,971.30 2242.59,971.30 2252.74,971.30 2262.89,985.00 2273.05,971.30 2283.20,1024.70 2293.36,971.30 2303.51,971.30 2313.67,971.30 2323.82,971.30 2333.98,971.30 2344.13,971.30 2354.29,971.30 2364.44,971.30 2374.60,971.30 2384.75,985.00 2394.91,971.30 2405.07,1011.00 2415.22,971.30 2425.38,971.30 2435.53,971.30 2445.68,971.30 2455.84,971.30 2465.99,971.30 2476.15,971.30 2486.30,985.00 2496.46,985.00 2506.61,985.00" fill="none" stroke="rgba(40,30,20,0.3)" stroke-width="0.7" stroke-linejoin="round"/><polyline points="69.42,923.50 79.57,923.50 89.72,963.20 99.88,923.50 110.03,923.50 120.19,923.50 130.34,963.20 140.50,923.50 150.66,923.50 160.81,923.50 170.97,923.50 181.12,923.50 191.28,963.20 201.43,923.50 211.58,923.50 221.74,923.50 231.89,923.50 242.05,939.20 252.20,923.50 262.36,923.50 272.51,923.50 282.67,923.50 292.82,923.50 302.98,923.50 313.13,923.50 323.29,923.50 333.44,937.20 343.60,923.50 353.75,923.50 363.91,923.50 374.06,923.50 384.22,923.50 394.38,923.50 404.53,923.50 414.69,923.50 424.84,923.50 435.00,963.20 445.15,923.50 455.31,923.50 465.46,923.50 475.61,923.50 485.77,923.50 495.92,1011.00 506.08,971.30 516.23,937.20 526.39,923.50 536.54,937.20 546.70,923.50 556.86,923.50 567.01,923.50 577.16,923.50 587.32,923.50 597.47,963.20 607.63,923.50 617.78,963.20 627.94,923.50 638.10,963.20 648.25,971.30 658.40,923.50 668.56,923.50 678.71,923.50 688.87,923.50 699.02,923.50 709.18,923.50 719.33,963.20 729.49,923.50 739.64,963.20 749.80,923.50 759.95,923.50 770.11,923.50 780.26,923.50 790.42,923.50 800.57,923.50 810.73,923.50 820.88,923.50 831.04,939.20 841.19,923.50 851.35,971.30 861.50,923.50 871.66,939.20 881.81,923.50 891.97,923.50 902.12,923.50 912.28,923.50 922.43,937.20 932.59,923.50 942.75,923.50 952.90,971.30 963.05,923.50 973.21,923.50 983.36,923.50 993.52,923.50 1003.67,923.50 1013.83,971.30 1023.98,923.50 1034.14,923.50 1044.30,923.50 1054.45,971.30 1064.61,923.50 1074.76,923.50 1084.91,963.20 1095.07,923.50 1105.22,963.20 1115.38,923.50 1125.53,923.50 1135.69,923.50 1145.84,937.20 1156.00,923.50 1166.15,923.50 1176.31,971.30 1186.46,923.50 1196.62,923.50 1206.77,963.20 1216.93,923.50 1227.09,923.50 1237.24,971.30 1247.39,923.50 1257.55,923.50 1267.70,923.50 1277.86,971.30 1288.01,937.20 1298.17,971.30 1308.32,923.50 1318.48,923.50 1328.63,923.50 1338.79,971.30 1348.94,923.50 1359.10,987.00 1369.25,923.50 1379.41,923.50 1389.56,923.50 1399.72,923.50 1409.88,963.20 1420.03,923.50 1430.18,923.50 1440.34,923.50 1450.49,923.50 1460.65,923.50 1470.80,923.50 1480.96,923.50 1491.12,923.50 1501.27,923.50 1511.42,923.50 1521.58,923.50 1531.73,923.50 1541.89,923.50 1552.04,923.50 1562.20,923.50 1572.36,923.50 1582.51,923.50 1592.66,923.50 1602.82,923.50 1612.97,923.50 1623.13,923.50 1633.28,923.50 1643.44,923.50 1653.59,937.20 1663.75,923.50 1673.90,923.50 1684.06,939.20 1694.21,963.20 1704.37,923.50 1714.52,923.50 1724.68,923.50 1734.83,923.50 1744.99,923.50 1755.14,923.50 1765.30,923.50 1775.45,937.20 1785.61,923.50 1795.76,923.50 1805.92,923.50 1816.07,923.50 1826.23,923.50 1836.38,923.50 1846.54,971.30 1856.69,937.20 1866.85,971.30 1877.00,923.50 1887.16,971.30 1897.31,923.50 1907.47,971.30 1917.62,963.20 1927.78,923.50 1937.93,963.20 1948.09,939.20 1958.24,923.50 1968.40,939.20 1978.55,923.50 1988.71,923.50 1998.86,923.50 2009.02,923.50 2019.17,963.20 2029.33,923.50 2039.48,937.20 2049.64,923.50 2059.80,963.20 2069.95,923.50 2080.10,923.50 2090.26,923.50 2100.41,923.50 2110.57,963.20 2120.72,937.20 2130.88,923.50 2141.03,923.50 2151.19,923.50 2161.34,923.50 2171.50,923.50 2181.65,923.50 2191.81,923.50 2201.96,963.20 2212.12,923.50 2222.28,963.20 2232.43,923.50 2242.59,923.50 2252.74,923.50 2262.89,937.20 2273.05,923.50 2283.20,976.90 2293.36,923.50 2303.51,923.50 2313.67,923.50 2323.82,923.50 2333.98,923.50 2344.13,923.50 2354.29,923.50 2364.44,923.50 2374.60,923.50 2384.75,937.20 2394.91,923.50 2405.07,963.20 2415.22,923.50 2425.38,923.50 2435.53,923.50 2445.68,923.50 2455.84,923.50 2465.99,923.50 2476.15,923.50 2486.30,937.20 2496.46,937.20 2506.61,937.20" fill="none" stroke="rgba(40,30,20,0.3)" stroke-width="0.7" stroke-linejoin="round"/><polyline points="69.42,923.50 79.57,914.80 89.72,954.50 99.88,914.80 110.03,914.80 120.19,914.80 130.34,954.50 140.50,914.80 150.66,914.80 160.81,914.80 170.97,914.80 181.12,914.80 191.28,963.20 201.43,914.80 211.58,923.50 221.74,914.80 231.89,914.80 242.05,930.50 252.20,914.80 262.36,914.80 272.51,914.80 282.67,914.80 292.82,923.50 302.98,914.80 313.13,914.80 323.29,914.80 333.44,928.50 343.60,914.80 353.75,914.80 363.91,914.80 374.06,914.80 384.22,914.80 394.38,914.80 404.53,914.80 414.69,914.80 424.84,914.80 435.00,954.50 445.15,914.80 455.31,923.50 465.46,914.80 475.61,914.80 485.77,914.80 495.92,1002.30 506.08,962.60 516.23,928.50 526.39,914.80 536.54,928.50 546.70,914.80 556.86,914.80 567.01,914.80 577.16,914.80 587.32,914.80 597.47,954.50 607.63,914.80 617.78,954.50 627.94,914.80 638.10,954.50 648.25,962.60 658.40,914.80 668.56,914.80 678.71,914.80 688.87,914.80 699.02,914.80 709.18,914.80 719.33,954.50 729.49,914.80 739.64,954.50 749.80,914.80 759.95,914.80 770.11,914.80 780.26,914.80 790.42,914.80 800.57,914.80 810.73,914.80 820.88,914.80 831.04,930.50 841.19,914.80 851.35,962.60 861.50,914.80 871.66,930.50 881.81,914.80 891.97,914.80 902.12,914.80 912.28,914.80 922.43,928.50 932.59,914.80 942.75,914.80 952.90,962.60 963.05,914.80 973.21,914.80 983.36,914.80 993.52,914.80 1003.67,914.80 1013.83,962.60 1023.98,914.80 1034.14,914.80 1044.30,914.80 1054.45,962.60 1064.61,914.80 1074.76,914.80 1084.91,954.50 1095.07,914.80 1105.22,954.50 1115.38,914.80 1125.53,914.80 1135.69,914.80 1145.84,928.50 1156.00,914.80 1166.15,914.80 1176.31,962.60 1186.46,914.80 1196.62,914.80 1206.77,954.50 1216.93,914.80 1227.09,914.80 1237.24,962.60 1247.39,914.80 1257.55,914.80 1267.70,914.80 1277.86,962.60 1288.01,928.50 1298.17,962.60 1308.32,914.80 1318.48,914.80 1328.63,914.80 1338.79,962.60 1348.94,914.80 1359.10,978.30 1369.25,914.80 1379.41,914.80 1389.56,914.80 1399.72,914.80 1409.88,954.50 1420.03,914.80 1430.18,923.50 1440.34,914.80 1450.49,914.80 1460.65,914.80 1470.80,914.80 1480.96,914.80 1491.12,914.80 1501.27,914.80 1511.42,914.80 1521.58,914.80 1531.73,923.50 1541.89,914.80 1552.04,923.50 1562.20,914.80 1572.36,923.50 1582.51,914.80 1592.66,914.80 1602.82,914.80 1612.97,914.80 1623.13,914.80 1633.28,914.80 1643.44,914.80 1653.59,928.50 1663.75,914.80 1673.90,914.80 1684.06,930.50 1694.21,954.50 1704.37,914.80 1714.52,914.80 1724.68,914.80 1734.83,914.80 1744.99,914.80 1755.14,914.80 1765.30,914.80 1775.45,928.50 1785.61,914.80 1795.76,914.80 1805.92,914.80 1816.07,914.80 1826.23,914.80 1836.38,914.80 1846.54,962.60 1856.69,928.50 1866.85,962.60 1877.00,914.80 1887.16,962.60 1897.31,914.80 1907.47,962.60 1917.62,954.50 1927.78,914.80 1937.93,954.50 1948.09,930.50 1958.24,914.80 1968.40,930.50 1978.55,914.80 1988.71,914.80 1998.86,914.80 2009.02,914.80 2019.17,954.50 2029.33,914.80 2039.48,928.50 2049.64,914.80 2059.80,954.50 2069.95,914.80 2080.10,914.80 2090.26,914.80 2100.41,914.80 2110.57,954.50 2120.72,928.50 2130.88,914.80 2141.03,914.80 2151.19,914.80 2161.34,914.80 2171.50,914.80 2181.65,914.80 2191.81,914.80 2201.96,954.50 2212.12,914.80 2222.28,954.50 2232.43,914.80 2242.59,914.80 2252.74,914.80 2262.89,928.50 2273.05,914.80 2283.20,968.20 2293.36,914.80 2303.51,914.80 2313.67,914.80 2323.82,914.80 2333.98,914.80 2344.13,914.80 2354.29,914.80 2364.44,914.80 2374.60,914.80 2384.75,928.50 2394.91,914.80 2405.07,954.50 2415.22,914.80 2425.38,914.80 2435.53,914.80 2445.68,914.80 2455.84,914.80 2465.99,914.80 2476.15,914.80 2486.30,928.50 2496.46,928.50 2506.61,928.50" fill="none" stroke="rgba(40,30,20,0.3)" stroke-width="0.7" stroke-linejoin="round"/></g></svg><div class="a" style="left:24.9px;top:1079.9px;width:14px;height:4px;border-radius:2px;background:#7eb26d"></div><div class="a" style="left:322px;top:1079.9px;width:14px;height:4px;border-radius:2px;background:#eab839"></div><div class="a" style="left:620px;top:1079.9px;width:14px;height:4px;border-radius:2px;background:#6ed0e0"></div><div class="a" style="left:977.9px;top:1079.9px;width:14px;height:4px;border-radius:2px;background:#ef843c"></div><div class="a" style="left:1339px;top:1079.9px;width:14px;height:4px;border-radius:2px;background:#e24d42"></div><div class="a" style="left:1692.5px;top:1079.9px;width:14px;height:4px;border-radius:2px;background:#1f78c1"></div><div class="a" style="left:2542px;top:0px;width:8px;height:379px;background:#2e2d33;border-radius:0 0 4px 4px"></div><div class="a t" style="left:15.00px;top:14.14px;font-size:12px;color:#6f9cff;letter-spacing:0.706px;-webkit-text-stroke:0.2px currentColor;">Источник данных</div><div class="a t" style="left:143.80px;top:13.15px;font-size:14px;color:#ccccdc;letter-spacing:0.613px;-webkit-text-stroke:0.15px currentColor;">clustername</div><div class="a t" style="left:276.90px;top:14.14px;font-size:12px;color:#6f9cff;letter-spacing:0.754px;-webkit-text-stroke:0.2px currentColor;">Неймспейс</div><div class="a t" style="left:367.70px;top:13.15px;font-size:14px;color:#ccccdc;letter-spacing:0.773px;-webkit-text-stroke:0.15px currentColor;">cert-manager</div><div class="a t" style="left:28.40px;top:51.29px;font-size:15.6px;color:#ccccdc;letter-spacing:1.074px;-webkit-text-stroke:0.25px currentColor;">Основное</div><div class="a t" style="left:28.40px;top:203.09px;font-size:15.6px;color:#ccccdc;letter-spacing:0.743px;-webkit-text-stroke:0.25px currentColor;">CPU Usage</div><div class="a t" style="left:27.40px;top:506.79px;font-size:15.6px;color:#ccccdc;letter-spacing:1.198px;-webkit-text-stroke:0.25px currentColor;">Квота процессора</div><div class="a t" style="left:27.40px;top:811.79px;font-size:15.6px;color:#ccccdc;letter-spacing:1.177px;-webkit-text-stroke:0.25px currentColor;">Memory Usage</div><div class="a t" style="left:15.00px;top:92.35px;font-size:14px;color:#ccccdc;letter-spacing:0.647px;-webkit-text-stroke:0.2px currentColor;">CPU Utilisation (from requests)</div><div class="a t" style="left:289.00px;top:127.12px;font-size:49px;color:#d0d0de;-webkit-text-stroke:1px currentColor;">3</div><div class="a t" style="left:350.74px;top:143.41px;font-size:30px;color:#d0d0de;transform:scaleX(0.76);transform-origin:0 0;-webkit-text-stroke:0.6px currentColor;">%</div><div class="a t" style="left:648.80px;top:92.35px;font-size:14px;color:#ccccdc;letter-spacing:0.644px;-webkit-text-stroke:0.2px currentColor;">CPU Utilisation (from limits)</div><div class="a t" style="left:862.70px;top:127.12px;font-size:49px;color:#d0d0de;letter-spacing:0.689px;-webkit-text-stroke:1px currentColor;">No data</div><div class="a t" style="left:1282.00px;top:92.35px;font-size:14px;color:#ccccdc;letter-spacing:0.764px;-webkit-text-stroke:0.2px currentColor;">Memory Utilisation (from requests)</div><div class="a t" style="left:1531.80px;top:127.12px;font-size:49px;color:#d0d0de;-webkit-text-stroke:1px currentColor;">4</div><div class="a t" style="left:1561.00px;top:127.12px;font-size:49px;color:#d0d0de;-webkit-text-stroke:1px currentColor;">6</div><div class="a t" style="left:1623.34px;top:143.41px;font-size:30px;color:#d0d0de;transform:scaleX(0.76);transform-origin:0 0;-webkit-text-stroke:0.6px currentColor;">%</div><div class="a t" style="left:1916.30px;top:92.35px;font-size:14px;color:#ccccdc;letter-spacing:0.763px;-webkit-text-stroke:0.2px currentColor;">Memory Utilisation (from limits)</div><div class="a t" style="left:2160.30px;top:127.12px;font-size:49px;color:#d0d0de;-webkit-text-stroke:1px currentColor;">2</div><div class="a t" style="left:2189.60px;top:127.12px;font-size:49px;color:#d0d0de;-webkit-text-stroke:1px currentColor;">3</div><div class="a t" style="left:2231.30px;top:127.12px;font-size:49px;color:#d0d0de;-webkit-text-stroke:1px currentColor;">2</div><div class="a t" style="left:2261.64px;top:143.41px;font-size:30px;color:#d0d0de;transform:scaleX(0.76);transform-origin:0 0;-webkit-text-stroke:0.6px currentColor;">%</div><div class="a t" style="left:15.20px;top:244.05px;font-size:14px;color:#ccccdc;letter-spacing:0.359px;-webkit-text-stroke:0.2px currentColor;">CPU Usage</div><div class="a t" style="left:22.90px;top:279.39px;font-size:12px;color:#c4c4d0;letter-spacing:0.674px;-webkit-text-stroke:0.15px currentColor;">0.0300</div><div class="a t" style="left:24.10px;top:303.89px;font-size:12px;color:#c4c4d0;letter-spacing:0.434px;-webkit-text-stroke:0.15px currentColor;">0.0250</div><div class="a t" style="left:23.30px;top:328.39px;font-size:12px;color:#c4c4d0;letter-spacing:0.594px;-webkit-text-stroke:0.15px currentColor;">0.0200</div><div class="a t" style="left:25.30px;top:352.89px;font-size:12px;color:#c4c4d0;letter-spacing:0.194px;-webkit-text-stroke:0.15px currentColor;">0.0150</div><div class="a t" style="left:25.30px;top:377.39px;font-size:12px;color:#c4c4d0;letter-spacing:0.194px;-webkit-text-stroke:0.15px currentColor;">0.0100</div><div class="a t" style="left:16.10px;top:401.89px;font-size:12px;color:#c4c4d0;letter-spacing:0.583px;-webkit-text-stroke:0.15px currentColor;">0.00500</div><div class="a t" style="left:56.30px;top:426.39px;font-size:12px;color:#c4c4d0;-webkit-text-stroke:0.15px currentColor;">0</div><div class="a t" style="left:123.32px;top:440.84px;font-size:12px;color:#c4c4d0;-webkit-text-stroke:0.15px currentColor;">17:54</div><div class="a t" style="left:204.32px;top:440.84px;font-size:12px;color:#c4c4d0;-webkit-text-stroke:0.15px currentColor;">17:56</div><div class="a t" style="left:285.32px;top:440.84px;font-size:12px;color:#c4c4d0;-webkit-text-stroke:0.15px currentColor;">17:58</div><div class="a t" style="left:367.32px;top:440.84px;font-size:12px;color:#c4c4d0;-webkit-text-stroke:0.15px currentColor;">18:00</div><div class="a t" style="left:448.32px;top:440.84px;font-size:12px;color:#c4c4d0;-webkit-text-stroke:0.15px currentColor;">18:02</div><div class="a t" style="left:529.32px;top:440.84px;font-size:12px;color:#c4c4d0;-webkit-text-stroke:0.15px currentColor;">18:04</div><div class="a t" style="left:611.32px;top:440.84px;font-size:12px;color:#c4c4d0;-webkit-text-stroke:0.15px currentColor;">18:06</div><div class="a t" style="left:692.32px;top:440.84px;font-size:12px;color:#c4c4d0;-webkit-text-stroke:0.15px currentColor;">18:08</div><div class="a t" style="left:773.32px;top:440.84px;font-size:12px;color:#c4c4d0;-webkit-text-stroke:0.15px currentColor;">18:10</div><div class="a t" style="left:855.32px;top:440.84px;font-size:12px;color:#c4c4d0;-webkit-text-stroke:0.15px currentColor;">18:12</div><div class="a t" style="left:936.32px;top:440.84px;font-size:12px;color:#c4c4d0;-webkit-text-stroke:0.15px currentColor;">18:14</div><div class="a t" style="left:1017.32px;top:440.84px;font-size:12px;color:#c4c4d0;-webkit-text-stroke:0.15px currentColor;">18:16</div><div class="a t" style="left:1099.32px;top:440.84px;font-size:12px;color:#c4c4d0;-webkit-text-stroke:0.15px currentColor;">18:18</div><div class="a t" style="left:1180.32px;top:440.84px;font-size:12px;color:#c4c4d0;-webkit-text-stroke:0.15px currentColor;">18:20</div><div class="a t" style="left:1261.32px;top:440.84px;font-size:12px;color:#c4c4d0;-webkit-text-stroke:0.15px currentColor;">18:22</div><div class="a t" style="left:1342.32px;top:440.84px;font-size:12px;color:#c4c4d0;-webkit-text-stroke:0.15px currentColor;">18:24</div><div class="a t" style="left:1424.32px;top:440.84px;font-size:12px;color:#c4c4d0;-webkit-text-stroke:0.15px currentColor;">18:26</div><div class="a t" style="left:1505.32px;top:440.84px;font-size:12px;color:#c4c4d0;-webkit-text-stroke:0.15px currentColor;">18:28</div><div class="a t" style="left:1586.32px;top:440.84px;font-size:12px;color:#c4c4d0;-webkit-text-stroke:0.15px currentColor;">18:30</div><div class="a t" style="left:1668.32px;top:440.84px;font-size:12px;color:#c4c4d0;-webkit-text-stroke:0.15px currentColor;">18:32</div><div class="a t" style="left:1749.32px;top:440.84px;font-size:12px;color:#c4c4d0;-webkit-text-stroke:0.15px currentColor;">18:34</div><div class="a t" style="left:1830.32px;top:440.84px;font-size:12px;color:#c4c4d0;-webkit-text-stroke:0.15px currentColor;">18:36</div><div class="a t" style="left:1912.32px;top:440.84px;font-size:12px;color:#c4c4d0;-webkit-text-stroke:0.15px currentColor;">18:38</div><div class="a t" style="left:1993.32px;top:440.84px;font-size:12px;color:#c4c4d0;-webkit-text-stroke:0.15px currentColor;">18:40</div><div class="a t" style="left:2074.32px;top:440.84px;font-size:12px;color:#c4c4d0;-webkit-text-stroke:0.15px currentColor;">18:42</div><div class="a t" style="left:2156.32px;top:440.84px;font-size:12px;color:#c4c4d0;-webkit-text-stroke:0.15px currentColor;">18:44</div><div class="a t" style="left:2237.32px;top:440.84px;font-size:12px;color:#c4c4d0;-webkit-text-stroke:0.15px currentColor;">18:46</div><div class="a t" style="left:2318.32px;top:440.84px;font-size:12px;color:#c4c4d0;-webkit-text-stroke:0.15px currentColor;">18:48</div><div class="a t" style="left:2399.32px;top:440.84px;font-size:12px;color:#c4c4d0;-webkit-text-stroke:0.15px currentColor;">18:50</div><div class="a t" style="left:2481.32px;top:440.84px;font-size:12px;color:#c4c4d0;-webkit-text-stroke:0.15px currentColor;">18:52</div><div class="a t" style="left:53.20px;top:466.24px;font-size:12px;color:#c8c8d6;letter-spacing:0.770px;-webkit-text-stroke:0.2px currentColor;">shturval-cert-manager-5566569f95-qmhkz</div><div class="a t" style="left:350.20px;top:466.24px;font-size:12px;color:#c8c8d6;letter-spacing:0.769px;-webkit-text-stroke:0.2px currentColor;">shturval-cert-manager-5566569f95-rmskm</div><div class="a t" style="left:647.60px;top:466.24px;font-size:12px;color:#c8c8d6;letter-spacing:0.713px;-webkit-text-stroke:0.2px currentColor;">shturval-cert-manager-cainjector-7999b75654-h9kqx</div><div class="a t" style="left:1006.10px;top:466.24px;font-size:12px;color:#c8c8d6;letter-spacing:0.726px;-webkit-text-stroke:0.2px currentColor;">shturval-cert-manager-cainjector-7999b75654-vfswm</div><div class="a t" style="left:1366.60px;top:466.24px;font-size:12px;color:#c8c8d6;letter-spacing:0.774px;-webkit-text-stroke:0.2px currentColor;">shturval-cert-manager-webhook-748d4d5d5d-598vx</div><div class="a t" style="left:1721.40px;top:466.24px;font-size:12px;color:#c8c8d6;letter-spacing:0.753px;-webkit-text-stroke:0.2px currentColor;">shturval-cert-manager-webhook-748d4d5d5d-tcjq4</div><div class="a t" style="left:15.00px;top:548.15px;font-size:14px;color:#ccccdc;letter-spacing:0.400px;-webkit-text-stroke:0.2px currentColor;">CPU Quota</div><div class="a t" style="left:20.80px;top:579.15px;font-size:14px;color:#3d9df0;letter-spacing:1.479px;-webkit-text-stroke:0.2px currentColor;">Под</div><div class="a t" style="left:1315.60px;top:579.15px;font-size:14px;color:#3d9df0;letter-spacing:0.781px;-webkit-text-stroke:0.2px currentColor;">Использование ЦП</div><div class="a t" style="left:1802.50px;top:579.15px;font-size:14px;color:#3d9df0;letter-spacing:0.700px;-webkit-text-stroke:0.2px currentColor;">Запросы ЦП</div><div class="a t" style="left:2151.00px;top:579.15px;font-size:14px;color:#3d9df0;letter-spacing:0.486px;-webkit-text-stroke:0.2px currentColor;">Запросы ЦП %</div><div class="a t" style="left:22.60px;top:612.05px;font-size:14px;color:#d2d2de;letter-spacing:0.884px;-webkit-text-stroke:0.2px currentColor;">shturval-cert-manager-webhook-748d4d5d5d-tcjq4</div><div class="a t" style="left:1317.60px;top:612.05px;font-size:14px;color:#d2d2de;letter-spacing:0.579px;-webkit-text-stroke:0.2px currentColor;">0.00</div><div class="a t" style="left:1803.00px;top:612.05px;font-size:14px;color:#d2d2de;-webkit-text-stroke:0.2px currentColor;">0.01</div><div class="a t" style="left:2151.20px;top:612.05px;font-size:14px;color:#d2d2de;letter-spacing:-0.587px;-webkit-text-stroke:0.2px currentColor;">7.77%</div><div class="a t" style="left:22.60px;top:648.65px;font-size:14px;color:#d2d2de;letter-spacing:0.891px;-webkit-text-stroke:0.2px currentColor;">shturval-cert-manager-webhook-748d4d5d5d-598vx</div><div class="a t" style="left:1317.60px;top:648.65px;font-size:14px;color:#d2d2de;letter-spacing:0.579px;-webkit-text-stroke:0.2px currentColor;">0.00</div><div class="a t" style="left:1803.00px;top:648.65px;font-size:14px;color:#d2d2de;-webkit-text-stroke:0.2px currentColor;">0.01</div><div class="a t" style="left:2151.20px;top:648.65px;font-size:14px;color:#d2d2de;letter-spacing:0.413px;-webkit-text-stroke:0.2px currentColor;">9.04%</div><div class="a t" style="left:22.60px;top:685.15px;font-size:14px;color:#d2d2de;letter-spacing:0.865px;-webkit-text-stroke:0.2px currentColor;">shturval-cert-manager-cainjector-7999b75654-vfswm</div><div class="a t" style="left:1317.60px;top:685.15px;font-size:14px;color:#d2d2de;letter-spacing:0.579px;-webkit-text-stroke:0.2px currentColor;">0.00</div><div class="a t" style="left:1803.00px;top:685.15px;font-size:14px;color:#d2d2de;-webkit-text-stroke:0.2px currentColor;">0.01</div><div class="a t" style="left:2151.20px;top:685.15px;font-size:14px;color:#d2d2de;letter-spacing:-0.112px;-webkit-text-stroke:0.2px currentColor;">8.41%</div><div class="a t" style="left:22.60px;top:721.65px;font-size:14px;color:#d2d2de;letter-spacing:0.838px;-webkit-text-stroke:0.2px currentColor;">shturval-cert-manager-cainjector-7999b75654-h9kqx</div><div class="a t" style="left:1317.60px;top:721.65px;font-size:14px;color:#d2d2de;letter-spacing:0.579px;-webkit-text-stroke:0.2px currentColor;">0.00</div><div class="a t" style="left:1803.00px;top:721.65px;font-size:14px;color:#d2d2de;-webkit-text-stroke:0.2px currentColor;">0.01</div><div class="a t" style="left:2151.20px;top:721.65px;font-size:14px;color:#d2d2de;letter-spacing:-0.247px;-webkit-text-stroke:0.2px currentColor;">21.79%</div><div class="a t" style="left:22.60px;top:757.85px;font-size:14px;color:#d2d2de;letter-spacing:0.915px;-webkit-text-stroke:0.2px currentColor;">shturval-cert-manager-5566569f95-rmskm</div><div class="a t" style="left:1317.60px;top:757.85px;font-size:14px;color:#d2d2de;letter-spacing:0.579px;-webkit-text-stroke:0.2px currentColor;">0.00</div><div class="a t" style="left:1803.00px;top:757.85px;font-size:14px;color:#d2d2de;-webkit-text-stroke:0.2px currentColor;">0.01</div><div class="a t" style="left:2151.20px;top:757.85px;font-size:14px;color:#d2d2de;letter-spacing:-0.007px;-webkit-text-stroke:0.2px currentColor;">21.30%</div><div class="a t" style="left:14.30px;top:852.45px;font-size:14px;color:#ccccdc;letter-spacing:0.791px;-webkit-text-stroke:0.2px currentColor;">Memory Usage (w/o cache)</div><div class="a t" style="left:21.18px;top:887.59px;font-size:12px;color:#c4c4d0;-webkit-text-stroke:0.15px currentColor;">286 MiB</div><div class="a t" style="left:21.18px;top:912.09px;font-size:12px;color:#c4c4d0;-webkit-text-stroke:0.15px currentColor;">238 MiB</div><div class="a t" style="left:21.18px;top:936.59px;font-size:12px;color:#c4c4d0;-webkit-text-stroke:0.15px currentColor;">191 MiB</div><div class="a t" style="left:21.18px;top:961.09px;font-size:12px;color:#c4c4d0;-webkit-text-stroke:0.15px currentColor;">143 MiB</div><div class="a t" style="left:17.85px;top:985.59px;font-size:12px;color:#c4c4d0;-webkit-text-stroke:0.15px currentColor;">95.4 MiB</div><div class="a t" style="left:17.85px;top:1010.09px;font-size:12px;color:#c4c4d0;-webkit-text-stroke:0.15px currentColor;">47.7 MiB</div><div class="a t" style="left:47.19px;top:1034.59px;font-size:12px;color:#c4c4d0;-webkit-text-stroke:0.15px currentColor;">0 B</div><div class="a t" style="left:125.32px;top:1049.04px;font-size:12px;color:#c4c4d0;-webkit-text-stroke:0.15px currentColor;">17:54</div><div class="a t" style="left:206.32px;top:1049.04px;font-size:12px;color:#c4c4d0;-webkit-text-stroke:0.15px currentColor;">17:56</div><div class="a t" style="left:288.32px;top:1049.04px;font-size:12px;color:#c4c4d0;-webkit-text-stroke:0.15px currentColor;">17:58</div><div class="a t" style="left:369.32px;top:1049.04px;font-size:12px;color:#c4c4d0;-webkit-text-stroke:0.15px currentColor;">18:00</div><div class="a t" style="left:450.32px;top:1049.04px;font-size:12px;color:#c4c4d0;-webkit-text-stroke:0.15px currentColor;">18:02</div><div class="a t" style="left:531.32px;top:1049.04px;font-size:12px;color:#c4c4d0;-webkit-text-stroke:0.15px currentColor;">18:04</div><div class="a t" style="left:613.32px;top:1049.04px;font-size:12px;color:#c4c4d0;-webkit-text-stroke:0.15px currentColor;">18:06</div><div class="a t" style="left:694.32px;top:1049.04px;font-size:12px;color:#c4c4d0;-webkit-text-stroke:0.15px currentColor;">18:08</div><div class="a t" style="left:775.32px;top:1049.04px;font-size:12px;color:#c4c4d0;-webkit-text-stroke:0.15px currentColor;">18:10</div><div class="a t" style="left:856.32px;top:1049.04px;font-size:12px;color:#c4c4d0;-webkit-text-stroke:0.15px currentColor;">18:12</div><div class="a t" style="left:938.32px;top:1049.04px;font-size:12px;color:#c4c4d0;-webkit-text-stroke:0.15px currentColor;">18:14</div><div class="a t" style="left:1019.32px;top:1049.04px;font-size:12px;color:#c4c4d0;-webkit-text-stroke:0.15px currentColor;">18:16</div><div class="a t" style="left:1100.32px;top:1049.04px;font-size:12px;color:#c4c4d0;-webkit-text-stroke:0.15px currentColor;">18:18</div><div class="a t" style="left:1181.32px;top:1049.04px;font-size:12px;color:#c4c4d0;-webkit-text-stroke:0.15px currentColor;">18:20</div><div class="a t" style="left:1263.32px;top:1049.04px;font-size:12px;color:#c4c4d0;-webkit-text-stroke:0.15px currentColor;">18:22</div><div class="a t" style="left:1344.32px;top:1049.04px;font-size:12px;color:#c4c4d0;-webkit-text-stroke:0.15px currentColor;">18:24</div><div class="a t" style="left:1425.32px;top:1049.04px;font-size:12px;color:#c4c4d0;-webkit-text-stroke:0.15px currentColor;">18:26</div><div class="a t" style="left:1506.32px;top:1049.04px;font-size:12px;color:#c4c4d0;-webkit-text-stroke:0.15px currentColor;">18:28</div><div class="a t" style="left:1588.32px;top:1049.04px;font-size:12px;color:#c4c4d0;-webkit-text-stroke:0.15px currentColor;">18:30</div><div class="a t" style="left:1669.32px;top:1049.04px;font-size:12px;color:#c4c4d0;-webkit-text-stroke:0.15px currentColor;">18:32</div><div class="a t" style="left:1750.32px;top:1049.04px;font-size:12px;color:#c4c4d0;-webkit-text-stroke:0.15px currentColor;">18:34</div><div class="a t" style="left:1831.32px;top:1049.04px;font-size:12px;color:#c4c4d0;-webkit-text-stroke:0.15px currentColor;">18:36</div><div class="a t" style="left:1912.32px;top:1049.04px;font-size:12px;color:#c4c4d0;-webkit-text-stroke:0.15px currentColor;">18:38</div><div class="a t" style="left:1994.32px;top:1049.04px;font-size:12px;color:#c4c4d0;-webkit-text-stroke:0.15px currentColor;">18:40</div><div class="a t" style="left:2075.32px;top:1049.04px;font-size:12px;color:#c4c4d0;-webkit-text-stroke:0.15px currentColor;">18:42</div><div class="a t" style="left:2156.32px;top:1049.04px;font-size:12px;color:#c4c4d0;-webkit-text-stroke:0.15px currentColor;">18:44</div><div class="a t" style="left:2237.32px;top:1049.04px;font-size:12px;color:#c4c4d0;-webkit-text-stroke:0.15px currentColor;">18:46</div><div class="a t" style="left:2319.32px;top:1049.04px;font-size:12px;color:#c4c4d0;-webkit-text-stroke:0.15px currentColor;">18:48</div><div class="a t" style="left:2400.32px;top:1049.04px;font-size:12px;color:#c4c4d0;-webkit-text-stroke:0.15px currentColor;">18:50</div><div class="a t" style="left:2481.32px;top:1049.04px;font-size:12px;color:#c4c4d0;-webkit-text-stroke:0.15px currentColor;">18:52</div><div class="a t" style="left:53.20px;top:1074.04px;font-size:12px;color:#c8c8d6;letter-spacing:0.770px;-webkit-text-stroke:0.2px currentColor;">shturval-cert-manager-5566569f95-qmhkz</div><div class="a t" style="left:350.20px;top:1074.04px;font-size:12px;color:#c8c8d6;letter-spacing:0.769px;-webkit-text-stroke:0.2px currentColor;">shturval-cert-manager-5566569f95-rmskm</div><div class="a t" style="left:647.60px;top:1074.04px;font-size:12px;color:#c8c8d6;letter-spacing:0.713px;-webkit-text-stroke:0.2px currentColor;">shturval-cert-manager-cainjector-7999b75654-h9kqx</div><div class="a t" style="left:1006.10px;top:1074.04px;font-size:12px;color:#c8c8d6;letter-spacing:0.726px;-webkit-text-stroke:0.2px currentColor;">shturval-cert-manager-cainjector-7999b75654-vfswm</div><div class="a t" style="left:1366.60px;top:1074.04px;font-size:12px;color:#c8c8d6;letter-spacing:0.774px;-webkit-text-stroke:0.2px currentColor;">shturval-cert-manager-webhook-748d4d5d5d-598vx</div><div class="a t" style="left:1721.40px;top:1074.04px;font-size:12px;color:#c8c8d6;letter-spacing:0.753px;-webkit-text-stroke:0.2px currentColor;">shturval-cert-manager-webhook-748d4d5d5d-tcjq4</div>
</body></html>
